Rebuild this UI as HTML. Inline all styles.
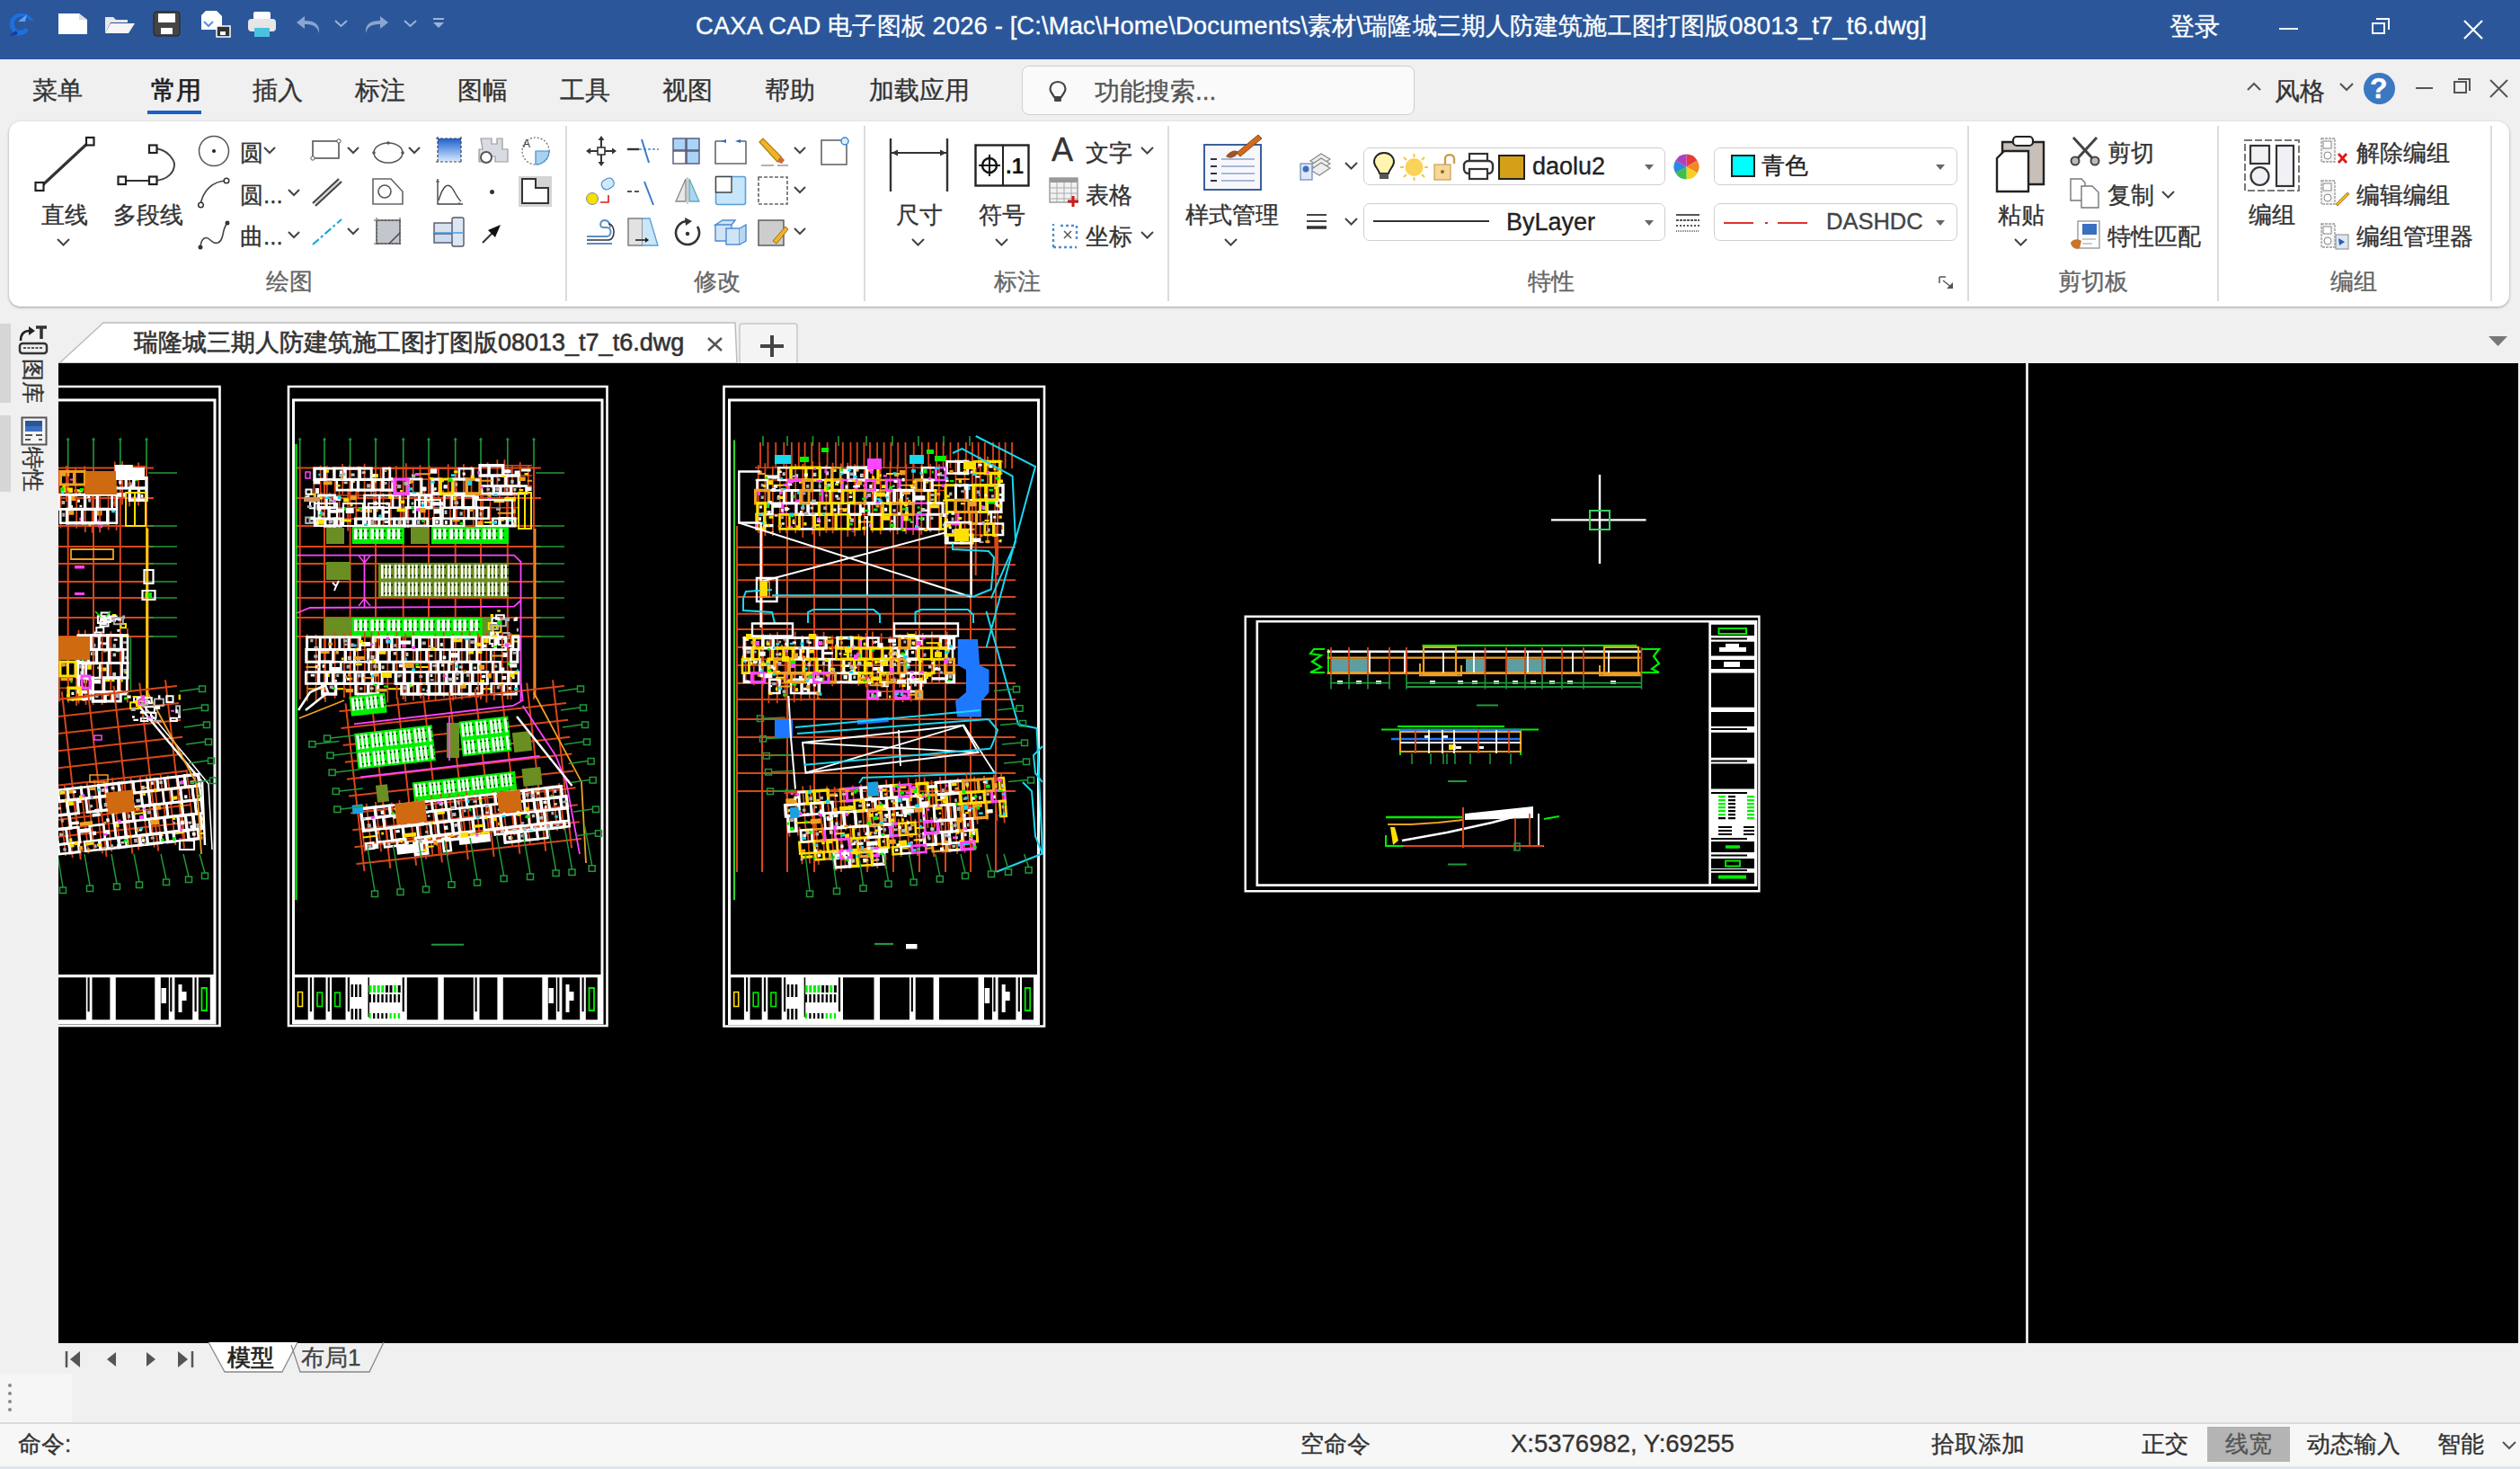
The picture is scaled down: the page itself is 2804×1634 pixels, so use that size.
<!DOCTYPE html>
<html><head><meta charset="utf-8"><style>
html,body{margin:0;padding:0;width:2804px;height:1634px;overflow:hidden;background:#f0f0f0;font-family:"Liberation Sans",sans-serif;}
.a{position:absolute;}
.t{position:absolute;white-space:nowrap;line-height:1;-webkit-text-stroke-width:0.35px;}
svg{position:absolute;overflow:visible;}
#title{position:absolute;left:0;top:0;width:2804px;height:66px;background:#2b579a;}
#menu{position:absolute;left:0;top:66px;width:2804px;height:70px;background:#f0f0f0;}
#ribbon{position:absolute;left:10px;top:135px;width:2782px;height:206px;background:#fff;border-radius:13px;box-shadow:0 1px 3px rgba(0,0,0,.35);}
.mt{font-size:28px;color:#333;}
.rt{font-size:26px;color:#333;}
.gl{font-size:26px;color:#666;}
.sep{position:absolute;width:2px;background:#dcdcdc;top:140px;height:195px;}

</style></head><body>
<div id="title"></div>
<div class="t" style="left:774px;top:15px;font-size:27.4px;letter-spacing:0.125px;color:#fff">CAXA CAD 电子图板 2026 - [C:\Mac\Home\Documents\素材\瑞隆城三期人防建筑施工图打图版08013_t7_t6.dwg]</div>
<div class="t" style="left:2414px;top:16px;font-size:28px;color:#fff">登录</div>
<div class="a" style="left:2536px;top:31px;width:21px;height:2px;background:#fff"></div>
<div class="a" style="left:2639px;top:25px;width:15px;height:13px;border:2px solid #fff;box-sizing:border-box"></div>
<div class="a" style="left:2644px;top:20px;width:15px;height:13px;border-top:2px solid #fff;border-right:2px solid #fff;box-sizing:border-box"></div>
<svg style="left:2741px;top:22px" width="22" height="22"><path d="M1 1L21 21M21 1L1 21" stroke="#fff" stroke-width="2.2"/></svg>
<!-- quick access -->
<svg style="left:6px;top:10px" width="34" height="34" viewBox="0 0 34 34">
 <path d="M6 22 C2 12 10 3 20 5 C26 6 30 10 31 14 L27 12 C24 8 18 7 13 10 C9 13 9 19 12 22 C15 25 20 24 22 21 L26 24 C22 29 15 31 10 28Z" fill="#1e6fe0"/>
 <path d="M14 14 L24 6 L22 14Z" fill="#5aa0ff"/><path d="M4 30 L12 24 L14 28Z" fill="#0b3f9e"/>
</svg>
<svg style="left:64px;top:14px" width="34" height="25" viewBox="0 0 34 25"><path d="M1 1H24L33 8V24H1Z" fill="#fff"/><path d="M24 1V8H33" fill="#ddd"/></svg>
<svg style="left:116px;top:16px" width="34" height="22" viewBox="0 0 34 22"><path d="M1 3H10L13 6H26V9H7L1 21Z" fill="#e8e8e8"/><path d="M7 10H34L27 21H1Z" fill="#f5f5f5"/></svg>
<svg style="left:170px;top:12px" width="31" height="29" viewBox="0 0 31 29"><rect x="1" y="1" width="29" height="27" rx="3" fill="#444" stroke="#222"/><rect x="6" y="3" width="19" height="10" fill="#fff"/><rect x="9" y="19" width="13" height="7" fill="#fff"/></svg>
<svg style="left:223px;top:11px" width="34" height="31" viewBox="0 0 34 31"><path d="M6 1H18L24 7V22H1V6Z" fill="#fff"/><path d="M4 13l5 5 5-5" stroke="#5a8fd8" stroke-width="2" fill="none"/><rect x="18" y="18" width="15" height="12" fill="#333" stroke="#fff" stroke-width="1.5"/><rect x="22" y="24" width="6" height="4" fill="#fff"/></svg>
<svg style="left:275px;top:12px" width="33" height="30" viewBox="0 0 33 30"><rect x="7" y="1" width="19" height="9" rx="2" fill="#fff"/><rect x="1" y="9" width="31" height="14" rx="4" fill="#e6e6e6"/><rect x="8" y="19" width="17" height="10" fill="#49c3e0"/></svg>
<svg style="left:328px;top:16px" width="32" height="22" viewBox="0 0 32 22"><path d="M11 2L2 9L11 16V11C20 11 25 13 27 21C28 11 22 7 11 7Z" fill="#8aa6d0"/></svg>
<svg style="left:372px;top:22px" width="15" height="9"><path d="M1 1L7.5 7L14 1" stroke="#9db3d6" stroke-width="2" fill="none"/></svg>
<svg style="left:402px;top:16px" width="32" height="22" viewBox="0 0 32 22"><path d="M21 2L30 9L21 16V11C12 11 7 13 5 21C4 11 10 7 21 7Z" fill="#8aa6d0"/></svg>
<svg style="left:449px;top:22px" width="15" height="9"><path d="M1 1L7.5 7L14 1" stroke="#9db3d6" stroke-width="2" fill="none"/></svg>
<svg style="left:481px;top:19px" width="14" height="16" viewBox="0 0 14 16"><path d="M1 2H13" stroke="#9db3d6" stroke-width="2"/><path d="M1 6H13L7 12Z" fill="#9db3d6"/></svg>

<div id="menu"></div>
<div class="t mt" style="left:36px;top:87px">菜单</div>
<div class="t mt" style="left:168px;top:87px;color:#222;-webkit-text-stroke-width:0.8px">常用</div>
<div class="a" style="left:164px;top:123px;width:60px;height:4px;background:#1a5fc8"></div>
<div class="t mt" style="left:281px;top:87px">插入</div>
<div class="t mt" style="left:395px;top:87px">标注</div>
<div class="t mt" style="left:509px;top:87px">图幅</div>
<div class="t mt" style="left:623px;top:87px">工具</div>
<div class="t mt" style="left:737px;top:87px">视图</div>
<div class="t mt" style="left:851px;top:87px">帮助</div>
<div class="t mt" style="left:967px;top:87px">加载应用</div>
<div class="a" style="left:1137px;top:73px;width:437px;height:55px;background:#fafafa;border:1.5px solid #d0d0d0;border-radius:8px;box-sizing:border-box"></div>
<div class="t mt" style="left:1218px;top:88px;color:#555">功能搜索...</div>
<div class="t mt" style="left:2531px;top:88px">风格</div>
<div class="a" style="left:2630px;top:81px;width:35px;height:35px;border-radius:50%;background:#3b78c2"></div>
<div class="t" style="left:2637px;top:82px;font-size:32px;font-weight:bold;color:#fff">?</div>
<div class="a" style="left:2688px;top:97px;width:19px;height:2px;background:#555"></div>
<svg style="left:2770px;top:88px" width="21" height="21"><path d="M1 1L20 20M20 1L1 20" stroke="#555" stroke-width="2"/></svg>
<svg style="left:2500px;top:91px" width="16" height="10"><path d="M1 9L8 2L15 9" stroke="#555" stroke-width="2" fill="none"/></svg>
<svg style="left:2603px;top:92px" width="16" height="10"><path d="M1 1L8 8L15 1" stroke="#555" stroke-width="2.2" fill="none"/></svg>
<div class="a" style="left:2730px;top:90px;width:15px;height:14px;border:2px solid #555;box-sizing:border-box"></div>
<div class="a" style="left:2735px;top:87px;width:14px;height:14px;border-top:2px solid #555;border-right:2px solid #555;box-sizing:border-box"></div>
<svg style="left:1166px;top:89px" width="22" height="25" viewBox="0 0 22 25"><path d="M11 2C6 2 2.5 5.5 2.5 10C2.5 14 6 16 7 19H15C16 16 19.5 14 19.5 10C19.5 5.5 16 2 11 2Z" fill="none" stroke="#444" stroke-width="2.2"/><rect x="7" y="19" width="8" height="5" rx="1.5" fill="#444"/></svg>

<div id="ribbon"></div>
<div class="sep" style="left:629px"></div>
<div class="sep" style="left:961px"></div>
<div class="sep" style="left:1299px"></div>
<div class="sep" style="left:2189px"></div>
<div class="sep" style="left:2467px"></div>
<div class="sep" style="left:2771px"></div>
<div class="t gl" style="left:296px;top:300px">绘图</div>
<div class="t gl" style="left:772px;top:300px">修改</div>
<div class="t gl" style="left:1106px;top:300px">标注</div>
<div class="t gl" style="left:1700px;top:300px">特性</div>
<div class="t gl" style="left:2290px;top:300px">剪切板</div>
<div class="t gl" style="left:2593px;top:300px">编组</div>
<!-- ===== draw group ===== -->
<svg style="left:38px;top:151px" width="68" height="64" viewBox="0 0 68 64">
 <path d="M6 58L62 6" stroke="#333" stroke-width="3.2"/>
 <rect x="1.5" y="52" width="9" height="9" fill="#fff" stroke="#222" stroke-width="2.2"/>
 <rect x="58" y="2" width="8.5" height="8.5" fill="#fff" stroke="#222" stroke-width="2.2"/>
</svg>
<div class="t rt" style="left:46px;top:226px">直线</div>
<svg style="left:63px;top:265px" width="15" height="9"><path d="M1 1L7.5 7.5L14 1" stroke="#444" stroke-width="2" fill="none"/></svg>
<svg style="left:130px;top:160px" width="68" height="47" viewBox="0 0 68 47">
 <path d="M6 41H40" stroke="#333" stroke-width="2.2"/>
 <path d="M40 5 C58 5 64 20 64 23 C64 30 58 41 40 41" stroke="#444" stroke-width="2" fill="none"/>
 <rect x="1.5" y="36.5" width="8.5" height="8.5" fill="#fff" stroke="#222" stroke-width="2.2"/>
 <rect x="36" y="36.5" width="8.5" height="8.5" fill="#fff" stroke="#222" stroke-width="2.2"/>
 <rect x="36" y="1.5" width="8.5" height="8.5" fill="#fff" stroke="#222" stroke-width="2.2"/>
</svg>
<div class="t rt" style="left:126px;top:226px">多段线</div>
<!-- row icons -->
<svg style="left:220px;top:150px" width="36" height="36" viewBox="0 0 36 36"><circle cx="18" cy="18" r="16.5" fill="none" stroke="#555" stroke-width="1.5"/><circle cx="18" cy="18" r="2" fill="#222"/></svg>
<div class="t rt" style="left:267px;top:157px">圆</div>
<svg style="left:293px;top:163px" width="14" height="9"><path d="M1 1L7 7L13 1" stroke="#444" stroke-width="2" fill="none"/></svg>
<svg style="left:220px;top:196px" width="36" height="36" viewBox="0 0 36 36"><path d="M3 33 C5 16 17 5 33 5" stroke="#444" stroke-width="1.6" fill="none"/><circle cx="3.5" cy="32" r="2.8" fill="#fff" stroke="#333" stroke-width="1.5"/><circle cx="32" cy="5" r="2.8" fill="#fff" stroke="#333" stroke-width="1.5"/></svg>
<div class="t rt" style="left:267px;top:204px">圆...</div>
<svg style="left:320px;top:210px" width="14" height="9"><path d="M1 1L7 7L13 1" stroke="#444" stroke-width="2" fill="none"/></svg>
<svg style="left:220px;top:243px" width="36" height="36" viewBox="0 0 36 36"><path d="M3 32 C4 20 10 20 14 24 C20 30 26 28 28 18 C29 12 30 8 33 5" stroke="#444" stroke-width="1.6" fill="none"/><circle cx="3" cy="32" r="2.5" fill="#333"/><circle cx="33" cy="5" r="2.5" fill="#333"/></svg>
<div class="t rt" style="left:267px;top:250px">曲...</div>
<svg style="left:320px;top:257px" width="14" height="9"><path d="M1 1L7 7L13 1" stroke="#444" stroke-width="2" fill="none"/></svg>
<svg style="left:345px;top:154px" width="36" height="26" viewBox="0 0 36 26"><rect x="3" y="3" width="29" height="19" fill="none" stroke="#555" stroke-width="1.6"/><circle cx="32" cy="3" r="2.2" fill="#fff" stroke="#555"/><circle cx="3" cy="22" r="2.2" fill="#fff" stroke="#555"/></svg>
<svg style="left:386px;top:163px" width="14" height="9"><path d="M1 1L7 7L13 1" stroke="#444" stroke-width="2" fill="none"/></svg>
<svg style="left:346px;top:196px" width="36" height="34" viewBox="0 0 36 34"><path d="M2 30L31 3M5 33L34 6" stroke="#444" stroke-width="2.2"/><path d="M3.5 31.5L32.5 4.5" stroke="#ccc" stroke-width="1.3"/></svg>
<svg style="left:346px;top:242px" width="36" height="32" viewBox="0 0 36 32"><path d="M2 30L34 2" stroke="#1da5e0" stroke-width="2.2" stroke-dasharray="9 3 3 3"/></svg>
<svg style="left:386px;top:253px" width="14" height="9"><path d="M1 1L7 7L13 1" stroke="#444" stroke-width="2" fill="none"/></svg>
<svg style="left:413px;top:155px" width="38" height="30" viewBox="0 0 38 30"><ellipse cx="19" cy="15" rx="16" ry="11" fill="none" stroke="#555" stroke-width="1.5"/><circle cx="19" cy="4" r="1.8" fill="#555"/><circle cx="3" cy="15" r="1.8" fill="#555"/><circle cx="35" cy="15" r="1.8" fill="#555"/></svg>
<svg style="left:454px;top:163px" width="14" height="9"><path d="M1 1L7 7L13 1" stroke="#444" stroke-width="2" fill="none"/></svg>
<svg style="left:413px;top:197px" width="38" height="32" viewBox="0 0 38 32"><path d="M2 2H22L35 16V30H2Z" fill="none" stroke="#666" stroke-width="1.6"/><circle cx="15" cy="16" r="7" fill="none" stroke="#555" stroke-width="1.6"/></svg>
<svg style="left:415px;top:241px" width="34" height="34" viewBox="0 0 34 34"><rect x="4" y="4" width="26" height="26" fill="#c3c6cc" stroke="#555" stroke-width="1.4"/><path d="M1 4H33M1 30H33M4 1V33M30 1V33" stroke="#555" stroke-width="1" stroke-dasharray="2 2"/><path d="M18 30L30 18" stroke="#444" stroke-width="1.5"/></svg>
<svg style="left:484px;top:151px" width="32" height="32" viewBox="0 0 32 32"><defs><linearGradient id="g1" x1="0" y1="0" x2="0" y2="1"><stop offset="0" stop-color="#1e5fd0"/><stop offset="1" stop-color="#d8ecff"/></linearGradient></defs><rect x="3" y="3" width="26" height="26" fill="url(#g1)"/><path d="M1 3H31M1 29H31M3 1V31M29 1V31" stroke="#444" stroke-width="1.2" stroke-dasharray="3 2"/></svg>
<svg style="left:484px;top:198px" width="32" height="31" viewBox="0 0 32 31"><path d="M3 1V29H31" stroke="#444" stroke-width="1.4" fill="none"/><path d="M4 25C9 8 14 6 18 10C22 14 24 22 29 26" stroke="#444" stroke-width="1.4" fill="none"/><path d="M1 4H5M27 29V27" stroke="#444"/></svg>
<svg style="left:481px;top:240px" width="37" height="36" viewBox="0 0 37 36"><rect x="2" y="8" width="22" height="12" fill="#d9e2ef" stroke="#556" stroke-width="1.4"/><rect x="2" y="20" width="22" height="10" fill="#c9dcf2" stroke="#556" stroke-width="1.4"/><rect x="22" y="2" width="13" height="32" rx="2" fill="#dde6f3" stroke="#556" stroke-width="1.4"/><path d="M2 19H35" stroke="#4a9be0" stroke-width="1.6"/></svg>
<svg style="left:529px;top:150px" width="38" height="35" viewBox="0 0 38 35"><path d="M6 4H18V10H24V4H30V16H36V30H22V24H16V30H4V16H8Z" fill="#d8dbe3" stroke="#999" stroke-width="1.2"/><circle cx="12" cy="25" r="6" fill="#fff" stroke="#555" stroke-width="2"/></svg>
<div class="a" style="left:545px;top:211px;width:5px;height:5px;background:#333;border-radius:50%"></div>
<svg style="left:535px;top:248px" width="24" height="24" viewBox="0 0 24 24"><path d="M2 22L17 7" stroke="#333" stroke-width="2"/><path d="M22 2L8 8L16 16Z" fill="#111"/></svg>
<svg style="left:579px;top:151px" width="36" height="34" viewBox="0 0 36 34"><circle cx="17" cy="17" r="15" fill="none" stroke="#666" stroke-width="1.2" stroke-dasharray="2 2"/><path d="M17 17H32A15 15 0 0 1 17 32Z" fill="#a7d3f0" stroke="#4a8ac8" stroke-width="1.2"/><text x="3" y="13" font-size="12" font-family="Liberation Sans" fill="#333">A</text></svg>
<svg style="left:576px;top:195px" width="39" height="36" viewBox="0 0 39 36"><rect x="1" y="1" width="37" height="34" fill="#d4d4d4"/><path d="M5 4H20V14H34V31H5Z" fill="#fff" stroke="#333" stroke-width="2"/></svg>
<!-- ===== modify group ===== -->
<svg style="left:652px;top:151px" width="34" height="34" viewBox="0 0 34 34"><path d="M17 2V32M2 17H32" stroke="#333" stroke-width="2"/><rect x="13" y="13" width="8" height="8" fill="#fff" stroke="#333" stroke-width="1.6"/><path d="M17 0L13.5 5H20.5ZM17 34L13.5 29H20.5ZM0 17L5 13.5V20.5ZM34 17L29 13.5V20.5Z" fill="#333"/></svg>
<svg style="left:697px;top:153px" width="38" height="30" viewBox="0 0 38 30"><path d="M1 13H14" stroke="#333" stroke-width="2.4"/><path d="M14 13H36" stroke="#4a90d0" stroke-width="1.6" stroke-dasharray="3 2"/><path d="M17 2L25 28" stroke="#3a7ac8" stroke-width="2"/></svg>
<svg style="left:747px;top:152px" width="34" height="32" viewBox="0 0 34 32"><rect x="2" y="2" width="14" height="13" fill="#a9d4f5" stroke="#557" stroke-width="1.4"/><rect x="17" y="2" width="14" height="13" fill="#a9d4f5" stroke="#557" stroke-width="1.4"/><rect x="2" y="16" width="14" height="14" fill="#fff" stroke="#557" stroke-width="1.4"/><rect x="17" y="16" width="14" height="14" fill="#a9d4f5" stroke="#557" stroke-width="1.4"/></svg>
<svg style="left:794px;top:152px" width="38" height="32" viewBox="0 0 38 32"><path d="M2 5V30H36V5" fill="none" stroke="#666" stroke-width="1.6"/><path d="M2 5H10M28 5H36" stroke="#666" stroke-width="1.6"/><path d="M8 5L14 3V7ZM24 5L30 3V7Z" fill="#2a6ac0"/></svg>
<svg style="left:843px;top:152px" width="36" height="34" viewBox="0 0 36 34"><path d="M2 6L6 2L26 22L22 28Z" fill="#f0b429" stroke="#b07d10" stroke-width="1.2"/><path d="M22 28L26 22L30 26L27 30Z" fill="#c86b3c"/><path d="M4 32H18M22 32H34" stroke="#666" stroke-width="1.2"/></svg>
<svg style="left:883px;top:163px" width="14" height="9"><path d="M1 1L7 7L13 1" stroke="#444" stroke-width="2" fill="none"/></svg>
<svg style="left:912px;top:152px" width="34" height="32" viewBox="0 0 34 32"><rect x="2" y="4" width="28" height="27" fill="none" stroke="#666" stroke-width="1.6"/><circle cx="28" cy="5" r="4" fill="#d8efff" stroke="#3a8ad0" stroke-width="1.5"/></svg>
<svg style="left:651px;top:197px" width="36" height="34" viewBox="0 0 36 34"><circle cx="8" cy="24" r="6.5" fill="#f5e000" stroke="#888" stroke-width="1"/><rect x="18" y="2" width="14" height="11" rx="5" transform="rotate(-30 25 7)" fill="#cfe9fb" stroke="#4a90d0" stroke-width="1.2"/><path d="M17 28H26V20" stroke="#d02020" stroke-width="1.6" fill="none"/></svg>
<svg style="left:697px;top:200px" width="38" height="30" viewBox="0 0 38 30"><path d="M1 13H16" stroke="#555" stroke-width="2" stroke-dasharray="5 3"/><path d="M20 2L30 28" stroke="#3a7ac8" stroke-width="2"/></svg>
<svg style="left:748px;top:197px" width="34" height="30" viewBox="0 0 34 30"><path d="M15 2L4 27H15Z" fill="#e8e8e8" stroke="#888" stroke-width="1.3"/><path d="M19 2L30 27H19Z" fill="#a9d4f5" stroke="#6aa" stroke-width="1.3"/><path d="M17 0V30" stroke="#999" stroke-width="1"/></svg>
<svg style="left:795px;top:195px" width="36" height="34" viewBox="0 0 36 34"><rect x="1.5" y="1.5" width="33" height="31" rx="2" fill="#c5e6fb" stroke="#5aa0d8" stroke-width="1.6"/><path d="M1.5 1.5H19V19H1.5Z" fill="#fff" stroke="#444" stroke-width="1.4"/></svg>
<svg style="left:842px;top:195px" width="36" height="34" viewBox="0 0 36 34"><rect x="2" y="2" width="32" height="30" fill="none" stroke="#666" stroke-width="1.6" stroke-dasharray="4 2"/></svg>
<svg style="left:883px;top:207px" width="14" height="9"><path d="M1 1L7 7L13 1" stroke="#444" stroke-width="2" fill="none"/></svg>
<svg style="left:651px;top:241px" width="36" height="32" viewBox="0 0 36 32"><path d="M2 22H24C30 22 30 12 24 12H20C16 12 16 4 22 4C27 4 28 10 28 12" stroke="#5a8fc8" stroke-width="2" fill="none"/><path d="M2 26H26C34 26 34 8 26 8" stroke="#333" stroke-width="1.5" fill="none"/><path d="M2 30H30" stroke="#5a8fc8" stroke-width="2"/></svg>
<svg style="left:697px;top:241px" width="38" height="34" viewBox="0 0 38 34"><rect x="2" y="2" width="16" height="30" fill="#e2e2e2" stroke="#777" stroke-width="1.4"/><path d="M18 2H26L35 32H18" fill="#cbe6f8" stroke="#5aa0d8" stroke-width="1.4"/><path d="M10 26H24" stroke="#222" stroke-width="1.6"/><path d="M25 26L21 23V29Z" fill="#222"/></svg>
<svg style="left:748px;top:242px" width="34" height="32" viewBox="0 0 34 32"><path d="M28 10A13 13 0 1 1 18 4" stroke="#333" stroke-width="2.6" fill="none"/><path d="M14 0L22 4L15 9Z" fill="#333"/><circle cx="17" cy="18" r="2.2" fill="#333"/></svg>
<svg style="left:794px;top:242px" width="38" height="32" viewBox="0 0 38 32"><path d="M2 8L10 3H24L20 8ZM2 8H20V26H2Z" fill="#cfe4f7" stroke="#4a8ad0" stroke-width="1.4"/><rect x="14" y="12" width="15" height="18" fill="#cfe4f7" stroke="#4a8ad0" stroke-width="1.4"/><path d="M29 12L36 8V26L29 30" fill="#b8d8f2" stroke="#4a8ad0" stroke-width="1.4"/></svg>
<svg style="left:842px;top:242px" width="36" height="34" viewBox="0 0 36 34"><rect x="2" y="3" width="28" height="28" fill="#cdcdcd" stroke="#555" stroke-width="1.4"/><path d="M18 26L32 10L35 13L22 29Z" fill="#f0b429" stroke="#a06a10" stroke-width="1"/></svg>
<svg style="left:883px;top:253px" width="14" height="9"><path d="M1 1L7 7L13 1" stroke="#444" stroke-width="2" fill="none"/></svg>
<!-- ===== annotation group ===== -->
<svg style="left:988px;top:153px" width="70" height="61" viewBox="0 0 70 61"><path d="M3 1V60M66 1V60" stroke="#333" stroke-width="2.4"/><path d="M4 17H65" stroke="#333" stroke-width="1.8"/><path d="M4 17L11 13.5V20.5ZM65 17L58 13.5V20.5Z" fill="#333"/></svg>
<div class="t rt" style="left:997px;top:226px">尺寸</div>
<svg style="left:1014px;top:265px" width="15" height="9"><path d="M1 1L7.5 7.5L14 1" stroke="#444" stroke-width="2" fill="none"/></svg>
<svg style="left:1084px;top:160px" width="62" height="48" viewBox="0 0 62 48"><rect x="1.5" y="1.5" width="59" height="45" fill="#fff" stroke="#222" stroke-width="2.4"/><path d="M32 1.5V46.5" stroke="#222" stroke-width="2"/><circle cx="17" cy="24" r="8" fill="none" stroke="#111" stroke-width="2.4"/><path d="M5 24H29M17 12V36" stroke="#111" stroke-width="2"/><text x="35" y="33" font-size="24" font-weight="bold" font-family="Liberation Sans" fill="#111">.1</text></svg>
<div class="t rt" style="left:1089px;top:226px">符号</div>
<svg style="left:1107px;top:265px" width="15" height="9"><path d="M1 1L7.5 7.5L14 1" stroke="#444" stroke-width="2" fill="none"/></svg>
<div class="t" style="left:1170px;top:149px;font-size:36px;color:#333">A</div>
<div class="t rt" style="left:1208px;top:157px">文字</div>
<svg style="left:1269px;top:163px" width="15" height="9"><path d="M1 1L7.5 7.5L14 1" stroke="#444" stroke-width="2" fill="none"/></svg>
<svg style="left:1167px;top:197px" width="36" height="34" viewBox="0 0 36 34"><rect x="1" y="1" width="31" height="27" fill="#f2f2f2" stroke="#888" stroke-width="1.2"/><rect x="1" y="1" width="31" height="5" fill="#999"/><path d="M1 12H32M1 18H32M1 24H32M9 6V28M17 6V28M25 6V28" stroke="#aaa" stroke-width="1"/><path d="M27 21V33M21 27H33" stroke="#d01818" stroke-width="3"/></svg>
<div class="t rt" style="left:1208px;top:204px">表格</div>
<svg style="left:1170px;top:247px" width="30" height="30" viewBox="0 0 30 30"><path d="M2 28V2M2 28H28" stroke="#4a90d0" stroke-width="2.4" stroke-dasharray="3 3"/><path d="M10 4H28V20" stroke="#4a90d0" stroke-width="2.4" stroke-dasharray="3 3" fill="none"/><path d="M14 10L22 18M22 10L14 18" stroke="#555" stroke-width="1.5"/></svg>
<div class="t rt" style="left:1208px;top:250px">坐标</div>
<svg style="left:1269px;top:257px" width="15" height="9"><path d="M1 1L7.5 7.5L14 1" stroke="#444" stroke-width="2" fill="none"/></svg>
<!-- ===== properties group ===== -->
<svg style="left:1338px;top:148px" width="70" height="65" viewBox="0 0 70 65">
 <rect x="2" y="13" width="63" height="50" fill="#f8f8fc" stroke="#3a6098" stroke-width="2"/>
 <path d="M9 29H16M9 37H16M9 45H16M9 53H16" stroke="#334" stroke-width="2"/>
 <path d="M21 29H58M21 37H58M21 45H58M21 53H58" stroke="#8aa4cc" stroke-width="1.6"/>
 <path d="M26 26C30 20 36 18 40 21C38 26 32 30 26 26Z" fill="#a0522d"/>
 <path d="M38 22L62 2L66 6L42 26Z" fill="#d2691e" stroke="#8b4513" stroke-width="1"/>
</svg>
<div class="t rt" style="left:1319px;top:226px">样式管理</div>
<svg style="left:1362px;top:265px" width="15" height="9"><path d="M1 1L7.5 7.5L14 1" stroke="#444" stroke-width="2" fill="none"/></svg>
<svg style="left:1446px;top:167px" width="36" height="34" viewBox="0 0 36 34"><path d="M12 12L24 4L34 10L22 18Z" fill="#eee" stroke="#888" stroke-width="1.2"/><path d="M12 17L24 9L34 15L22 23Z" fill="#eee" stroke="#888" stroke-width="1.2"/><path d="M12 22L24 14L34 20L22 28Z" fill="#eee" stroke="#888" stroke-width="1.2"/><rect x="1" y="15" width="13" height="18" fill="#dfe8f5" stroke="#6a88b8" stroke-width="1.2"/><circle cx="7" cy="21" r="3.5" fill="#3a70c0"/></svg>
<svg style="left:1496px;top:180px" width="15" height="9"><path d="M1 1L7.5 7.5L14 1" stroke="#444" stroke-width="2" fill="none"/></svg>
<div class="a" style="left:1517px;top:164px;width:336px;height:42px;background:#fff;border:1.5px solid #cfcfcf;border-radius:7px;box-sizing:border-box"></div>
<svg style="left:1527px;top:168px" width="26" height="34" viewBox="0 0 26 34"><path d="M13 2C6 2 2 7 2 12C2 17 7 20 8 25H18C19 20 24 17 24 12C24 7 20 2 13 2Z" fill="#fff5b0" stroke="#222" stroke-width="2"/><rect x="8" y="25" width="10" height="6" fill="#555"/></svg>
<svg style="left:1557px;top:170px" width="33" height="32" viewBox="0 0 33 32"><circle cx="16.5" cy="16" r="10" fill="#f9d35a"/><path d="M16.5 1V5M16.5 27V31M1 16H5M28 16H32M5 5L8 8M25 24L28 27M5 27L8 24M25 8L28 5" stroke="#f5c842" stroke-width="2"/></svg>
<svg style="left:1594px;top:168px" width="32" height="34" viewBox="0 0 32 34"><rect x="2" y="15" width="18" height="17" fill="#f5d79a" stroke="#c8a050" stroke-width="1.2"/><path d="M14 15V8C14 3 24 3 24 8V14" stroke="#c8a050" stroke-width="2.4" fill="none"/><circle cx="11" cy="23" r="2" fill="#8a6a20"/></svg>
<svg style="left:1627px;top:169px" width="36" height="32" viewBox="0 0 36 32"><rect x="8" y="2" width="20" height="9" fill="#fff" stroke="#333" stroke-width="2.2"/><rect x="2" y="10" width="32" height="14" rx="5" fill="#fff" stroke="#333" stroke-width="2.4"/><rect x="8" y="19" width="20" height="11" fill="#fff" stroke="#333" stroke-width="2.2"/></svg>
<div class="a" style="left:1667px;top:172px;width:30px;height:28px;background:#d4a017;border:2px solid #222;box-sizing:border-box"></div>
<div class="t" style="left:1705px;top:172px;font-size:27px;color:#222">daolu2</div>
<svg style="left:1830px;top:183px" width="10" height="6"><path d="M0 0H10L5 6Z" fill="#666"/></svg>
<svg style="left:1861px;top:170px" width="31" height="31" viewBox="0 0 31 31"><g transform="translate(15.5 15.5)"><path d="M0 0L0 -14A14 14 0 0 1 12.1 -7Z" fill="#e83a3a"/><path d="M0 0L12.1 -7A14 14 0 0 1 12.1 7Z" fill="#f08a24"/><path d="M0 0L12.1 7A14 14 0 0 1 0 14Z" fill="#f5d020"/><path d="M0 0L0 14A14 14 0 0 1 -12.1 7Z" fill="#3cc04a"/><path d="M0 0L-12.1 7A14 14 0 0 1 -12.1 -7Z" fill="#2a8ae0"/><path d="M0 0L-12.1 -7A14 14 0 0 1 0 -14Z" fill="#b040c0"/></g></svg>
<div class="a" style="left:1907px;top:164px;width:271px;height:42px;background:#fff;border:1.5px solid #cfcfcf;border-radius:7px;box-sizing:border-box"></div>
<div class="a" style="left:1926px;top:172px;width:27px;height:25px;background:#00ffff;border:2px solid #222;box-sizing:border-box"></div>
<div class="t rt" style="left:1960px;top:171px;color:#222">青色</div>
<svg style="left:2154px;top:183px" width="10" height="6"><path d="M0 0H10L5 6Z" fill="#666"/></svg>
<svg style="left:1453px;top:237px" width="24" height="19" viewBox="0 0 24 19"><path d="M1 2H23M1 9H23" stroke="#444" stroke-width="2"/><path d="M1 16H23" stroke="#333" stroke-width="3.5"/></svg>
<svg style="left:1496px;top:242px" width="15" height="9"><path d="M1 1L7.5 7.5L14 1" stroke="#444" stroke-width="2" fill="none"/></svg>
<div class="a" style="left:1517px;top:226px;width:336px;height:42px;background:#fff;border:1.5px solid #cfcfcf;border-radius:7px;box-sizing:border-box"></div>
<div class="a" style="left:1528px;top:245px;width:129px;height:2px;background:#333"></div>
<div class="t" style="left:1676px;top:234px;font-size:27px;color:#222">ByLayer</div>
<svg style="left:1830px;top:245px" width="10" height="6"><path d="M0 0H10L5 6Z" fill="#666"/></svg>
<svg style="left:1864px;top:237px" width="28" height="22" viewBox="0 0 28 22"><path d="M1 2H27" stroke="#555" stroke-width="2"/><path d="M1 8H27" stroke="#555" stroke-width="2" stroke-dasharray="3 1"/><path d="M1 14H27" stroke="#555" stroke-width="2" stroke-dasharray="2 2"/><path d="M1 20H27" stroke="#555" stroke-width="1.5" stroke-dasharray="1 1"/></svg>
<div class="a" style="left:1907px;top:226px;width:271px;height:42px;background:#fff;border:1.5px solid #cfcfcf;border-radius:7px;box-sizing:border-box"></div>
<div class="a" style="left:1918px;top:247px;width:33px;height:2px;background:#e03030"></div>
<div class="a" style="left:1964px;top:247px;width:3px;height:2px;background:#e03030"></div>
<div class="a" style="left:1978px;top:247px;width:33px;height:2px;background:#e03030"></div>
<div class="t" style="left:2032px;top:234px;font-size:25.5px;color:#444">DASHDC</div>
<svg style="left:2154px;top:245px" width="10" height="6"><path d="M0 0H10L5 6Z" fill="#666"/></svg>
<svg style="left:2157px;top:307px" width="17" height="15" viewBox="0 0 17 15"><path d="M1 1H8M1 1V8" stroke="#555" stroke-width="1.5" fill="none"/><path d="M5 5L15 13" stroke="#555" stroke-width="1.5"/><path d="M16 14H9L16 7Z" fill="#555"/></svg>
<!-- ===== clipboard group ===== -->
<svg style="left:2220px;top:150px" width="60" height="66" viewBox="0 0 60 66">
 <path d="M8 8H54V55H8Z" fill="#c8c0b8" stroke="#222" stroke-width="2.4"/>
 <rect x="20" y="2" width="22" height="10" rx="4" fill="#fff" stroke="#222" stroke-width="2.2"/>
 <path d="M2 26L10 18H37V63H2Z" fill="#fff" stroke="#222" stroke-width="2.4"/>
</svg>
<div class="t rt" style="left:2223px;top:226px">粘贴</div>
<svg style="left:2241px;top:265px" width="15" height="9"><path d="M1 1L7.5 7.5L14 1" stroke="#444" stroke-width="2" fill="none"/></svg>
<svg style="left:2303px;top:151px" width="34" height="34" viewBox="0 0 34 34"><path d="M4 2L26 26M30 2L8 26" stroke="#444" stroke-width="3"/><circle cx="6" cy="28" r="4.5" fill="#bbb" stroke="#444" stroke-width="2"/><circle cx="28" cy="28" r="4.5" fill="#bbb" stroke="#444" stroke-width="2"/></svg>
<div class="t rt" style="left:2345px;top:157px">剪切</div>
<svg style="left:2302px;top:197px" width="36" height="35" viewBox="0 0 36 35"><path d="M2 2H14L18 6V26H2Z" fill="#fff" stroke="#777" stroke-width="1.4"/><path d="M14 10H26L33 17V34H14Z" fill="#fff" stroke="#777" stroke-width="1.4"/></svg>
<div class="t rt" style="left:2345px;top:204px">复制</div>
<svg style="left:2405px;top:212px" width="15" height="9"><path d="M1 1L7.5 7.5L14 1" stroke="#444" stroke-width="2" fill="none"/></svg>
<svg style="left:2302px;top:244px" width="36" height="35" viewBox="0 0 36 35"><rect x="10" y="2" width="24" height="30" fill="#fff" stroke="#999" stroke-width="1.4"/><rect x="15" y="5" width="16" height="12" fill="#3a70c0"/><path d="M15 22H30M15 27H26" stroke="#999" stroke-width="1.2"/><path d="M2 26C4 22 10 21 14 24L12 32C8 34 3 32 2 26Z" fill="#c8742a"/></svg>
<div class="t rt" style="left:2345px;top:250px">特性匹配</div>
<!-- ===== group group ===== -->
<svg style="left:2496px;top:154px" width="64" height="60" viewBox="0 0 64 60"><rect x="2" y="2" width="60" height="56" fill="none" stroke="#777" stroke-width="2" stroke-dasharray="8 3"/><rect x="8" y="8" width="21" height="20" fill="#f0f0f5" stroke="#333" stroke-width="2.2"/><rect x="37" y="8" width="19" height="45" fill="#f0f0f5" stroke="#333" stroke-width="2.2"/><circle cx="18.5" cy="42" r="10" fill="#f0f0f5" stroke="#333" stroke-width="2.2"/></svg>
<div class="t rt" style="left:2502px;top:226px">编组</div>
<svg style="left:2581px;top:152px" width="34" height="31" viewBox="0 0 34 31"><rect x="2" y="2" width="15" height="26" fill="#f5f5f5" stroke="#999" stroke-width="1.3" stroke-dasharray="3 1"/><rect x="4" y="5" width="9" height="8" fill="#fff" stroke="#888"/><circle cx="9" cy="21" r="4" fill="#fff" stroke="#888"/><path d="M21 19L30 29M30 19L21 29" stroke="#e01818" stroke-width="2.8"/></svg>
<div class="t rt" style="left:2622px;top:157px">解除编组</div>
<svg style="left:2581px;top:199px" width="34" height="31" viewBox="0 0 34 31"><rect x="2" y="2" width="15" height="26" fill="#f5f5f5" stroke="#999" stroke-width="1.3" stroke-dasharray="3 1"/><rect x="4" y="5" width="9" height="8" fill="#fff" stroke="#888"/><circle cx="9" cy="21" r="4" fill="#fff" stroke="#888"/><path d="M18 28L31 15L33 17L20 30Z" fill="#f0b429" stroke="#a06a10" stroke-width=".8"/></svg>
<div class="t rt" style="left:2622px;top:204px">编辑编组</div>
<svg style="left:2581px;top:247px" width="34" height="31" viewBox="0 0 34 31"><rect x="2" y="2" width="15" height="26" fill="#f5f5f5" stroke="#999" stroke-width="1.3" stroke-dasharray="3 1"/><rect x="4" y="5" width="9" height="8" fill="#fff" stroke="#888"/><circle cx="9" cy="21" r="4" fill="#fff" stroke="#888"/><rect x="18" y="14" width="14" height="16" fill="#dde6f3" stroke="#888"/><path d="M21 18L28 22L22 26Z" fill="#2a60b0"/></svg>
<div class="t rt" style="left:2622px;top:250px">编组管理器</div>

<!-- left sidebar -->
<div class="a" style="left:0;top:360px;width:12px;height:88px;background:#d6d6d6"></div>
<div class="a" style="left:0;top:462px;width:12px;height:85px;background:#d6d6d6"></div>
<svg style="left:20px;top:362px" width="36" height="34" viewBox="0 0 36 34">
 <rect x="2" y="20" width="30" height="11" rx="3" fill="#eee" stroke="#333" stroke-width="2.5"/>
 <path d="M6 25h22" stroke="#555" stroke-width="2" stroke-dasharray="3 1.5"/>
 <path d="M3 17 C3 9 7 6 13 6" stroke="#222" stroke-width="2.5" fill="none"/><path d="M12 1l7 5-7 5z" fill="#222"/>
 <path d="M20 2h12M26 2v13" stroke="#333" stroke-width="3.5"/>
</svg>
<div class="t" style="left:24px;top:399px;font-size:25px;color:#333;writing-mode:vertical-rl;text-orientation:sideways;">图库</div>
<svg style="left:23px;top:463px" width="30" height="33" viewBox="0 0 30 33">
 <rect x="1.5" y="1.5" width="27" height="30" fill="#f4f4f4" stroke="#555" stroke-width="2"/>
 <rect x="5" y="5" width="19" height="12" fill="#3d6fbf"/><rect x="5" y="5" width="19" height="6" fill="#2a5598"/>
 <path d="M5 21h8M5 26h6M17 21h7M20 26h4" stroke="#555" stroke-width="2"/>
</svg>
<div class="t" style="left:24px;top:497px;font-size:25px;color:#333;writing-mode:vertical-rl;text-orientation:sideways;">特性</div>
<!-- document tab -->
<svg style="left:66px;top:357px" width="830" height="48" viewBox="0 0 830 48">
 <path d="M0 47 L49 2 L752 2 L754 47 Z" fill="#fff" stroke="#bdbdbd" stroke-width="1.5"/>
 <path d="M757 47 L757 6 Q757 3 760 3 L818 3 Q821 3 821 6 L821 47" fill="#f4f4f4" stroke="#c8c8c8" stroke-width="1.5"/>
</svg>
<div class="t" style="left:149px;top:368px;font-size:27px;color:#333;-webkit-text-stroke-width:0.6px">瑞隆城三期人防建筑施工图打图版08013_t7_t6.dwg</div>
<svg style="left:786px;top:374px" width="19" height="18"><path d="M2 2L17 16M17 2L2 16" stroke="#555" stroke-width="2.4"/></svg>
<svg style="left:845px;top:372px" width="28" height="26"><path d="M14 1V25M1 13H27" stroke="#444" stroke-width="4"/></svg>
<svg style="left:2769px;top:374px" width="21" height="12"><path d="M0 0H21L10.5 11Z" fill="#777"/></svg>

<div class="a" style="left:65px;top:404px;width:2737px;height:1090px;background:#000"></div>
<svg style="left:0;top:0" width="2804" height="1634" viewBox="0 0 2804 1634">
<defs><clipPath id="cv"><rect x="65" y="404" width="2737" height="1090"/></clipPath></defs>
<g clip-path="url(#cv)">
<path  d="M-110 430L244.5 430L244.5 1141L-110 1141ZM321 430L675.5 430L675.5 1141L321 1141ZM805.5 430L1162 430L1162 1141.5L805.5 1141.5Z" stroke="#ffffff" stroke-width="2.6" fill="none"/>
<path  d="M-104.5 445L239 445L239 1138L-104.5 1138ZM326.5 445L670 445L670 1138L326.5 1138ZM811.5 445L1155.5 445L1155.5 1138.5L811.5 1138.5Z" stroke="#ffffff" stroke-width="3" fill="none"/>
<path d="M-104.5 1084h343.5v53h-343.5Z" fill="#ffffff"/>
<path d="M-103 1087.3h14.7v47h-14.7ZM-81.7 1087.3h13.2v47h-13.2ZM-61.9 1087.3h15.4v47h-15.4ZM21.8 1087.3h34.5v47h-34.5ZM62.8 1087.3h33v47h-33ZM102.5 1087.3h19.9v47h-19.9ZM128.8 1087.3h43.5v47h-43.5ZM178.8 1087.3h9v47h-9ZM194.4 1087.3h19.8v47h-19.8ZM220.8 1087.3h13v47h-13ZM-86.2 1087.3h2.2v38h-2.2ZM-66.3 1087.3h2.2v38h-2.2ZM-44.2 1087.3h2.2v38h-2.2ZM16.7 1087.3h2.2v38h-2.2ZM97.5 1087.3h2.2v38h-2.2ZM189.2 1087.3h2.2v38h-2.2ZM216.5 1087.3h2.2v38h-2.2Z" fill="#000"/>
<path d="M-40.5 1095h2.6v14h-2.6ZM-40.5 1122h2.6v12h-2.6ZM-36 1095h2.6v14h-2.6ZM-36 1122h2.6v12h-2.6ZM-31.5 1095h2.6v14h-2.6ZM-31.5 1122h2.6v12h-2.6ZM-21.5 1087.3h1.5v44h-1.5ZM-20.5 1106h2.4v9h-2.4ZM-15.9 1106h2.4v9h-2.4ZM-15.9 1127h2.2v6h-2.2ZM-11.3 1106h2.4v9h-2.4ZM-11.3 1127h2.2v6h-2.2ZM-6.7 1106h2.4v9h-2.4ZM-6.7 1127h2.2v6h-2.2ZM-2.1 1106h2.4v9h-2.4ZM-2.1 1096h3v8h-3ZM-2.1 1127h2.2v6h-2.2ZM2.5 1106h2.4v9h-2.4ZM2.5 1096h3v8h-3ZM7.1 1106h2.4v9h-2.4ZM11.7 1106h2.4v9h-2.4ZM11.7 1096h3v8h-3Z" fill="#000"/>
<path d="M-20.5 1096h3v8h-3ZM-20.5 1127h2.2v6h-2.2ZM-15.9 1096h3v8h-3ZM-11.3 1096h3v8h-3ZM-6.7 1096h3v8h-3ZM2.5 1127h2.2v6h-2.2ZM7.1 1096h3v8h-3ZM7.1 1127h2.2v6h-2.2ZM11.7 1127h2.2v6h-2.2Z" fill="#00f000"/>
<path d="M179.5 1099h5.5v17h-5.5ZM198.5 1095L202.5 1095L202.5 1103L207.5 1103L207.5 1113L202.5 1113L202.5 1126L198.5 1126ZM326.5 1084h343.5v53h-343.5Z" fill="#ffffff"/>
<path d="M328 1087.3h14.7v47h-14.7ZM349.3 1087.3h13.2v47h-13.2ZM369.1 1087.3h15.4v47h-15.4ZM452.8 1087.3h34.5v47h-34.5ZM493.8 1087.3h33v47h-33ZM533.5 1087.3h19.9v47h-19.9ZM559.8 1087.3h43.5v47h-43.5ZM609.8 1087.3h9v47h-9ZM625.4 1087.3h19.8v47h-19.8ZM651.8 1087.3h13v47h-13ZM344.8 1087.3h2.2v38h-2.2ZM364.7 1087.3h2.2v38h-2.2ZM386.8 1087.3h2.2v38h-2.2ZM447.7 1087.3h2.2v38h-2.2ZM528.5 1087.3h2.2v38h-2.2ZM620.2 1087.3h2.2v38h-2.2ZM647.5 1087.3h2.2v38h-2.2Z" fill="#000"/>
<path d="M390.5 1095h2.6v14h-2.6ZM390.5 1122h2.6v12h-2.6ZM395 1095h2.6v14h-2.6ZM395 1122h2.6v12h-2.6ZM399.5 1095h2.6v14h-2.6ZM399.5 1122h2.6v12h-2.6ZM409.5 1087.3h1.5v44h-1.5ZM410.5 1106h2.4v9h-2.4ZM415.1 1106h2.4v9h-2.4ZM415.1 1127h2.2v6h-2.2ZM419.7 1106h2.4v9h-2.4ZM419.7 1127h2.2v6h-2.2ZM424.3 1106h2.4v9h-2.4ZM424.3 1127h2.2v6h-2.2ZM428.9 1106h2.4v9h-2.4ZM428.9 1096h3v8h-3ZM428.9 1127h2.2v6h-2.2ZM433.5 1106h2.4v9h-2.4ZM433.5 1096h3v8h-3ZM438.1 1106h2.4v9h-2.4ZM442.7 1106h2.4v9h-2.4ZM442.7 1096h3v8h-3Z" fill="#000"/>
<path d="M410.5 1096h3v8h-3ZM410.5 1127h2.2v6h-2.2ZM415.1 1096h3v8h-3ZM419.7 1096h3v8h-3ZM424.3 1096h3v8h-3ZM433.5 1127h2.2v6h-2.2ZM438.1 1096h3v8h-3ZM438.1 1127h2.2v6h-2.2ZM442.7 1127h2.2v6h-2.2Z" fill="#00f000"/>
<path d="M610.5 1099h5.5v17h-5.5ZM629.5 1095L633.5 1095L633.5 1103L638.5 1103L638.5 1113L633.5 1113L633.5 1126L629.5 1126ZM811.7 1084h343.7v53h-343.7Z" fill="#ffffff"/>
<path d="M813.2 1087.3h14.7v47h-14.7ZM834.5 1087.3h13.2v47h-13.2ZM854.3 1087.3h15.4v47h-15.4ZM938 1087.3h34.5v47h-34.5ZM979 1087.3h33v47h-33ZM1018.7 1087.3h19.9v47h-19.9ZM1045 1087.3h43.5v47h-43.5ZM1095 1087.3h9v47h-9ZM1110.6 1087.3h19.8v47h-19.8ZM1137 1087.3h13v47h-13ZM830 1087.3h2.2v38h-2.2ZM849.9 1087.3h2.2v38h-2.2ZM872 1087.3h2.2v38h-2.2ZM932.9 1087.3h2.2v38h-2.2ZM1013.7 1087.3h2.2v38h-2.2ZM1105.4 1087.3h2.2v38h-2.2ZM1132.7 1087.3h2.2v38h-2.2Z" fill="#000"/>
<path d="M875.7 1095h2.6v14h-2.6ZM875.7 1122h2.6v12h-2.6ZM880.2 1095h2.6v14h-2.6ZM880.2 1122h2.6v12h-2.6ZM884.7 1095h2.6v14h-2.6ZM884.7 1122h2.6v12h-2.6ZM894.7 1087.3h1.5v44h-1.5ZM895.7 1106h2.4v9h-2.4ZM900.3 1106h2.4v9h-2.4ZM900.3 1127h2.2v6h-2.2ZM904.9 1106h2.4v9h-2.4ZM904.9 1127h2.2v6h-2.2ZM909.5 1106h2.4v9h-2.4ZM909.5 1127h2.2v6h-2.2ZM914.1 1106h2.4v9h-2.4ZM914.1 1096h3v8h-3ZM914.1 1127h2.2v6h-2.2ZM918.7 1106h2.4v9h-2.4ZM918.7 1096h3v8h-3ZM923.3 1106h2.4v9h-2.4ZM927.9 1106h2.4v9h-2.4ZM927.9 1096h3v8h-3Z" fill="#000"/>
<path d="M895.7 1096h3v8h-3ZM895.7 1127h2.2v6h-2.2ZM900.3 1096h3v8h-3ZM904.9 1096h3v8h-3ZM909.5 1096h3v8h-3ZM918.7 1127h2.2v6h-2.2ZM923.3 1096h3v8h-3ZM923.3 1127h2.2v6h-2.2ZM927.9 1127h2.2v6h-2.2Z" fill="#00f000"/>
<path d="M1095.7 1099h5.5v17h-5.5ZM1114.7 1095L1118.7 1095L1118.7 1103L1123.7 1103L1123.7 1113L1118.7 1113L1118.7 1126L1114.7 1126Z" fill="#ffffff"/>
<path  d="M-99.5 1103.5L-94.5 1103.5L-94.5 1119.5L-99.5 1119.5ZM331.5 1103.5L336.5 1103.5L336.5 1119.5L331.5 1119.5ZM816.7 1103.5L821.7 1103.5L821.7 1119.5L816.7 1119.5Z" stroke="#ffe000" stroke-width="1.6" fill="none"/>
<path  d="M-78 1104L-72.5 1104L-72.5 1119.5L-78 1119.5ZM-58.3 1104L-52.8 1104L-52.8 1119.5L-58.3 1119.5ZM353 1104L358.5 1104L358.5 1119.5L353 1119.5ZM372.7 1104L378.2 1104L378.2 1119.5L372.7 1119.5ZM838.2 1104L843.7 1104L843.7 1119.5L838.2 1119.5ZM857.9 1104L863.4 1104L863.4 1119.5L857.9 1119.5Z" stroke="#00f000" stroke-width="1.6" fill="none"/>
<path  d="M224.5 1099L230 1099L230 1124L224.5 1124ZM655.5 1099L661 1099L661 1124L655.5 1124ZM1140.7 1099L1146.2 1099L1146.2 1124L1140.7 1124Z" stroke="#00f000" stroke-width="1.8" fill="none"/>
<path  d="M333.7 487L333.7 521M361 487L361 521M389.6 487L389.6 521M418 487L418 521M448.7 487L448.7 521M477 487L477 521M506.7 487L506.7 521M535 487L535 521M564.8 487L564.8 521M594 487L594 521" stroke="#1f9a3a" stroke-width="1.6" fill="none"/>
<path  d="M331.7 489L335.7 489M359 489L363 489M387.6 489L391.6 489M416 489L420 489M446.7 489L450.7 489M475 489L479 489M504.7 489L508.7 489M533 489L537 489M562.8 489L566.8 489M592 489L596 489" stroke="#1f9a3a" stroke-width="1.2" fill="none"/>
<path  d="M333.7 520L333.7 778M361 520L361 778M389.6 520L389.6 778M418 520L418 778M448.7 520L448.7 778M477 520L477 778M506.7 520L506.7 778M535 520L535 778M564.8 520L564.8 778M594 520L594 778M329.7 520.6L602 520.6M329.7 554L602 554M329.7 585L602 585M329.7 608L602 608M329.7 627L602 627M329.7 647L602 647M329.7 665L602 665M329.7 687L602 687M329.7 708L602 708" stroke="#d9461a" stroke-width="2" fill="none"/>
<path  d="M596 526L628 526M596 585L628 585M596 608L628 608M596 627L628 627M596 647L628 647M596 665L628 665M596 687L628 687M596 708L628 708" stroke="#1f9a3a" stroke-width="1.5" fill="none"/>
<path  d="M595.5 588L595.5 776" stroke="#f0a020" stroke-width="1.8" fill="none"/>
<path  d="M349.3 520.1L349.3 552.9M356.6 517.8L356.6 551.2M363.8 518L363.8 549.2M372.6 520.6L372.6 549.5M381.2 516L381.2 549.7M389.1 517.2L389.1 554.7M398.5 518.6L398.5 554.9M405.6 515.8L405.6 550.7M413.2 520.3L413.2 550.9M423.5 519.9L423.5 552.5M433 518.8L433 552.3M440.8 518.3L440.8 554.6M451.8 515.3L451.8 551.2M459.7 519.6L459.7 550.2M467.5 517.3L467.5 554.4M477.8 518.1L477.8 552.9M488 520.5L488 553M498.7 516.3L498.7 553.5M507.6 519.9L507.6 553.7M515.9 516.2L515.9 554.8M524.5 518.6L524.5 554.7M535 515.2L535 551.8M542.6 514.3L542.6 550.6M553.4 511.2L553.4 552.3M561.4 511.2L561.4 550.9M569.9 517L569.9 551.3M578.7 514L578.7 550.2M587.8 517L587.8 550.6M357.7 547.5L357.7 586.6M366.8 547.9L366.8 587.2M377.6 543.7L377.6 589.9M387.1 543.5L387.1 590.6M396.3 544.7L396.3 585.3M406.3 546.3L406.3 589.5M415.8 547.3L415.8 585.3M426.5 548.2L426.5 587.8M434.9 547.2L434.9 589.4M445.8 547.4L445.8 588.9M454 545.7L454 587.4M461.7 548L461.7 586.2M472.3 546L472.3 586.3M482.8 543.7L482.8 588.8M493.2 545.3L493.2 588.7M501 546.2L501 588.4M508.1 543.4L508.1 585.9M516.6 548.1L516.6 590.8M526.8 547.8L526.8 590.3M537.2 545L537.2 589M545.5 546.7L545.5 587.7M555.9 544.3L555.9 588.9M564.1 547.5L564.1 587.3M572.6 546L572.6 586.1" stroke="#d9461a" stroke-width="1.8" fill="none"/>
<path  d="M348 521.1L437 521.1M348 533.4L437 533.4M437 521.3L534 521.3M437 533.1L534 533.1M534 517.8L592 517.8M534 529L592 529M534 540.6L592 540.6M354 551L480 551M354 564.7L480 564.7M354 577.1L480 577.1M480 551L577 551M480 564.8L577 564.8M480 576.7L577 576.7" stroke="#d9461a" stroke-width="1.6" fill="none"/>
<path  d="M350 521.1L361.3 521.1L361.3 533.4L350 533.4ZM383.9 521.1L400.2 521.1L400.2 533.4L383.9 533.4ZM398.5 533.4L415 533.4L415 545.1L398.5 545.1ZM425.9 533.4L437 533.4L437 545.1L425.9 545.1ZM481.1 533.1L490 533.1L490 549L481.1 549ZM534.1 517.8L544.1 517.8L544.1 529L534.1 529ZM544.1 517.8L559.6 517.8L559.6 529L544.1 529ZM547.5 529L562.9 529L562.9 540.6L547.5 540.6ZM562.9 529L577.3 529L577.3 540.6L562.9 540.6ZM549.3 540.6L556.9 540.6L556.9 549L549.3 549ZM556.9 540.6L568.5 540.6L568.5 549L556.9 549ZM473.6 551L480 551L480 564.7L473.6 564.7ZM355.3 564.7L366 564.7L366 577.1L355.3 577.1ZM417.2 564.7L426.1 564.7L426.1 577.1L417.2 577.1ZM361.7 577.1L372.4 577.1L372.4 585L361.7 585ZM395.7 577.1L411 577.1L411 585L395.7 585ZM438.8 577.1L449.9 577.1L449.9 585L438.8 585ZM514.9 551L527 551L527 564.8L514.9 564.8ZM482.7 576.7L491 576.7L491 585L482.7 585ZM556 576.7L564.4 576.7L564.4 585L556 585Z" stroke="#ffffff" stroke-width="3.4" fill="none"/>
<path  d="M361.3 521.1L371.9 521.1L371.9 533.4L361.3 533.4ZM426.6 521.1L433.9 521.1L433.9 533.4L426.6 533.4ZM374.8 533.4L391.4 533.4L391.4 545.1L374.8 545.1ZM510.9 521.3L526.2 521.3L526.2 533.1L510.9 533.1ZM535.9 540.6L549.3 540.6L549.3 549L535.9 549ZM568.5 540.6L585.5 540.6L585.5 549L568.5 549ZM405.6 551L422.2 551L422.2 564.7L405.6 564.7ZM422.2 551L437.1 551L437.1 564.7L422.2 564.7ZM437.1 551L444.9 551L444.9 564.7L437.1 564.7ZM454.2 551L466.5 551L466.5 564.7L454.2 564.7ZM421.9 577.1L438.8 577.1L438.8 585L421.9 585ZM494.5 551L502.8 551L502.8 564.8L494.5 564.8ZM502.8 551L514.9 551L514.9 564.8L502.8 564.8ZM492.4 564.8L505.4 564.8L505.4 576.7L492.4 576.7ZM530.8 564.8L543.6 564.8L543.6 576.7L530.8 576.7ZM491 576.7L502.1 576.7L502.1 585L491 585ZM502.1 576.7L516.2 576.7L516.2 585L502.1 585ZM548.4 576.7L556 576.7L556 585L548.4 585Z" stroke="#ffffff" stroke-width="2.6" fill="none"/>
<path  d="M371.9 521.1L383.9 521.1L383.9 533.4L371.9 533.4ZM400.2 521.1L413.2 521.1L413.2 533.4L400.2 533.4ZM391.4 533.4L398.5 533.4L398.5 545.1L391.4 545.1ZM415 533.4L425.9 533.4L425.9 545.1L415 545.1ZM454.1 533.1L468.9 533.1L468.9 549L454.1 549ZM503.9 533.1L519.3 533.1L519.3 549L503.9 549ZM354.4 551L363.3 551L363.3 564.7L354.4 564.7ZM363.3 551L372.4 551L372.4 564.7L363.3 564.7ZM466.5 551L473.6 551L473.6 564.7L466.5 564.7ZM405.7 564.7L417.2 564.7L417.2 577.1L405.7 577.1ZM452 564.7L466.7 564.7L466.7 577.1L452 577.1ZM372.4 577.1L379.6 577.1L379.6 585L372.4 585ZM411 577.1L421.9 577.1L421.9 585L411 585ZM449.9 577.1L459.9 577.1L459.9 585L449.9 585ZM459.9 577.1L475.7 577.1L475.7 585L459.9 585ZM505.4 564.8L521.3 564.8L521.3 576.7L505.4 576.7ZM521.3 564.8L530.8 564.8L530.8 576.7L521.3 576.7ZM564.4 576.7L573.2 576.7L573.2 585L564.4 585Z" stroke="#ffffff" stroke-width="3" fill="none"/>
<path  d="M462 527.2L478.8 527.2M534.1 534.8L547.5 534.8M586.7 534.8L592 534.8M553.7 570.7L569.4 570.7" stroke="#f0a020" stroke-width="2" fill="none"/>
<path  d="M439 533.1L454.1 533.1L454.1 549L439 549Z" stroke="#ff44ff" stroke-width="3.4" fill="none"/>
<path  d="M490 533.1L503.9 533.1L503.9 549L490 549Z" stroke="#ffe000" stroke-width="3" fill="none"/>
<path  d="M519.3 533.1L534 533.1L534 549L519.3 549Z" stroke="#f0a020" stroke-width="3.4" fill="none"/>
<path  d="M549.4 557.9L561.4 557.9M538.9 580.9L548.4 580.9M343.3 549.7L350.7 549.7L350.7 554.1L343.3 554.1Z" stroke="#ffe000" stroke-width="2" fill="none"/>
<path  d="M344.5 576.8L353.9 576.8L353.9 581.1L344.5 581.1ZM340.2 575.5L349.1 575.5L349.1 582L340.2 582Z" stroke="#b0b0b0" stroke-width="2" fill="none"/>
<path  d="M351.7 576.5L354 576.5L354 583.1L351.7 583.1ZM340.5 544.4L346.5 544.4L346.5 549.7L340.5 549.7ZM353.5 562.7L354 562.7L354 566.8L353.5 566.8ZM351.9 544.1L354 544.1L354 548.1L351.9 548.1ZM345 557.8L350.4 557.8L350.4 565.3L345 565.3Z" stroke="#ffffff" stroke-width="2" fill="none"/>
<path d="M362.8 522.6h3.2v3.2h-3.2ZM413.2 527.1h7.7v4.2h-7.7ZM392.9 534.9h1.9v2h-1.9ZM416.5 534.9h2.6v1.9h-2.6ZM378.9 531.2h2.3v3h-2.3ZM374.5 539h4.1v2.5h-4.1ZM477.9 531h4.2v2h-4.2ZM490.7 533.3h3.2v3h-3.2ZM465.7 547.9h5v1.1h-5ZM504.9 523.5h4.4v2.4h-4.4ZM523.8 528.5h3.9v3.6h-3.9ZM445.1 545h2.8v2.2h-2.8ZM533.5 522h0.5v3.1h-0.5ZM558.1 529h4.5v2h-4.5ZM577.5 543.9h4.8v2.4h-4.8ZM583.5 526h4.5v2.6h-4.5ZM355.9 552.5h2.7v3.1h-2.7ZM382.1 554.3h6.2v4.3h-6.2ZM444.9 556.6h5.4v3.4h-5.4ZM441.5 565.6h10.3v3.6h-10.3ZM354.1 577.8h6.5v5.7h-6.5ZM379.6 577.4h11.3v3h-11.3ZM436.3 584.7h2v0.3h-2ZM432.2 551.8h4.4v3.1h-4.4ZM389.7 560.1h2.9v3.1h-2.9ZM504.3 552.5h3.1v4.1h-3.1ZM561.4 552.9h12.5v4.8h-12.5ZM557.5 578.2h3.4v1.6h-3.4ZM570.1 581.2h4.6v2h-4.6ZM568.3 554.2h2.3v3.2h-2.3ZM495.7 584.2h2.1v0.8h-2.1ZM542.4 550.5h4.2v2.1h-4.2ZM352.7 582.5h1.3v2.3h-1.3Z" fill="#ffe000"/>
<path d="M377.8 523.6h3.3v4h-3.3ZM348.7 533.9h7.3v4.6h-7.3ZM432.7 531.1h4.3v3.5h-4.3ZM413.8 527.3h3.5v3.5h-3.5ZM436.1 543.1h0.9v3.4h-0.9ZM478.8 521.5h7.5v5.2h-7.5ZM514.7 525.5h3v3.3h-3ZM468.9 541.6h5.6v4.7h-5.6ZM483.1 542.2h2.6v3.2h-2.6ZM493.5 539.2h4.3v4.4h-4.3ZM528.8 532.4h4.8v3.1h-4.8ZM455.4 534.3h2.3v3.6h-2.3ZM501.5 531.7h4v2.6h-4ZM559.6 522.3h9v3.9h-9ZM572.6 523.4h5.8v5.2h-5.8ZM580 521.4h10.6v3h-10.6ZM585.5 541.4h6.1v4.5h-6.1ZM543.2 547.4h3.2v1.6h-3.2ZM372.4 552.1h6.9v4.9h-6.9ZM415.6 557.7h4.2v4.4h-4.2ZM468.6 557.8h3v3.6h-3ZM366 567h8.1v3.7h-8.1ZM375 565.5h7.5v4.8h-7.5ZM384.7 565.1h9v5.8h-9ZM426.1 568h7.2v3.2h-7.2ZM404 579.1h4.1v3.7h-4.1ZM427.6 579.2h4.4v2.8h-4.4ZM481.3 558.3h11.7v4.2h-11.7ZM527 551.2h5.9v4.8h-5.9ZM482.7 565.8h6.8v5.8h-6.8ZM484.7 578.9h3.1v3.5h-3.1ZM495 578.9h2.8v4.4h-2.8ZM550.4 578.9h2.5v3.6h-2.5ZM533.7 564.7h4.9v2.6h-4.9ZM562.6 582.2h3.4v2.8h-3.4ZM339.3 551.6h4.9v3.1h-4.9ZM345.5 574.8h4.8v3.6h-4.8ZM350.4 584h3.6v1h-3.6Z" fill="#ffffff"/>
<path d="M390.5 526.5h4.1v3.2h-4.1ZM402.7 524.3h3.9v2.6h-3.9ZM382.5 535.4h4.2v2.9h-4.2ZM568.3 533.7h3.4v4.1h-3.4ZM571.4 542.9h3v3.2h-3ZM475.6 555.8h3.8v3.3h-3.8ZM458.7 567.5h3.6v3.4h-3.6ZM442.5 579.1h4v4.1h-4ZM452.4 579.1h2.9v3h-2.9ZM494.6 567.5h2.8v4.4h-2.8ZM533.7 569.7h2.6v4.1h-2.6Z" fill="#c8c8c8"/>
<path d="M428.1 522.6h2.3v2.4h-2.3ZM359.7 535.2h9.9v4.1h-9.9ZM378.5 528.4h3.5v2.4h-3.5ZM455.6 534.6h4.2v2.8h-4.2ZM457 533.5h2.8v3.6h-2.8ZM577.3 530.6h7.4v4.4h-7.4ZM390.1 551.2h6.5v5.1h-6.5ZM396.5 565.7h3.9v3.2h-3.9ZM407.2 566.2h6.8v4.1h-6.8ZM418.7 566.2h1.9v3.4h-1.9ZM466.7 564.9h6.9v5.4h-6.9ZM373.9 578.6h2.3v1.9h-2.3ZM400.7 567.2h3v2.3h-3ZM475.8 556.1h4.2v2.1h-4.2ZM522.8 566.3h3.2v2.6h-3.2ZM569.4 566.3h4.4v4.9h-4.4ZM503.6 578.2h8.1v2.1h-8.1ZM531.3 579.6h5.7v4.7h-5.7ZM565.9 578.2h4.6v2h-4.6Z" fill="#f0a020"/>
<path d="M408.1 538.3h4.2v4.1h-4.2ZM427.9 535.9h2.7v3.2h-2.7ZM380.6 525.7h3.6v3.6h-3.6ZM377.3 527.2h4.4v3.6h-4.4ZM442.1 539.1h4.2v4.1h-4.2ZM506.5 537h2.6v3.8h-2.6ZM449.5 535.8h4.8v3.9h-4.8ZM457.9 527.4h4.5v3.4h-4.5ZM553.4 531.9h3v3.4h-3ZM541.4 542.9h3.7v2.8h-3.7ZM551.3 542.8h3.9v3.1h-3.9ZM562.5 543h2.5v3.4h-2.5ZM366.1 554.2h3v4h-3ZM428.9 558.4h3.9v3.8h-3.9ZM457.5 558.4h2.9v3h-2.9ZM358.4 569.7h2.9v4.1h-2.9ZM365.7 579.1h4.3v3.1h-4.3ZM413.1 579.1h3.2v4.5h-3.2ZM463.8 579.1h3.6v3.8h-3.6ZM369 555.8h4.8v2.7h-4.8ZM511.6 569.3h3.2v4.2h-3.2ZM552 565.3h5v2.5h-5ZM505.3 557.5h4.8v3.5h-4.8ZM341.8 562.3h5.3v2.8h-5.3Z" fill="#b0b0b0"/>
<path d="M354.3 526.8h2.4v2.5h-2.4ZM520.8 534.6h4.3v5.4h-4.3ZM458.3 547.7h4.7v1.3h-4.7ZM501.8 527.3h5v2.8h-5ZM454.6 542.2h4.5v3.4h-4.5ZM438.1 548.8h4.8v0.2h-4.8ZM478.9 534.9h4.9v2.6h-4.9ZM362 552.6h4v2.3h-4ZM421.3 572.5h4.1v2.8h-4.1ZM405 582.9h4.7v2.1h-4.7ZM355.9 568.9h2.3v3.2h-2.3ZM375.6 551.4h3.5v3.6h-3.5ZM469 560.3h2.3v3.4h-2.3ZM549.4 549.2h4.2v2.9h-4.2ZM547.7 579.9h4.9v2.5h-4.9ZM565.8 577.4h3.9v2.2h-3.9Z" fill="#18d8f0"/>
<path d="M435 534.5h2v2.2h-2ZM531.3 523.9h2.7v3.8h-2.7ZM462.4 526.1h3.9v3.1h-3.9ZM438.4 538.5h3.3v2.1h-3.3ZM534.7 540.7h3.1v2.8h-3.1ZM463.1 565.2h4.3v3.3h-4.3ZM371.8 556.3h2.1v3.5h-2.1ZM542.5 553.4h4.1v2.5h-4.1Z" fill="#ff44ff"/>
<path d="M498.7 532.3h4.9v3.7h-4.9ZM591.9 535.9h0.1v3.5h-0.1ZM383.1 565.1h2.1v2.6h-2.1ZM354.8 571.9h2.7v2.7h-2.7ZM469.2 578.3h3.2v2.7h-3.2ZM399 564h3.9v2.8h-3.9ZM457.4 563.6h3.4v2.3h-3.4ZM511.7 580.7h3.8v2.8h-3.8Z" fill="#00f000"/>
<path d="M338 553h18v5h-18Z" fill="#d09060"/>
<path d="M363 587h20v18h-20ZM457 587h20v18h-20Z" fill="#6b8e23"/>
<path d="M391.7 586h58v19h-58ZM480 586h86v19h-86Z" fill="#00f000"/>
<path d="M394 588h3.6v12h-3.6ZM399.4 588h3.6v12h-3.6ZM404.8 588h3.6v12h-3.6ZM412.4 588h3.6v12h-3.6ZM417.8 588h3.6v12h-3.6ZM423.2 588h3.6v12h-3.6ZM430.8 588h3.6v12h-3.6ZM436.2 588h3.6v12h-3.6ZM441.6 588h3.6v12h-3.6ZM482 588h3.6v12h-3.6ZM487.4 588h3.6v12h-3.6ZM492.8 588h3.6v12h-3.6ZM500.4 588h3.6v12h-3.6ZM505.8 588h3.6v12h-3.6ZM511.2 588h3.6v12h-3.6ZM518.8 588h3.6v12h-3.6ZM524.2 588h3.6v12h-3.6ZM529.6 588h3.6v12h-3.6ZM537.2 588h3.6v12h-3.6ZM542.6 588h3.6v12h-3.6ZM548 588h3.6v12h-3.6ZM555.6 588h3.6v12h-3.6Z" fill="#ffffff"/>
<path d="M398 589.8h1.4v1.6h-1.4ZM398 597h1.4v1.6h-1.4ZM403.4 589.8h1.4v1.6h-1.4ZM403.4 597h1.4v1.6h-1.4ZM408.8 589.8h1.4v1.6h-1.4ZM408.8 597h1.4v1.6h-1.4ZM416.4 589.8h1.4v1.6h-1.4ZM416.4 597h1.4v1.6h-1.4ZM421.8 589.8h1.4v1.6h-1.4ZM421.8 597h1.4v1.6h-1.4ZM427.2 589.8h1.4v1.6h-1.4ZM427.2 597h1.4v1.6h-1.4ZM434.8 589.8h1.4v1.6h-1.4ZM434.8 597h1.4v1.6h-1.4ZM440.2 589.8h1.4v1.6h-1.4ZM440.2 597h1.4v1.6h-1.4ZM445.6 589.8h1.4v1.6h-1.4ZM445.6 597h1.4v1.6h-1.4ZM486 589.8h1.4v1.6h-1.4ZM486 597h1.4v1.6h-1.4ZM491.4 589.8h1.4v1.6h-1.4ZM491.4 597h1.4v1.6h-1.4ZM496.8 589.8h1.4v1.6h-1.4ZM496.8 597h1.4v1.6h-1.4ZM504.4 589.8h1.4v1.6h-1.4ZM504.4 597h1.4v1.6h-1.4ZM509.8 589.8h1.4v1.6h-1.4ZM509.8 597h1.4v1.6h-1.4ZM515.2 589.8h1.4v1.6h-1.4ZM515.2 597h1.4v1.6h-1.4ZM522.8 589.8h1.4v1.6h-1.4ZM522.8 597h1.4v1.6h-1.4ZM528.2 589.8h1.4v1.6h-1.4ZM528.2 597h1.4v1.6h-1.4ZM533.6 589.8h1.4v1.6h-1.4ZM533.6 597h1.4v1.6h-1.4ZM541.2 589.8h1.4v1.6h-1.4ZM541.2 597h1.4v1.6h-1.4ZM546.6 589.8h1.4v1.6h-1.4ZM546.6 597h1.4v1.6h-1.4ZM552 589.8h1.4v1.6h-1.4ZM552 597h1.4v1.6h-1.4ZM559.6 589.8h1.4v1.6h-1.4ZM559.6 597h1.4v1.6h-1.4Z" fill="#000"/>
<path d="M363 625h27v20h-27ZM421 626h145v39h-145Z" fill="#6b8e23"/>
<path d="M424 628h2.6v15.5h-2.6ZM428.2 628h2.6v15.5h-2.6ZM432.4 628h2.6v15.5h-2.6ZM438.8 628h2.6v15.5h-2.6ZM443 628h2.6v15.5h-2.6ZM447.2 628h2.6v15.5h-2.6ZM453.6 628h2.6v15.5h-2.6ZM457.8 628h2.6v15.5h-2.6ZM462 628h2.6v15.5h-2.6ZM468.4 628h2.6v15.5h-2.6ZM472.6 628h2.6v15.5h-2.6ZM476.8 628h2.6v15.5h-2.6ZM483.2 628h2.6v15.5h-2.6ZM487.4 628h2.6v15.5h-2.6ZM491.6 628h2.6v15.5h-2.6ZM498 628h2.6v15.5h-2.6ZM502.2 628h2.6v15.5h-2.6ZM506.4 628h2.6v15.5h-2.6ZM512.8 628h2.6v15.5h-2.6ZM517 628h2.6v15.5h-2.6ZM521.2 628h2.6v15.5h-2.6ZM527.6 628h2.6v15.5h-2.6ZM531.8 628h2.6v15.5h-2.6ZM536 628h2.6v15.5h-2.6ZM542.4 628h2.6v15.5h-2.6ZM546.6 628h2.6v15.5h-2.6ZM550.8 628h2.6v15.5h-2.6ZM557.2 628h2.6v15.5h-2.6ZM561.4 628h2.6v15.5h-2.6ZM424 647.5h2.6v15.5h-2.6ZM428.2 647.5h2.6v15.5h-2.6ZM432.4 647.5h2.6v15.5h-2.6ZM438.8 647.5h2.6v15.5h-2.6ZM443 647.5h2.6v15.5h-2.6ZM447.2 647.5h2.6v15.5h-2.6ZM453.6 647.5h2.6v15.5h-2.6ZM457.8 647.5h2.6v15.5h-2.6ZM462 647.5h2.6v15.5h-2.6ZM468.4 647.5h2.6v15.5h-2.6ZM472.6 647.5h2.6v15.5h-2.6ZM476.8 647.5h2.6v15.5h-2.6ZM483.2 647.5h2.6v15.5h-2.6ZM487.4 647.5h2.6v15.5h-2.6ZM491.6 647.5h2.6v15.5h-2.6ZM498 647.5h2.6v15.5h-2.6ZM502.2 647.5h2.6v15.5h-2.6ZM506.4 647.5h2.6v15.5h-2.6ZM512.8 647.5h2.6v15.5h-2.6ZM517 647.5h2.6v15.5h-2.6ZM521.2 647.5h2.6v15.5h-2.6ZM527.6 647.5h2.6v15.5h-2.6ZM531.8 647.5h2.6v15.5h-2.6ZM536 647.5h2.6v15.5h-2.6ZM542.4 647.5h2.6v15.5h-2.6ZM546.6 647.5h2.6v15.5h-2.6ZM550.8 647.5h2.6v15.5h-2.6ZM557.2 647.5h2.6v15.5h-2.6ZM561.4 647.5h2.6v15.5h-2.6Z" fill="#ffffff"/>
<path d="M427 630.3h1.4v1.6h-1.4ZM427 639.6h1.4v1.6h-1.4ZM431.2 630.3h1.4v1.6h-1.4ZM431.2 639.6h1.4v1.6h-1.4ZM435.4 630.3h1.4v1.6h-1.4ZM435.4 639.6h1.4v1.6h-1.4ZM441.8 630.3h1.4v1.6h-1.4ZM441.8 639.6h1.4v1.6h-1.4ZM446 630.3h1.4v1.6h-1.4ZM446 639.6h1.4v1.6h-1.4ZM450.2 630.3h1.4v1.6h-1.4ZM450.2 639.6h1.4v1.6h-1.4ZM456.6 630.3h1.4v1.6h-1.4ZM456.6 639.6h1.4v1.6h-1.4ZM460.8 630.3h1.4v1.6h-1.4ZM460.8 639.6h1.4v1.6h-1.4ZM465 630.3h1.4v1.6h-1.4ZM465 639.6h1.4v1.6h-1.4ZM471.4 630.3h1.4v1.6h-1.4ZM471.4 639.6h1.4v1.6h-1.4ZM475.6 630.3h1.4v1.6h-1.4ZM475.6 639.6h1.4v1.6h-1.4ZM479.8 630.3h1.4v1.6h-1.4ZM479.8 639.6h1.4v1.6h-1.4ZM486.2 630.3h1.4v1.6h-1.4ZM486.2 639.6h1.4v1.6h-1.4ZM490.4 630.3h1.4v1.6h-1.4ZM490.4 639.6h1.4v1.6h-1.4ZM494.6 630.3h1.4v1.6h-1.4ZM494.6 639.6h1.4v1.6h-1.4ZM501 630.3h1.4v1.6h-1.4ZM501 639.6h1.4v1.6h-1.4ZM505.2 630.3h1.4v1.6h-1.4ZM505.2 639.6h1.4v1.6h-1.4ZM509.4 630.3h1.4v1.6h-1.4ZM509.4 639.6h1.4v1.6h-1.4ZM515.8 630.3h1.4v1.6h-1.4ZM515.8 639.6h1.4v1.6h-1.4ZM520 630.3h1.4v1.6h-1.4ZM520 639.6h1.4v1.6h-1.4ZM524.2 630.3h1.4v1.6h-1.4ZM524.2 639.6h1.4v1.6h-1.4ZM530.6 630.3h1.4v1.6h-1.4ZM530.6 639.6h1.4v1.6h-1.4ZM534.8 630.3h1.4v1.6h-1.4ZM534.8 639.6h1.4v1.6h-1.4ZM539 630.3h1.4v1.6h-1.4ZM539 639.6h1.4v1.6h-1.4ZM545.4 630.3h1.4v1.6h-1.4ZM545.4 639.6h1.4v1.6h-1.4ZM549.6 630.3h1.4v1.6h-1.4ZM549.6 639.6h1.4v1.6h-1.4ZM553.8 630.3h1.4v1.6h-1.4ZM553.8 639.6h1.4v1.6h-1.4ZM560.2 630.3h1.4v1.6h-1.4ZM560.2 639.6h1.4v1.6h-1.4ZM564.4 630.3h1.4v1.6h-1.4ZM564.4 639.6h1.4v1.6h-1.4ZM427 649.8h1.4v1.6h-1.4ZM427 659.1h1.4v1.6h-1.4ZM431.2 649.8h1.4v1.6h-1.4ZM431.2 659.1h1.4v1.6h-1.4ZM435.4 649.8h1.4v1.6h-1.4ZM435.4 659.1h1.4v1.6h-1.4ZM441.8 649.8h1.4v1.6h-1.4ZM441.8 659.1h1.4v1.6h-1.4ZM446 649.8h1.4v1.6h-1.4ZM446 659.1h1.4v1.6h-1.4ZM450.2 649.8h1.4v1.6h-1.4ZM450.2 659.1h1.4v1.6h-1.4ZM456.6 649.8h1.4v1.6h-1.4ZM456.6 659.1h1.4v1.6h-1.4ZM460.8 649.8h1.4v1.6h-1.4ZM460.8 659.1h1.4v1.6h-1.4ZM465 649.8h1.4v1.6h-1.4ZM465 659.1h1.4v1.6h-1.4ZM471.4 649.8h1.4v1.6h-1.4ZM471.4 659.1h1.4v1.6h-1.4ZM475.6 649.8h1.4v1.6h-1.4ZM475.6 659.1h1.4v1.6h-1.4ZM479.8 649.8h1.4v1.6h-1.4ZM479.8 659.1h1.4v1.6h-1.4ZM486.2 649.8h1.4v1.6h-1.4ZM486.2 659.1h1.4v1.6h-1.4ZM490.4 649.8h1.4v1.6h-1.4ZM490.4 659.1h1.4v1.6h-1.4ZM494.6 649.8h1.4v1.6h-1.4ZM494.6 659.1h1.4v1.6h-1.4ZM501 649.8h1.4v1.6h-1.4ZM501 659.1h1.4v1.6h-1.4ZM505.2 649.8h1.4v1.6h-1.4ZM505.2 659.1h1.4v1.6h-1.4ZM509.4 649.8h1.4v1.6h-1.4ZM509.4 659.1h1.4v1.6h-1.4ZM515.8 649.8h1.4v1.6h-1.4ZM515.8 659.1h1.4v1.6h-1.4ZM520 649.8h1.4v1.6h-1.4ZM520 659.1h1.4v1.6h-1.4ZM524.2 649.8h1.4v1.6h-1.4ZM524.2 659.1h1.4v1.6h-1.4ZM530.6 649.8h1.4v1.6h-1.4ZM530.6 659.1h1.4v1.6h-1.4ZM534.8 649.8h1.4v1.6h-1.4ZM534.8 659.1h1.4v1.6h-1.4ZM539 649.8h1.4v1.6h-1.4ZM539 659.1h1.4v1.6h-1.4ZM545.4 649.8h1.4v1.6h-1.4ZM545.4 659.1h1.4v1.6h-1.4ZM549.6 649.8h1.4v1.6h-1.4ZM549.6 659.1h1.4v1.6h-1.4ZM553.8 649.8h1.4v1.6h-1.4ZM553.8 659.1h1.4v1.6h-1.4ZM560.2 649.8h1.4v1.6h-1.4ZM560.2 659.1h1.4v1.6h-1.4ZM564.4 649.8h1.4v1.6h-1.4ZM564.4 659.1h1.4v1.6h-1.4Z" fill="#000"/>
<path d="M361 687h187v21h-187Z" fill="#6b8e23"/>
<path d="M391.7 687h145v21h-145Z" fill="#00f000"/>
<path d="M394 689h3.6v13h-3.6ZM399.4 689h3.6v13h-3.6ZM404.8 689h3.6v13h-3.6ZM412.4 689h3.6v13h-3.6ZM417.8 689h3.6v13h-3.6ZM423.2 689h3.6v13h-3.6ZM430.8 689h3.6v13h-3.6ZM436.2 689h3.6v13h-3.6ZM441.6 689h3.6v13h-3.6ZM449.2 689h3.6v13h-3.6ZM454.6 689h3.6v13h-3.6ZM460 689h3.6v13h-3.6ZM467.6 689h3.6v13h-3.6ZM473 689h3.6v13h-3.6ZM478.4 689h3.6v13h-3.6ZM486 689h3.6v13h-3.6ZM491.4 689h3.6v13h-3.6ZM496.8 689h3.6v13h-3.6ZM504.4 689h3.6v13h-3.6ZM509.8 689h3.6v13h-3.6ZM515.2 689h3.6v13h-3.6ZM522.8 689h3.6v13h-3.6ZM528.2 689h3.6v13h-3.6Z" fill="#ffffff"/>
<path d="M398 691h1.4v1.6h-1.4ZM398 698.8h1.4v1.6h-1.4ZM403.4 691h1.4v1.6h-1.4ZM403.4 698.8h1.4v1.6h-1.4ZM408.8 691h1.4v1.6h-1.4ZM408.8 698.8h1.4v1.6h-1.4ZM416.4 691h1.4v1.6h-1.4ZM416.4 698.8h1.4v1.6h-1.4ZM421.8 691h1.4v1.6h-1.4ZM421.8 698.8h1.4v1.6h-1.4ZM427.2 691h1.4v1.6h-1.4ZM427.2 698.8h1.4v1.6h-1.4ZM434.8 691h1.4v1.6h-1.4ZM434.8 698.8h1.4v1.6h-1.4ZM440.2 691h1.4v1.6h-1.4ZM440.2 698.8h1.4v1.6h-1.4ZM445.6 691h1.4v1.6h-1.4ZM445.6 698.8h1.4v1.6h-1.4ZM453.2 691h1.4v1.6h-1.4ZM453.2 698.8h1.4v1.6h-1.4ZM458.6 691h1.4v1.6h-1.4ZM458.6 698.8h1.4v1.6h-1.4ZM464 691h1.4v1.6h-1.4ZM464 698.8h1.4v1.6h-1.4ZM471.6 691h1.4v1.6h-1.4ZM471.6 698.8h1.4v1.6h-1.4ZM477 691h1.4v1.6h-1.4ZM477 698.8h1.4v1.6h-1.4ZM482.4 691h1.4v1.6h-1.4ZM482.4 698.8h1.4v1.6h-1.4ZM490 691h1.4v1.6h-1.4ZM490 698.8h1.4v1.6h-1.4ZM495.4 691h1.4v1.6h-1.4ZM495.4 698.8h1.4v1.6h-1.4ZM500.8 691h1.4v1.6h-1.4ZM500.8 698.8h1.4v1.6h-1.4ZM508.4 691h1.4v1.6h-1.4ZM508.4 698.8h1.4v1.6h-1.4ZM513.8 691h1.4v1.6h-1.4ZM513.8 698.8h1.4v1.6h-1.4ZM519.2 691h1.4v1.6h-1.4ZM519.2 698.8h1.4v1.6h-1.4ZM526.8 691h1.4v1.6h-1.4ZM526.8 698.8h1.4v1.6h-1.4ZM532.2 691h1.4v1.6h-1.4ZM532.2 698.8h1.4v1.6h-1.4Z" fill="#000"/>
<path  d="M577 548L591 548L591 588L577 588ZM584 548L584 588M548.6 696.3L557.4 696.3L557.4 703.3L548.6 703.3ZM543.8 692.9L552.7 692.9L552.7 699.8L543.8 699.8ZM568.6 706.8L577 706.8L577 713.4L568.6 713.4ZM562.7 715.7L570.8 715.7M462.5 742L479.4 742M373.6 766.2L384.6 766.2M430.8 766.2L446.7 766.2M536.2 766.2L546.7 766.2" stroke="#ffe000" stroke-width="2" fill="none"/>
<path  d="M350 560L375 560L375 585L350 585ZM382 560L404 560L404 585L382 585ZM410 560L433 560L433 585L410 585ZM462 556L490 556L490 585L462 585ZM530 556L570 556L570 585L530 585Z" stroke="#ffffff" stroke-width="2.2" fill="none"/>
<path  d="M340 525L345 525L345 532L340 532ZM399 618L405.5 626L412 618M399 674L405.5 666L412 674" stroke="#ff44ff" stroke-width="1.5" fill="none"/>
<path  d="M330.5 617.7L572 617.7L579.5 625L579.5 780M330 682L345 676L572 674.7L579.5 668M405.5 617.7L405.5 674.7" stroke="#ff44ff" stroke-width="1.8" fill="none"/>
<path  d="M370 648L374 652L377 646M374 652L372 657M547.6 687.6L555.1 687.6L555.1 693.1L547.6 693.1ZM552.1 684.3L560.8 684.3L560.8 688.7L552.1 688.7ZM554.8 710.8L562.3 710.8L562.3 717.3L554.8 717.3ZM544.8 710.2L553 710.2L553 716L544.8 716Z" stroke="#ffffff" stroke-width="2" fill="none"/>
<path  d="M546.3 695.3L554.2 695.3L554.2 699.8L546.3 699.8ZM559 704.1L566.6 704.1L566.6 709.8L559 709.8ZM557.3 689L562.9 689L562.9 696.3L557.3 696.3Z" stroke="#b0b0b0" stroke-width="2" fill="none"/>
<path  d="M341.9 705.4L341.9 779.8M351.6 705.8L351.6 781.6M362 707.7L362 781M372.6 703.3L372.6 776.8M382.9 704.2L382.9 776.1M390 702.3L390 779.9M398 707.4L398 776.9M405.9 703.3L405.9 778.1M413.5 702.6L413.5 780.8M421.2 702.7L421.2 779.7M431.3 704L431.3 781.4M441.5 703L441.5 777.2M451.2 704.8L451.2 780.5M460 702.7L460 779.3M468 706.6L468 776.8M477 707.6L477 778.8M484.6 705.1L484.6 779M493.8 702.8L493.8 776M504.1 705.2L504.1 779.4M513.8 703L513.8 778.2M522.5 702.2L522.5 776.5M532 704.2L532 776.2M541.4 703.9L541.4 781.6M549.8 702.1L549.8 779.1M558.7 702.6L558.7 776.2M568.6 704.2L568.6 778" stroke="#d9461a" stroke-width="1.8" fill="none"/>
<path  d="M340 708.7L577 708.7M340 722.6L577 722.6M340 736.3L577 736.3M340 747.6L577 747.6M340 760.4L577 760.4" stroke="#d9461a" stroke-width="1.6" fill="none"/>
<path  d="M341.6 708.7L356.3 708.7L356.3 722.6L341.6 722.6ZM356.3 708.7L367.3 708.7L367.3 722.6L356.3 722.6ZM367.3 708.7L377.8 708.7L377.8 722.6L367.3 722.6ZM377.8 708.7L388.1 708.7L388.1 722.6L377.8 722.6ZM388.1 708.7L400.5 708.7L400.5 722.6L388.1 722.6ZM415.4 708.7L424.5 708.7L424.5 722.6L415.4 722.6ZM467 708.7L480.6 708.7L480.6 722.6L467 722.6ZM519.5 708.7L529.4 708.7L529.4 722.6L519.5 722.6ZM537 708.7L551.3 708.7L551.3 722.6L537 722.6ZM570.8 708.7L577 708.7L577 722.6L570.8 722.6ZM340.8 722.6L355.4 722.6L355.4 736.3L340.8 736.3ZM355.4 722.6L370.7 722.6L370.7 736.3L355.4 736.3ZM384.5 722.6L394.4 722.6L394.4 736.3L384.5 736.3ZM420.2 722.6L433.2 722.6L433.2 736.3L420.2 736.3ZM448.1 722.6L464 722.6L464 736.3L448.1 736.3ZM464 722.6L474.6 722.6L474.6 736.3L464 736.3ZM474.6 722.6L490.2 722.6L490.2 736.3L474.6 736.3ZM568.4 722.6L575.8 722.6L575.8 736.3L568.4 736.3ZM422.3 736.3L438 736.3L438 747.6L422.3 747.6ZM438 736.3L449.9 736.3L449.9 747.6L438 747.6ZM507.9 736.3L523.8 736.3L523.8 747.6L507.9 747.6ZM383.4 747.6L395.3 747.6L395.3 760.4L383.4 760.4ZM414.7 747.6L425.1 747.6L425.1 760.4L414.7 760.4ZM449.8 747.6L459 747.6L459 760.4L449.8 760.4ZM525.7 747.6L542.4 747.6L542.4 760.4L525.7 760.4ZM552.3 747.6L565.9 747.6L565.9 760.4L552.3 760.4ZM395.8 760.4L409.7 760.4L409.7 772L395.8 772ZM446.7 760.4L454.2 760.4L454.2 772L446.7 772ZM465 760.4L477.3 760.4L477.3 772L465 772ZM510.7 760.4L522.9 760.4L522.9 772L510.7 772ZM560.6 760.4L574.3 760.4L574.3 772L560.6 772Z" stroke="#ffffff" stroke-width="3" fill="none"/>
<path  d="M424.5 708.7L435.8 708.7L435.8 722.6L424.5 722.6ZM459.9 708.7L467 708.7L467 722.6L459.9 722.6ZM503.2 708.7L519.5 708.7L519.5 722.6L503.2 722.6ZM409.7 722.6L420.2 722.6L420.2 736.3L409.7 736.3ZM355 736.3L367.9 736.3L367.9 747.6L355 747.6ZM487.4 736.3L499.5 736.3L499.5 747.6L487.4 747.6ZM523.8 736.3L532.8 736.3L532.8 747.6L523.8 747.6ZM354.6 747.6L363.3 747.6L363.3 760.4L354.6 760.4ZM363.3 747.6L370.6 747.6L370.6 760.4L363.3 760.4ZM370.6 747.6L383.4 747.6L383.4 760.4L370.6 760.4ZM395.3 747.6L403.8 747.6L403.8 760.4L395.3 760.4ZM440.3 747.6L449.8 747.6L449.8 760.4L440.3 760.4ZM475.4 747.6L488.6 747.6L488.6 760.4L475.4 760.4ZM488.6 747.6L496.8 747.6L496.8 760.4L488.6 760.4ZM504.7 747.6L514.1 747.6L514.1 760.4L504.7 760.4ZM514.1 747.6L525.7 747.6L525.7 760.4L514.1 760.4ZM358.8 760.4L373.6 760.4L373.6 772L358.8 772ZM409.7 760.4L420.5 760.4L420.5 772L409.7 772ZM454.2 760.4L465 760.4L465 772L454.2 772ZM477.3 760.4L489.2 760.4L489.2 772L477.3 772ZM489.2 760.4L502 760.4L502 772L489.2 772ZM522.9 760.4L536.2 760.4L536.2 772L522.9 772Z" stroke="#ffffff" stroke-width="3.4" fill="none"/>
<path  d="M435.8 708.7L444.6 708.7L444.6 722.6L435.8 722.6ZM480.6 708.7L487.6 708.7L487.6 722.6L480.6 722.6ZM487.6 708.7L503.2 708.7L503.2 722.6L487.6 722.6ZM551.3 708.7L562.7 708.7L562.7 722.6L551.3 722.6ZM370.7 722.6L384.5 722.6L384.5 736.3L370.7 736.3ZM433.2 722.6L448.1 722.6L448.1 736.3L433.2 736.3ZM490.2 722.6L500.6 722.6L500.6 736.3L490.2 736.3ZM510.3 722.6L519.8 722.6L519.8 736.3L510.3 736.3ZM519.8 722.6L530.6 722.6L530.6 736.3L519.8 736.3ZM530.6 722.6L546.2 722.6L546.2 736.3L530.6 736.3ZM379.3 736.3L394.3 736.3L394.3 747.6L379.3 747.6ZM394.3 736.3L410.5 736.3L410.5 747.6L394.3 747.6ZM410.5 736.3L422.3 736.3L422.3 747.6L410.5 747.6ZM479.4 736.3L487.4 736.3L487.4 747.6L479.4 747.6ZM499.5 736.3L507.9 736.3L507.9 747.6L499.5 747.6ZM548.2 736.3L556.6 736.3L556.6 747.6L548.2 747.6ZM340.3 747.6L354.6 747.6L354.6 760.4L340.3 760.4ZM459 747.6L475.4 747.6L475.4 760.4L459 760.4ZM496.8 747.6L504.7 747.6L504.7 760.4L496.8 760.4ZM565.9 747.6L577 747.6L577 760.4L565.9 760.4ZM502 760.4L510.7 760.4L510.7 772L502 772ZM546.7 760.4L560.6 760.4L560.6 772L546.7 772Z" stroke="#ffffff" stroke-width="2.6" fill="none"/>
<path  d="M546.2 729.4L559.6 729.4M340.4 742L355 742M403.8 754L414.7 754M342.6 766.2L358.8 766.2" stroke="#f0a020" stroke-width="2" fill="none"/>
<path d="M552.9 690.4h5.4v4h-5.4ZM548.4 718.4h4.6v1.6h-4.6ZM419.4 767.3h3.2v2.1h-3.2ZM369.2 764.2h3.7v2.8h-3.7ZM426.9 762.4h4.7v2.1h-4.7ZM415.5 760.8h4.2v2.2h-4.2ZM564.3 736.8h4.1v3.5h-4.1ZM462.1 738.3h4.1v2.3h-4.1ZM416.9 739.9h2.9v3.1h-2.9ZM455.7 761.3h2v3.8h-2Z" fill="#00f000"/>
<path d="M572.7 686.5h3.2v4.1h-3.2ZM547.3 704.1h2.8v3.2h-2.8ZM545.2 702.6h5v4.7h-5ZM561.2 709h2.9v4.2h-2.9ZM551.6 703.6h3.7v4.3h-3.7ZM565 716.9h4.6v3.1h-4.6ZM558.1 718.9h4.2v1.1h-4.2ZM555.6 706.7h3.1v2.7h-3.1ZM571.5 687.8h3v3.3h-3ZM540.1 707.8h3v2.9h-3ZM400.5 714.1h11.5v4.9h-11.5ZM444.6 712.5h12.5v4.2h-12.5ZM489.8 714.9h3v4h-3ZM492.7 729.6h3.6v3.7h-3.6ZM500.6 726.3h9.3v5.3h-9.3ZM559.6 725.8h4.8v5.2h-4.8ZM358.6 739.2h2.7v3.5h-2.7ZM367.9 742.1h10.7v4.4h-10.7ZM443.9 738.5h4.3v3.8h-4.3ZM490.9 738.4h3.3v3.1h-3.3ZM556.6 742.4h4.7v4.1h-4.7ZM567.1 738.3h8.2v4.1h-8.2ZM345.7 749.7h4.4v2.9h-4.4ZM385.9 753.8h3.6v3h-3.6ZM478.6 749.8h2.7v3.2h-2.7ZM536 751.2h3.2v3h-3.2ZM558.6 752.1h4.5v3.9h-4.5ZM474.4 767.2h3.5v2.3h-3.5ZM412 749h4.9v2.1h-4.9ZM537.9 716.7h3.4v3.6h-3.4ZM567.1 722.1h3.5v2.5h-3.5ZM546.8 716.3h2.3v3.7h-2.3ZM536.7 750.7h3.5v3.4h-3.5ZM565.7 764.1h2.8v3.1h-2.8ZM569.8 751.4h2.8v3.9h-2.8ZM372.4 756.1h2.7v2.5h-2.7ZM350.8 739.9h2.3v3.4h-2.3ZM415.9 733.1h4.8v3.7h-4.8Z" fill="#ffffff"/>
<path d="M545.7 682.9h3.3v3.6h-3.3ZM547.8 706.1h5.1v2.4h-5.1ZM553.2 678.5h3.6v2h-3.6ZM416.9 710.2h2.4v4h-2.4ZM504.7 710.2h9.6v4.1h-9.6ZM529.4 714.8h5.9v4.2h-5.9ZM538.5 710.2h5.2v4.7h-5.2ZM421.7 724.1h7.7v3.7h-7.7ZM521.3 724.1h5.7v3.4h-5.7ZM532.1 724.1h4.4v3h-4.4ZM395.8 737.8h7v2.4h-7ZM501 737.8h2.1v1.8h-2.1ZM364.8 749.1h1.9v4h-1.9ZM425.1 748h10.8v5.9h-10.8ZM567.4 749.1h4.9v4h-4.9ZM455.7 761.9h4.2v1.7h-4.2ZM450.8 737.3h4v3.4h-4ZM403.2 714.8h3v2.9h-3ZM479.1 719.8h4.7v3.6h-4.7ZM514.4 760h4v3.1h-4ZM413.7 734.5h4.1v3.6h-4.1ZM394.9 720.8h2.2v3.8h-2.2ZM379.8 731.6h2.6v2.6h-2.6ZM572.3 746.3h3.9v3.9h-3.9ZM400.1 711.9h3.7v3.3h-3.7ZM534.3 756h4.8v3h-4.8Z" fill="#ffe000"/>
<path d="M563.3 687h3.8v3.9h-3.8ZM574.8 698.8h2.2v3.6h-2.2ZM574.8 699.2h2.2v3.2h-2.2ZM345.3 711h3.1v3.2h-3.1ZM382 711.2h4.5v3.3h-4.5ZM390.3 715.5h3.5v4h-3.5ZM438.3 716.2h2.6v3.6h-2.6ZM469.5 713.5h4.3v3.8h-4.3ZM523.3 712.2h4.4v3.9h-4.4ZM349.2 728.6h4.2v3.2h-4.2ZM477.4 728.2h4.1v2.8h-4.1ZM570.5 724.7h4.3v3h-4.3ZM385.6 739.5h4v4.1h-4ZM415.3 738.9h3.4v4.3h-3.4ZM550.5 739.5h2.8v3.2h-2.8ZM374.3 750.1h2.9v3h-2.9ZM397.8 749.7h3.8v3.9h-3.8ZM442.4 750.5h3.1v2.9h-3.1ZM466.4 750.9h3.9v3h-3.9ZM519 749.8h3.2v2.9h-3.2ZM366.8 762.4h4v3.7h-4ZM400.1 764.4h3.3v3.1h-3.3ZM448.7 763.5h3.7v3.4h-3.7ZM469.8 765.7h2.8v2.9h-2.8ZM529.6 763.9h2.6v3.6h-2.6ZM552.8 762.4h3.1v4.2h-3.1ZM477.2 717.8h3.1v2.3h-3.1ZM444.2 750.2h2.7v2.3h-2.7ZM500.5 753.9h3.2v2.8h-3.2ZM508.7 709.5h2.3v2.3h-2.3ZM396.9 733h4.2v2.8h-4.2ZM530.8 759.6h2.2v2.6h-2.2ZM383.1 715.8h4.1v2.1h-4.1ZM349.5 719h4.3v2.3h-4.3ZM478.7 755.3h4v2.1h-4ZM504.6 734.8h2.8v2.2h-2.8ZM507.7 748h3v3.6h-3ZM408.6 732.5h2.1v3.8h-2.1Z" fill="#b0b0b0"/>
<path d="M429.3 711.5h3.1v3.9h-3.1ZM386.8 729.8h4v4.1h-4ZM412.6 729.1h3.9v4.5h-3.9ZM437.7 724.9h3.3v3.5h-3.3ZM451.7 725.8h2.7v4.1h-2.7ZM424.5 740.2h3.1v4.1h-3.1ZM481.5 739.3h4.5v2.5h-4.5ZM511 740.5h3.8v2.9h-3.8ZM526.7 741.4h3.5v3.2h-3.5ZM498.9 753.8h4.3v3.7h-4.3ZM507.3 752.9h2.9v3.3h-2.9ZM412.1 764.4h3.7v2.7h-3.7Z" fill="#c8c8c8"/>
<path d="M356.9 724.1h9.7v2.8h-9.7ZM394.4 730.1h11.4v3.8h-11.4ZM449.9 737.1h10.7v5.9h-10.7ZM532.8 739.4h6.3v5.7h-6.3ZM416.2 749.1h5.3v3.3h-5.3ZM542.4 748.9h4.4v5.6h-4.4ZM384.6 766.1h8.5v4.1h-8.5ZM420.5 765.9h10v3.6h-10ZM512.2 761.9h6.5v3.8h-6.5ZM387.1 748.9h2.5v3.5h-2.5ZM365.3 714.8h4.8v3h-4.8ZM420.9 718.6h2.3v2.5h-2.3ZM555.4 760.7h4.8v2.4h-4.8ZM515 745.6h3.7v2.5h-3.7ZM388.8 753.8h3.5v2.4h-3.5ZM469.9 759.7h4v2.3h-4ZM384 751.4h2.3v3.4h-2.3ZM373.6 723.5h3.3v3.9h-3.3Z" fill="#f0a020"/>
<path d="M431.4 711.7h3.7v3.9h-3.7ZM450.7 731.4h2.1v3.3h-2.1ZM574.6 744.4h2.4v2.4h-2.4ZM393.7 716.6h2.8v2.8h-2.8ZM506.8 739.5h3.1v3.3h-3.1ZM458 743.4h4v3.2h-4ZM572.1 765.1h4.5v2.2h-4.5ZM517.1 709.7h4.5v2.6h-4.5ZM413.6 749.9h2.6v3.7h-2.6Z" fill="#18d8f0"/>
<path d="M429.8 708.5h3.2v2.7h-3.2ZM447.3 716.9h3.8v2.9h-3.8ZM561.8 715.6h4.7v3.8h-4.7ZM412 715.5h3.3v2.2h-3.3ZM492.7 750.7h4v2.2h-4ZM458.4 718.7h3.8v3.3h-3.8Z" fill="#ff44ff"/>
<g transform="translate(500 870) rotate(-6.4)">
<path  d="M-105 -100L-105 88M-76 -100L-76 88M-47 -100L-47 88M-18 -100L-18 88M11 -100L11 88M40 -100L40 88M69 -100L69 88M98 -100L98 88M127 -100L127 88M-113 -92L139 -92M-113 -73L139 -73M-113 -54L139 -54M-113 -35L139 -35M-113 -16L139 -16M-113 3L139 3M-113 22L139 22M-113 41L139 41M-113 60L139 60M-113 79L139 79" stroke="#d9461a" stroke-width="2" fill="none"/>
</g>
<g transform="translate(409.6 783.7) rotate(-6.4)">
<path d="M-20 -11h40v22h-40Z" fill="#00f000"/>
<path d="M-18 -9h3v14h-3ZM-13.4 -9h3v14h-3ZM-8.8 -9h3v14h-3ZM-2 -9h3v14h-3ZM2.6 -9h3v14h-3ZM7.2 -9h3v14h-3ZM14 -9h3v14h-3Z" fill="#ffffff"/>
<path d="M-14.6 -6.9h1.4v1.6h-1.4ZM-14.6 1.5h1.4v1.6h-1.4ZM-10 -6.9h1.4v1.6h-1.4ZM-10 1.5h1.4v1.6h-1.4ZM-5.4 -6.9h1.4v1.6h-1.4ZM-5.4 1.5h1.4v1.6h-1.4ZM1.4 -6.9h1.4v1.6h-1.4ZM1.4 1.5h1.4v1.6h-1.4ZM6 -6.9h1.4v1.6h-1.4ZM6 1.5h1.4v1.6h-1.4ZM10.6 -6.9h1.4v1.6h-1.4ZM10.6 1.5h1.4v1.6h-1.4ZM17.4 -6.9h1.4v1.6h-1.4ZM17.4 1.5h1.4v1.6h-1.4Z" fill="#000"/>
</g>
<g transform="translate(439.5 831) rotate(-6.4)">
<path d="M-43.5 -20h87v40h-87Z" fill="#00f000"/>
<path d="M-41.5 -18h3v16h-3ZM-36.9 -18h3v16h-3ZM-32.3 -18h3v16h-3ZM-25.5 -18h3v16h-3ZM-20.9 -18h3v16h-3ZM-16.3 -18h3v16h-3ZM-9.5 -18h3v16h-3ZM-4.9 -18h3v16h-3ZM-0.3 -18h3v16h-3ZM6.5 -18h3v16h-3ZM11.1 -18h3v16h-3ZM15.7 -18h3v16h-3ZM22.5 -18h3v16h-3ZM27.1 -18h3v16h-3ZM31.7 -18h3v16h-3ZM38.5 -18h3v16h-3ZM-41.5 2h3v16h-3ZM-36.9 2h3v16h-3ZM-32.3 2h3v16h-3ZM-25.5 2h3v16h-3ZM-20.9 2h3v16h-3ZM-16.3 2h3v16h-3ZM-9.5 2h3v16h-3ZM-4.9 2h3v16h-3ZM-0.3 2h3v16h-3ZM6.5 2h3v16h-3ZM11.1 2h3v16h-3ZM15.7 2h3v16h-3ZM22.5 2h3v16h-3ZM27.1 2h3v16h-3ZM31.7 2h3v16h-3ZM38.5 2h3v16h-3Z" fill="#ffffff"/>
<path d="M-38.1 -15.6h1.4v1.6h-1.4ZM-38.1 -6h1.4v1.6h-1.4ZM-33.5 -15.6h1.4v1.6h-1.4ZM-33.5 -6h1.4v1.6h-1.4ZM-28.9 -15.6h1.4v1.6h-1.4ZM-28.9 -6h1.4v1.6h-1.4ZM-22.1 -15.6h1.4v1.6h-1.4ZM-22.1 -6h1.4v1.6h-1.4ZM-17.5 -15.6h1.4v1.6h-1.4ZM-17.5 -6h1.4v1.6h-1.4ZM-12.9 -15.6h1.4v1.6h-1.4ZM-12.9 -6h1.4v1.6h-1.4ZM-6.1 -15.6h1.4v1.6h-1.4ZM-6.1 -6h1.4v1.6h-1.4ZM-1.5 -15.6h1.4v1.6h-1.4ZM-1.5 -6h1.4v1.6h-1.4ZM3.1 -15.6h1.4v1.6h-1.4ZM3.1 -6h1.4v1.6h-1.4ZM9.9 -15.6h1.4v1.6h-1.4ZM9.9 -6h1.4v1.6h-1.4ZM14.5 -15.6h1.4v1.6h-1.4ZM14.5 -6h1.4v1.6h-1.4ZM19.1 -15.6h1.4v1.6h-1.4ZM19.1 -6h1.4v1.6h-1.4ZM25.9 -15.6h1.4v1.6h-1.4ZM25.9 -6h1.4v1.6h-1.4ZM30.5 -15.6h1.4v1.6h-1.4ZM30.5 -6h1.4v1.6h-1.4ZM35.1 -15.6h1.4v1.6h-1.4ZM35.1 -6h1.4v1.6h-1.4ZM41.9 -15.6h1.4v1.6h-1.4ZM41.9 -6h1.4v1.6h-1.4ZM-38.1 4.4h1.4v1.6h-1.4ZM-38.1 14h1.4v1.6h-1.4ZM-33.5 4.4h1.4v1.6h-1.4ZM-33.5 14h1.4v1.6h-1.4ZM-28.9 4.4h1.4v1.6h-1.4ZM-28.9 14h1.4v1.6h-1.4ZM-22.1 4.4h1.4v1.6h-1.4ZM-22.1 14h1.4v1.6h-1.4ZM-17.5 4.4h1.4v1.6h-1.4ZM-17.5 14h1.4v1.6h-1.4ZM-12.9 4.4h1.4v1.6h-1.4ZM-12.9 14h1.4v1.6h-1.4ZM-6.1 4.4h1.4v1.6h-1.4ZM-6.1 14h1.4v1.6h-1.4ZM-1.5 4.4h1.4v1.6h-1.4ZM-1.5 14h1.4v1.6h-1.4ZM3.1 4.4h1.4v1.6h-1.4ZM3.1 14h1.4v1.6h-1.4ZM9.9 4.4h1.4v1.6h-1.4ZM9.9 14h1.4v1.6h-1.4ZM14.5 4.4h1.4v1.6h-1.4ZM14.5 14h1.4v1.6h-1.4ZM19.1 4.4h1.4v1.6h-1.4ZM19.1 14h1.4v1.6h-1.4ZM25.9 4.4h1.4v1.6h-1.4ZM25.9 14h1.4v1.6h-1.4ZM30.5 4.4h1.4v1.6h-1.4ZM30.5 14h1.4v1.6h-1.4ZM35.1 4.4h1.4v1.6h-1.4ZM35.1 14h1.4v1.6h-1.4ZM41.9 4.4h1.4v1.6h-1.4ZM41.9 14h1.4v1.6h-1.4Z" fill="#000"/>
</g>
<path d="M497 804h14v39h-14Z" fill="#6b8e23"/>
<g transform="translate(540 819) rotate(-6.4)">
<path d="M-27.5 -19.5h55v39h-55Z" fill="#00f000"/>
<path d="M-25.5 -17.5h3v15.5h-3ZM-20.9 -17.5h3v15.5h-3ZM-16.3 -17.5h3v15.5h-3ZM-9.5 -17.5h3v15.5h-3ZM-4.9 -17.5h3v15.5h-3ZM-0.3 -17.5h3v15.5h-3ZM6.5 -17.5h3v15.5h-3ZM11.1 -17.5h3v15.5h-3ZM15.7 -17.5h3v15.5h-3ZM22.5 -17.5h3v15.5h-3ZM-25.5 2h3v15.5h-3ZM-20.9 2h3v15.5h-3ZM-16.3 2h3v15.5h-3ZM-9.5 2h3v15.5h-3ZM-4.9 2h3v15.5h-3ZM-0.3 2h3v15.5h-3ZM6.5 2h3v15.5h-3ZM11.1 2h3v15.5h-3ZM15.7 2h3v15.5h-3ZM22.5 2h3v15.5h-3Z" fill="#ffffff"/>
<path d="M-22.1 -15.2h1.4v1.6h-1.4ZM-22.1 -5.9h1.4v1.6h-1.4ZM-17.5 -15.2h1.4v1.6h-1.4ZM-17.5 -5.9h1.4v1.6h-1.4ZM-12.9 -15.2h1.4v1.6h-1.4ZM-12.9 -5.9h1.4v1.6h-1.4ZM-6.1 -15.2h1.4v1.6h-1.4ZM-6.1 -5.9h1.4v1.6h-1.4ZM-1.5 -15.2h1.4v1.6h-1.4ZM-1.5 -5.9h1.4v1.6h-1.4ZM3.1 -15.2h1.4v1.6h-1.4ZM3.1 -5.9h1.4v1.6h-1.4ZM9.9 -15.2h1.4v1.6h-1.4ZM9.9 -5.9h1.4v1.6h-1.4ZM14.5 -15.2h1.4v1.6h-1.4ZM14.5 -5.9h1.4v1.6h-1.4ZM19.1 -15.2h1.4v1.6h-1.4ZM19.1 -5.9h1.4v1.6h-1.4ZM25.9 -15.2h1.4v1.6h-1.4ZM25.9 -5.9h1.4v1.6h-1.4ZM-22.1 4.3h1.4v1.6h-1.4ZM-22.1 13.6h1.4v1.6h-1.4ZM-17.5 4.3h1.4v1.6h-1.4ZM-17.5 13.6h1.4v1.6h-1.4ZM-12.9 4.3h1.4v1.6h-1.4ZM-12.9 13.6h1.4v1.6h-1.4ZM-6.1 4.3h1.4v1.6h-1.4ZM-6.1 13.6h1.4v1.6h-1.4ZM-1.5 4.3h1.4v1.6h-1.4ZM-1.5 13.6h1.4v1.6h-1.4ZM3.1 4.3h1.4v1.6h-1.4ZM3.1 13.6h1.4v1.6h-1.4ZM9.9 4.3h1.4v1.6h-1.4ZM9.9 13.6h1.4v1.6h-1.4ZM14.5 4.3h1.4v1.6h-1.4ZM14.5 13.6h1.4v1.6h-1.4ZM19.1 4.3h1.4v1.6h-1.4ZM19.1 13.6h1.4v1.6h-1.4ZM25.9 4.3h1.4v1.6h-1.4ZM25.9 13.6h1.4v1.6h-1.4Z" fill="#000"/>
</g>
<g transform="translate(517 874.6) rotate(-6.4)">
<path d="M-57.5 -10.5h115v21h-115Z" fill="#00f000"/>
<path d="M-55.5 -8.5h3v14h-3ZM-50.9 -8.5h3v14h-3ZM-46.3 -8.5h3v14h-3ZM-39.5 -8.5h3v14h-3ZM-34.9 -8.5h3v14h-3ZM-30.3 -8.5h3v14h-3ZM-23.5 -8.5h3v14h-3ZM-18.9 -8.5h3v14h-3ZM-14.3 -8.5h3v14h-3ZM-7.5 -8.5h3v14h-3ZM-2.9 -8.5h3v14h-3ZM1.7 -8.5h3v14h-3ZM8.5 -8.5h3v14h-3ZM13.1 -8.5h3v14h-3ZM17.7 -8.5h3v14h-3ZM24.5 -8.5h3v14h-3ZM29.1 -8.5h3v14h-3ZM33.7 -8.5h3v14h-3ZM40.5 -8.5h3v14h-3ZM45.1 -8.5h3v14h-3ZM49.7 -8.5h3v14h-3Z" fill="#ffffff"/>
<path d="M-52.1 -6.4h1.4v1.6h-1.4ZM-52.1 2h1.4v1.6h-1.4ZM-47.5 -6.4h1.4v1.6h-1.4ZM-47.5 2h1.4v1.6h-1.4ZM-42.9 -6.4h1.4v1.6h-1.4ZM-42.9 2h1.4v1.6h-1.4ZM-36.1 -6.4h1.4v1.6h-1.4ZM-36.1 2h1.4v1.6h-1.4ZM-31.5 -6.4h1.4v1.6h-1.4ZM-31.5 2h1.4v1.6h-1.4ZM-26.9 -6.4h1.4v1.6h-1.4ZM-26.9 2h1.4v1.6h-1.4ZM-20.1 -6.4h1.4v1.6h-1.4ZM-20.1 2h1.4v1.6h-1.4ZM-15.5 -6.4h1.4v1.6h-1.4ZM-15.5 2h1.4v1.6h-1.4ZM-10.9 -6.4h1.4v1.6h-1.4ZM-10.9 2h1.4v1.6h-1.4ZM-4.1 -6.4h1.4v1.6h-1.4ZM-4.1 2h1.4v1.6h-1.4ZM0.5 -6.4h1.4v1.6h-1.4ZM0.5 2h1.4v1.6h-1.4ZM5.1 -6.4h1.4v1.6h-1.4ZM5.1 2h1.4v1.6h-1.4ZM11.9 -6.4h1.4v1.6h-1.4ZM11.9 2h1.4v1.6h-1.4ZM16.5 -6.4h1.4v1.6h-1.4ZM16.5 2h1.4v1.6h-1.4ZM21.1 -6.4h1.4v1.6h-1.4ZM21.1 2h1.4v1.6h-1.4ZM27.9 -6.4h1.4v1.6h-1.4ZM27.9 2h1.4v1.6h-1.4ZM32.5 -6.4h1.4v1.6h-1.4ZM32.5 2h1.4v1.6h-1.4ZM37.1 -6.4h1.4v1.6h-1.4ZM37.1 2h1.4v1.6h-1.4ZM43.9 -6.4h1.4v1.6h-1.4ZM43.9 2h1.4v1.6h-1.4ZM48.5 -6.4h1.4v1.6h-1.4ZM48.5 2h1.4v1.6h-1.4ZM53.1 -6.4h1.4v1.6h-1.4ZM53.1 2h1.4v1.6h-1.4Z" fill="#000"/>
</g>
<g transform="translate(592 864) rotate(-6.4)">
<path d="M-10.5 -10h21v20h-21Z" fill="#6b8e23"/>
</g>
<g transform="translate(581 825) rotate(-6.4)">
<path d="M-10 -11h20v22h-20Z" fill="#6b8e23"/>
</g>
<g transform="translate(425.5 882.5) rotate(-6.4)">
<path d="M-6.5 -9.5h13v19h-13Z" fill="#6b8e23"/>
</g>
<path  d="M393.9 805.4L571 785L581.7 779L579.5 760M401 864.5L600.6 841M500 797L500 846M581.7 785L618 840L630 869.7L645 950" stroke="#ff44ff" stroke-width="1.8" fill="none"/>
<path  d="M594 770.5L647 869.7L652 960M332.7 799L383 779" stroke="#f0a020" stroke-width="1.8" fill="none"/>
<path  d="M575 797L636.5 874M332 790L345 770L362 762L365 770L340 790" stroke="#ffffff" stroke-width="2.5" fill="none"/>
<g transform="translate(518 910) rotate(-6.4)">
<path  d="M-115.6 -24.2L-115.6 24.6M-107.9 -28.3L-107.9 22M-97.5 -29.1L-97.5 26.7M-88.8 -25.7L-88.8 26M-79.8 -26.5L-79.8 24M-71 -28L-71 27M-60.4 -25L-60.4 23.8M-51.6 -27.4L-51.6 24.1M-43.8 -24.5L-43.8 23.9M-35 -29.8L-35 27.5M-24.5 -29.8L-24.5 27.8M-15 -28.9L-15 22.4M-5.3 -27.7L-5.3 23.8M3.9 -29.7L3.9 24.9M13.5 -25.8L13.5 24.1M24.1 -24.2L24.1 23.1M33.8 -26.7L33.8 22.5M43.4 -26.2L43.4 25.5M52.1 -27.2L52.1 25.4M60.7 -24.7L60.7 23.1M71.2 -27.3L71.2 22.7M81.7 -25.5L81.7 22.6M90.8 -25.5L90.8 24.9M100 -25.4L100 25.4M107.5 -27.1L107.5 25.5M-57.4 19.7L-57.4 38M-48.6 18.5L-48.6 40.5M-40.9 15.3L-40.9 37.8M-33.6 16.6L-33.6 36.6M-24.4 15.3L-24.4 39.6M40.8 17.6L40.8 33.2M48.3 18.6L48.3 37.2M57.3 14.7L57.3 32.1M68.1 17.1L68.1 36.7M77.4 15.9L77.4 33.4M87.4 19.1L87.4 33.6" stroke="#d9461a" stroke-width="1.8" fill="none"/>
<path  d="M-116 -23.2L114 -23.2M-116 -11.7L114 -11.7M-116 1.4L114 1.4M-116 15.7L114 15.7M-60 20.1L-20 20.1M40 20.8L90 20.8" stroke="#d9461a" stroke-width="1.6" fill="none"/>
<path  d="M-114.7 -23.2L-99 -23.2L-99 -11.7L-114.7 -11.7ZM-99 -23.2L-82.6 -23.2L-82.6 -11.7L-99 -11.7ZM67.2 -23.2L77.3 -23.2L77.3 -11.7L67.2 -11.7ZM93.7 -23.2L109.5 -23.2L109.5 -11.7L93.7 -11.7ZM-114.3 -11.7L-101.4 -11.7L-101.4 1.4L-114.3 1.4ZM-74.4 -11.7L-64 -11.7L-64 1.4L-74.4 1.4ZM-64 -11.7L-48.2 -11.7L-48.2 1.4L-64 1.4ZM-32.3 -11.7L-18.1 -11.7L-18.1 1.4L-32.3 1.4ZM77.9 -11.7L85.4 -11.7L85.4 1.4L77.9 1.4ZM107.6 -11.7L114 -11.7L114 1.4L107.6 1.4ZM-83.7 1.4L-70.5 1.4L-70.5 15.7L-83.7 15.7ZM-15.4 1.4L-8.1 1.4L-8.1 15.7L-15.4 15.7ZM-8.1 1.4L7.7 1.4L7.7 15.7L-8.1 15.7ZM29.3 1.4L38.8 1.4L38.8 15.7L29.3 15.7ZM79.9 1.4L87.9 1.4L87.9 15.7L79.9 15.7ZM-37.4 15.7L-23.8 15.7L-23.8 22L-37.4 22ZM-23.8 15.7L-7.7 15.7L-7.7 22L-23.8 22ZM43.8 15.7L59.9 15.7L59.9 22L43.8 22ZM93.9 15.7L108.5 15.7L108.5 22L93.9 22ZM-59.7 20.1L-46.2 20.1L-46.2 34.1L-59.7 34.1ZM40.9 20.8L56.8 20.8L56.8 32L40.9 32Z" stroke="#ffffff" stroke-width="3.4" fill="none"/>
<path  d="M-82.6 -23.2L-69.9 -23.2L-69.9 -11.7L-82.6 -11.7ZM-69.9 -23.2L-58.3 -23.2L-58.3 -11.7L-69.9 -11.7ZM-20.1 -23.2L-9.6 -23.2L-9.6 -11.7L-20.1 -11.7ZM-9.6 -23.2L3.2 -23.2L3.2 -11.7L-9.6 -11.7ZM35.5 -23.2L50.5 -23.2L50.5 -11.7L35.5 -11.7ZM-101.4 -11.7L-90.8 -11.7L-90.8 1.4L-101.4 1.4ZM-18.1 -11.7L-5.2 -11.7L-5.2 1.4L-18.1 1.4ZM-5.2 -11.7L10.1 -11.7L10.1 1.4L-5.2 1.4ZM10.1 -11.7L19.3 -11.7L19.3 1.4L10.1 1.4ZM19.3 -11.7L29.1 -11.7L29.1 1.4L19.3 1.4ZM85.4 -11.7L94 -11.7L94 1.4L85.4 1.4ZM-100.6 1.4L-83.7 1.4L-83.7 15.7L-100.6 15.7ZM-39.7 1.4L-31.6 1.4L-31.6 15.7L-39.7 15.7ZM38.8 1.4L54.3 1.4L54.3 15.7L38.8 15.7ZM54.3 1.4L69.9 1.4L69.9 15.7L54.3 15.7ZM69.9 1.4L79.9 1.4L79.9 15.7L69.9 15.7ZM87.9 1.4L104.7 1.4L104.7 15.7L87.9 15.7ZM104.7 1.4L114 1.4L114 15.7L104.7 15.7ZM-113.4 15.7L-105.2 15.7L-105.2 22L-113.4 22ZM-92.9 15.7L-78.5 15.7L-78.5 22L-92.9 22ZM-78.5 15.7L-68.9 15.7L-68.9 22L-78.5 22ZM108.5 15.7L114 15.7L114 22L108.5 22ZM-27.9 20.1L-20 20.1L-20 34.1L-27.9 34.1ZM56.8 20.8L64.5 20.8L64.5 32L56.8 32ZM77.4 20.8L88.5 20.8L88.5 32L77.4 32Z" stroke="#ffffff" stroke-width="2.6" fill="none"/>
<path  d="M-58.3 -23.2L-49.7 -23.2L-49.7 -11.7L-58.3 -11.7ZM-49.7 -23.2L-35.3 -23.2L-35.3 -11.7L-49.7 -11.7ZM-35.3 -23.2L-20.1 -23.2L-20.1 -11.7L-35.3 -11.7ZM3.2 -23.2L18.6 -23.2L18.6 -11.7L3.2 -11.7ZM18.6 -23.2L35.5 -23.2L35.5 -11.7L18.6 -11.7ZM50.5 -23.2L67.2 -23.2L67.2 -11.7L50.5 -11.7ZM77.3 -23.2L93.7 -23.2L93.7 -11.7L77.3 -11.7ZM-90.8 -11.7L-74.4 -11.7L-74.4 1.4L-90.8 1.4ZM-48.2 -11.7L-32.3 -11.7L-32.3 1.4L-48.2 1.4ZM29.1 -11.7L43.3 -11.7L43.3 1.4L29.1 1.4ZM43.3 -11.7L59 -11.7L59 1.4L43.3 1.4ZM59 -11.7L66.9 -11.7L66.9 1.4L59 1.4ZM94 -11.7L107.6 -11.7L107.6 1.4L94 1.4ZM-54.4 1.4L-39.7 1.4L-39.7 15.7L-54.4 15.7ZM-31.6 1.4L-15.4 1.4L-15.4 15.7L-31.6 15.7ZM19.4 1.4L29.3 1.4L29.3 15.7L19.4 15.7ZM-57.8 15.7L-46.8 15.7L-46.8 22L-57.8 22ZM-46.8 15.7L-37.4 15.7L-37.4 22L-46.8 22ZM30.7 15.7L43.8 15.7L43.8 22L30.7 22ZM59.9 15.7L72.1 15.7L72.1 22L59.9 22ZM72.1 15.7L82.3 15.7L82.3 22L72.1 22ZM82.3 15.7L93.9 15.7L93.9 22L82.3 22ZM64.5 20.8L77.4 20.8L77.4 32L64.5 32Z" stroke="#ffffff" stroke-width="3" fill="none"/>
<path  d="M-115.7 8.6L-100.6 8.6M2.5 18.9L15.4 18.9M-46.2 27.1L-38.5 27.1" stroke="#ffe000" stroke-width="2" fill="none"/>
<path  d="M-68.9 18.9L-57.8 18.9" stroke="#f0a020" stroke-width="2" fill="none"/>
<path d="M-93.1 -18.8h3.6v4.4h-3.6ZM-77.7 -19.8h2.6v2.6h-2.6ZM60.1 -19.1h2.7v3.2h-2.7ZM87.9 -9.3h4.1v3.3h-4.1ZM-78.8 4.6h4.4v3.2h-4.4ZM-25 6h4.3v4.4h-4.3ZM-105.2 16.9h5.5v5.9h-5.5ZM85.9 17.8h3.8v4h-3.8ZM81.8 -20.3h3.1v3.1h-3.1ZM88.8 -3.8h2.4v3.5h-2.4ZM-38.8 15.7h4.1v2.8h-4.1ZM-69.5 -21.6h4v3.9h-4ZM-69.9 18.3h4v3.5h-4ZM-11.4 19h2.6v2.4h-2.6ZM-44.8 -12.1h4.5v2.3h-4.5ZM-80.1 -10.6h4.1v2.4h-4.1ZM-80 22h30v10h-30ZM-10 20h35v9h-35ZM-55.3 27.9h3.6v2.6h-3.6ZM44.8 25.3h3.5v4.1h-3.5Z" fill="#ffffff"/>
<path d="M-64.7 -19h4.2v3.6h-4.2ZM-27.5 -20.8h4.4v3.9h-4.4ZM10.3 -18.4h4.4v2.5h-4.4ZM100.9 -20.2h3v3.5h-3ZM-70.3 -6.1h3.2v3.9h-3.2ZM-41.7 -8.2h2.8v2.6h-2.8ZM22.7 -4.8h3.7v2.7h-3.7ZM36.6 -6.5h4.3v2.9h-4.3ZM99.5 -5.6h3.5v2.6h-3.5ZM-13.4 4.7h4v3.8h-4ZM73.7 4.2h3.1v3.5h-3.1ZM81.9 7.5h3.8v3.3h-3.8ZM-89.2 17.8h2.9v2.6h-2.9ZM36.8 17.8h4.3v4h-4.3ZM50.6 17.8h4.5v2.6h-4.5ZM74.5 17.8h2.7v3.2h-2.7Z" fill="#c8c8c8"/>
<path d="M-45.3 -18.6h4.4v3.9h-4.4ZM-7.2 -20.3h2.8v4.4h-2.8ZM69.6 -19.9h3.4v3.7h-3.4ZM-109.6 -5.8h4.2v4h-4.2ZM-60.1 -8.5h3.2v2.8h-3.2ZM-14.4 -7.3h4.4v3.9h-4.4ZM-1.3 -9.6h2.8v3h-2.8ZM50.5 -8h2.6v3.3h-2.6ZM109.6 -7.1h4.4v2.8h-4.4ZM-46.3 9.1h3.3v2.9h-3.3ZM95.4 3.5h2.8v3.7h-2.8ZM-111.4 17.8h3.6v3.8h-3.6ZM-55.3 17.8h4.3v4.1h-4.3ZM62.6 17.8h3.4v3.8h-3.4ZM99.1 17.8h3.7v3.5h-3.7ZM23.7 -12.2h3.2v3.2h-3.2ZM-113.8 -13.3h3.2v2.1h-3.2ZM-15 -14.8h4.4v3.2h-4.4ZM53.6 -16.5h4v3.3h-4ZM74.6 -18.4h5v3.9h-5ZM88.6 18h3.5v3.7h-3.5ZM60.6 11.2h3.7v2.6h-3.7ZM58.8 25h4.1v3.2h-4.1Z" fill="#b0b0b0"/>
<path d="M37 -21.7h7.5v3h-7.5ZM78.8 -21.7h6.2v1.7h-6.2ZM35 8.7h3.1v3.6h-3.1ZM-99.5 3.4h2v3.4h-2ZM-48.2 -14.3h2.4v3.8h-2.4ZM-18.3 15.9h2.1v3.7h-2.1ZM-38.5 20.9h4.3v4.9h-4.3ZM47.4 26.1h2.5v2.7h-2.5Z" fill="#f0a020"/>
<path d="M-30.8 -10.2h8.6v2.9h-8.6ZM66.9 -4.6h4.6v4h-4.6ZM-70.5 9.4h13.9v4.6h-13.9ZM7.7 8.6h11.5v3.4h-11.5ZM30.8 2.9h3.4v3.9h-3.4ZM-77 17.2h3.8v1.1h-3.8ZM-45.3 17.2h4.2v1.5h-4.2ZM-22.3 17.2h8.4v1h-8.4ZM-7.7 15.7h8.6v5.6h-8.6ZM15.4 16.8h9.4v3.2h-9.4ZM110 17.2h0.8v0.8h-0.8ZM-95 5.3h2.6v2.8h-2.6ZM-1.8 17.5h2.3v3.1h-2.3ZM-65.2 -20.5h2.3v2.2h-2.3ZM57.3 2h4.5v2.4h-4.5ZM18.3 21.9h4.6v0.1h-4.6ZM-39.1 -0.2h2.6v3.1h-2.6ZM-74.6 15.5h2.1v3.7h-2.1ZM-68.4 -19.4h2.6v2.2h-2.6ZM21.5 0.9h2.6v2.9h-2.6ZM17.4 -19.4h3v3.9h-3ZM-50.2 29.1h3.5v2.7h-3.5Z" fill="#ffe000"/>
<path d="M9.3 18.2h2.7v3.7h-2.7ZM-29.6 -22.1h4.9v2.9h-4.9ZM-104.4 -13.7h4.1v2.9h-4.1Z" fill="#ff44ff"/>
<path d="M66.2 4.4h4.8v3.4h-4.8ZM96.7 -15.2h2.2v2.4h-2.2ZM-114 -20.9h2.1v2.4h-2.1ZM-48.5 -13.3h4.1v3.4h-4.1ZM-81.7 -15.5h4v2.2h-4ZM5.1 -10.6h2.1v3.6h-2.1Z" fill="#00f000"/>
<path d="M99.1 8.2h3.2v2.9h-3.2ZM40.4 1.5h4.3v2.2h-4.3ZM3.6 -20h2.8v3.7h-2.8ZM11.8 -0.5h4v2.6h-4ZM-58.8 -6.5h4.6v2.5h-4.6ZM67.9 21.1h4.9v0.9h-4.9Z" fill="#18d8f0"/>
</g>
<g transform="translate(457 904) rotate(-6.4)">
<path d="M-17 -12h34v24h-34Z" fill="#d06a10"/>
</g>
<g transform="translate(567 891.5) rotate(-6.4)">
<path d="M-13 -11.5h26v23h-26Z" fill="#d06a10"/>
</g>
<g transform="translate(398 900) rotate(-6.4)">
<path d="M-6 -5h12v10h-12Z" fill="#1aa0e0"/>
</g>
<path  d="M409 943.3L417 991M413.5 991L420.5 991L420.5 997.5L413.5 997.5ZM437.5 940.5L445.5 989M442 989L449 989L449 995.5L442 995.5ZM466 937.6L474 986M470.5 986L477.5 986L477.5 992.5L470.5 992.5ZM494.5 934.8L502.5 980.7M499 980.7L506 980.7L506 987.2L499 987.2ZM523 931.9L531 978.6M527.5 978.6L534.5 978.6L534.5 985.1L527.5 985.1ZM552.6 928.9L560.6 974M557.1 974L564.1 974L564.1 980.5L557.1 980.5ZM582 926L590 972M586.5 972L593.5 972L593.5 978.5L586.5 978.5ZM610.6 923.1L618.6 968M615.1 968L622.1 968L622.1 974.5L615.1 974.5ZM628.5 921.4L636.5 967M633 967L640 967L640 973.5L633 973.5ZM650.7 919.1L658.7 962.7M655.2 962.7L662.2 962.7L662.2 969.2L655.2 969.2ZM351.4 827.5L377.4 824.5M343.9 824.5L350.9 824.5L350.9 831L343.9 831ZM368 821L394 818M360.5 818L367.5 818L367.5 824.5L360.5 824.5ZM371.5 840L397.5 837M364 837L371 837L371 843.5L364 843.5ZM373.6 859L399.6 856M366.1 856L373.1 856L373.1 862.5L366.1 862.5ZM377.8 880L403.8 877M370.3 877L377.3 877L377.3 883.5L370.3 883.5ZM379.3 900L405.3 897M371.8 897L378.8 897L378.8 903.5L371.8 903.5ZM621 769L642 766M642.5 763L649.5 763L649.5 769.5L642.5 769.5ZM624 790L645 787M645.5 784L652.5 784L652.5 790.5L645.5 790.5ZM626 809L647 806M647.5 803L654.5 803L654.5 809.5L647.5 809.5ZM628 828L649 825M649.5 822L656.5 822L656.5 828.5L649.5 828.5ZM632.6 849.5L653.6 846.5M654.1 843.5L661.1 843.5L661.1 850L654.1 850ZM634.7 870.6L655.7 867.6M656.2 864.6L663.2 864.6L663.2 871.1L656.2 871.1ZM638 903L659 900M659.5 897L666.5 897L666.5 903.5L659.5 903.5ZM641 929.7L662 926.7M662.5 923.7L669.5 923.7L669.5 930.2L662.5 930.2Z" stroke="#1f9a3a" stroke-width="1.5" fill="none"/>
<path  d="M329.5 494L329.5 1001" stroke="#00f000" stroke-width="2.2" fill="none"/>
<path  d="M480 1050.8L516 1050.8" stroke="#1f9a3a" stroke-width="2" fill="none"/>
<path  d="M-97.3 487L-97.3 521M-70 487L-70 521M-41.4 487L-41.4 521M-13 487L-13 521M17.7 487L17.7 521M46 487L46 521M75.7 487L75.7 521M104 487L104 521M133.8 487L133.8 521M163 487L163 521" stroke="#1f9a3a" stroke-width="1.6" fill="none"/>
<path  d="M-99.3 489L-95.3 489M-72 489L-68 489M-43.4 489L-39.4 489M-15 489L-11 489M15.7 489L19.7 489M44 489L48 489M73.7 489L77.7 489M102 489L106 489M131.8 489L135.8 489M161 489L165 489" stroke="#1f9a3a" stroke-width="1.2" fill="none"/>
<path  d="M-97.3 520L-97.3 778M-70 520L-70 778M-41.4 520L-41.4 778M-13 520L-13 778M17.7 520L17.7 778M46 520L46 778M75.7 520L75.7 778M104 520L104 778M133.8 520L133.8 778M163 520L163 778M-101.3 520.6L171 520.6M-101.3 554L171 554M-101.3 585L171 585M-101.3 608L171 608M-101.3 627L171 627M-101.3 647L171 647M-101.3 665L171 665M-101.3 687L171 687M-101.3 708L171 708" stroke="#d9461a" stroke-width="2" fill="none"/>
<path  d="M165 526L197 526M165 585L197 585M165 608L197 608M165 627L197 627M165 647L197 647M165 665L197 665M165 687L197 687M165 708L197 708" stroke="#1f9a3a" stroke-width="1.5" fill="none"/>
<path  d="M164.5 588L164.5 776" stroke="#f0a020" stroke-width="1.8" fill="none"/>
<path d="M69 525.9h8.3v3.8h-8.3ZM79.3 551.9h5.1v5h-5.1ZM76.1 567.9h6.2v4.8h-6.2ZM107.8 567.9h5.7v5.5h-5.7ZM98.5 582.5h2.9v3h-2.9ZM146.1 521.5h5.6v5.6h-5.6ZM157 519.8h3.6v3.2h-3.6ZM146.6 519.8h2.1v3h-2.1Z" fill="#f0a020"/>
<path d="M67.5 542.6h13.4v5.4h-13.4ZM82.5 544.3h9.7v3.2h-9.7ZM72.1 537.8h3.2v3.6h-3.2ZM69.4 539.3h3.1v3.7h-3.1ZM90.7 580h2.8v3.5h-2.8Z" fill="#ffe000"/>
<path d="M87.5 547.7h2.6v2.9h-2.6ZM68.5 556.9h3.8v4h-3.8ZM98.1 554.7h3.1v3.9h-3.1ZM69.3 570.4h2.9v4.3h-2.9ZM134.9 524.8h4.1v4.2h-4.1ZM142.7 536.6h4v4.1h-4Z" fill="#b0b0b0"/>
<path d="M88.8 543.1h4.5v2.8h-4.5ZM67.6 542.3h4v3.8h-4ZM149.8 532.6h3.6v2.5h-3.6Z" fill="#00f000"/>
<path d="M77.8 532.5h3.5v2h-3.5ZM109.3 583.6h4.9v3.4h-4.9ZM88.4 575.7h2.9v3.9h-2.9ZM108.6 577.8h3.2v3.4h-3.2ZM147.3 552.5h4.5v3.6h-4.5Z" fill="#ff44ff"/>
<path d="M68.3 546.7h3.2v2.6h-3.2ZM124.1 566.7h3.9v3.6h-3.9Z" fill="#18d8f0"/>
<path d="M126.7 557.8h3.6v3.4h-3.6ZM97.2 551.8h3v2.3h-3ZM77.8 561.9h3.2v3.4h-3.2ZM88.5 561.8h2.8v2.4h-2.8ZM85.5 555.6h3.4v3.1h-3.4ZM132.2 534.5h4.2v4.1h-4.2ZM130.2 548h10v4.8h-10ZM156.5 550h2.9v3.4h-2.9ZM143.4 539.4h3.8v3.2h-3.8ZM128.6 540.8h2.3v2.4h-2.3Z" fill="#ffffff"/>
<path  d="M65.6 522.8L65.6 553.3M73.9 518.1L73.9 558M84.1 521.1L84.1 555M94.2 518.6L94.2 556.5M67.5 548.2L67.5 587.5M75.6 545.8L75.6 589.7M85.2 545.2L85.2 587.7M94.9 549.8L94.9 591.9M102.7 548.4L102.7 592.7M111.1 548.7L111.1 592.3M120.6 544.6L120.6 589.4M129.6 544.3L129.6 590M127.7 513.5L127.7 563.4M136.1 512.9L136.1 561.6M144.1 518.1L144.1 563.3M154.1 514.4L154.1 562.5" stroke="#d9461a" stroke-width="1.8" fill="none"/>
<path  d="M65 524.4L95 524.4M65 539.1L95 539.1M65 550.4L130 550.4M65 566.4L130 566.4M127.5 518.7L163 518.7M127.5 531.6L163 531.6M127.5 543L163 543" stroke="#d9461a" stroke-width="1.6" fill="none"/>
<path  d="M67.5 524.4L82.4 524.4L82.4 539.1L67.5 539.1ZM82.4 524.4L94.4 524.4L94.4 539.1L82.4 539.1Z" stroke="#f0a020" stroke-width="3" fill="none"/>
<path  d="M65.5 550.4L77.8 550.4L77.8 566.4L65.5 566.4ZM108.3 550.4L124.6 550.4L124.6 566.4L108.3 566.4ZM124.6 550.4L130 550.4L130 566.4L124.6 566.4ZM67.2 566.4L74.6 566.4L74.6 581.7L67.2 581.7ZM119.8 566.4L130 566.4L130 581.7L119.8 581.7ZM140.2 531.6L148.8 531.6L148.8 543L140.2 543Z" stroke="#ffffff" stroke-width="2.6" fill="none"/>
<path  d="M77.8 550.4L94.6 550.4L94.6 566.4L77.8 566.4ZM94.6 550.4L108.3 550.4L108.3 566.4L94.6 566.4ZM74.6 566.4L91.6 566.4L91.6 581.7L74.6 581.7ZM91.6 566.4L106.3 566.4L106.3 581.7L91.6 581.7ZM106.3 566.4L119.8 566.4L119.8 581.7L106.3 581.7ZM129.4 518.7L146.1 518.7L146.1 531.6L129.4 531.6ZM148.8 531.6L163 531.6L163 543L148.8 543ZM144.3 543L154.4 543L154.4 556.3L144.3 556.3ZM154.4 543L163 543L163 556.3L154.4 556.3Z" stroke="#ffffff" stroke-width="3.4" fill="none"/>
<path  d="M127.5 531.6L140.2 531.6L140.2 543L127.5 543Z" stroke="#ffffff" stroke-width="3" fill="none"/>
<path d="M94.8 524h35v26h-35Z" fill="#d06a10"/>
<path d="M129 520h32v14h-32Z" fill="#ffffff"/>
<path d="M83 629h11v3.5h-11ZM83 659h11v3h-11ZM130.8 755.3h3.9v3.7h-3.9ZM89.1 711.7h4v2.4h-4ZM92.9 764.1h3.1v2.3h-3.1ZM88.5 719.3h3.1v2.9h-3.1ZM71.7 738.4h3.7v2.4h-3.7Z" fill="#ff44ff"/>
<path d="M161 659h8v6h-8ZM138.1 775.2h3.1v3.4h-3.1ZM90.7 733.3h2.7v2.1h-2.7ZM83.6 765.6h4.7v3.9h-4.7ZM78.3 757.2h2.4v2.4h-2.4Z" fill="#00f000"/>
<path d="M117.2 707.6h3.9v0.4h-3.9ZM124.8 682.9h4.5v4.7h-4.5ZM97.3 739h4.5v5.8h-4.5ZM111.2 742.6h7.2v3.8h-7.2ZM117.1 755.5h10.5v2.8h-10.5ZM133.5 755.5h3.2v2.9h-3.2ZM93.2 712.3h3.1v3.3h-3.1ZM117.5 721.7h2.9v2.5h-2.9ZM138.4 746.6h3.5v3h-3.5ZM98 753.3h2v3.6h-2ZM98.9 775.7h1.1v3.9h-1.1ZM88.2 766.8h3.3v3h-3.3ZM74 772h3.9v2.9h-3.9ZM88.5 771h3.3v2.7h-3.3ZM99 779h1v1h-1Z" fill="#ffe000"/>
<path d="M130.3 700.1h3.4v2.6h-3.4ZM131 686.3h4.2v4.1h-4.2ZM128.7 686.6h5.6v3.1h-5.6ZM126.9 684.4h3.8v3.8h-3.8ZM113.9 714.6h4.3v2.7h-4.3ZM103.2 755.7h8.9v4.9h-8.9ZM86.8 771.2h5.5v4h-5.5ZM95.5 773.1h6.1v5h-6.1ZM134.2 769.8h7v3.7h-7ZM133.6 723.1h2.8v2h-2.8ZM110 713.7h3.7v3h-3.7ZM90.8 740.8h4.8v2.9h-4.8ZM126.7 710.6h3.9v2.2h-3.9ZM93.2 756.1h3.9v3.6h-3.9ZM79.4 769.7h3v3.3h-3ZM95.5 753.9h3.1v2.6h-3.1Z" fill="#ffffff"/>
<path d="M123.8 686.7h2.1v4.7h-2.1ZM140 707.5h2v0.5h-2ZM136.1 684.6h2.9v3.8h-2.9ZM103.6 716h2.9v3.8h-2.9ZM125.6 716.2h3.3v4.3h-3.3ZM137.1 713.3h4.1v2.7h-4.1ZM138.8 729.9h2.9v3.3h-2.9ZM137.5 744.1h3.2v4.1h-3.2ZM89.6 762.5h3.4v3.2h-3.4ZM105.9 773.4h3.6v2.6h-3.6ZM128 772.1h4.5v4.3h-4.5ZM128.6 721.8h4.7v3.5h-4.7ZM86.2 739.8h4v3.7h-4ZM89.2 746.5h3.2v3.9h-3.2ZM79.3 778.3h3.1v1.7h-3.1Z" fill="#b0b0b0"/>
<path d="M88.3 724h2.7v4.9h-2.7ZM118.5 771.2h3v3.1h-3ZM122.8 770.4h2.9v2.8h-2.9ZM108.1 741.4h4.7v2.9h-4.7ZM114.9 723h3.5v2.6h-3.5ZM68.5 737.8h3.9v3.7h-3.9ZM92 736.4h7.7v3.7h-7.7ZM67.6 753.7h13.6v3.6h-13.6ZM96.1 764.8h3.9v2.5h-3.9ZM91.6 778h3.4v2h-3.4Z" fill="#f0a020"/>
<path d="M100.9 725.3h4.5v3.6h-4.5ZM125.6 726.6h3.5v3.7h-3.5ZM125.3 747.9h3.8v4.4h-3.8ZM92.3 767.5h4.1v4.1h-4.1Z" fill="#c8c8c8"/>
<path d="M97.3 750.8h2.3v3.9h-2.3Z" fill="#18d8f0"/>
<path  d="M140 548L162 548L162 585L140 585ZM150 548L150 585M132.7 706.6L141.3 706.6L141.3 708L132.7 708ZM134.4 693.9L140 693.9L140 698.3L134.4 698.3Z" stroke="#ffe000" stroke-width="2" fill="none"/>
<path  d="M79 611L126 611L126 622L79 622Z" stroke="#f0a020" stroke-width="1.8" fill="none"/>
<path  d="M163.4 587L163.4 780" stroke="#ffe000" stroke-width="1.8" fill="none"/>
<path  d="M160.5 634L170.5 634L170.5 649L160.5 649ZM158.5 657L172.5 657L172.5 667L158.5 667Z" stroke="#ffffff" stroke-width="2.2" fill="none"/>
<path  d="M107.3 698L115.3 698L115.3 703.6L107.3 703.6ZM115.5 686.2L123 686.2L123 692L115.5 692ZM112.6 681.4L121.2 681.4L121.2 687.9L112.6 687.9ZM118.1 685.4L128.1 685.4L128.1 690.6L118.1 690.6ZM111.5 690.6L120.5 690.6L120.5 696.4L111.5 696.4ZM108.9 685.2L116.3 685.2L116.3 693.1L108.9 693.1ZM105.3 703.4L112.7 703.4L112.7 707.6L105.3 707.6Z" stroke="#ffffff" stroke-width="2" fill="none"/>
<path  d="M126.8 687.1L136.8 687.1L136.8 694.3L126.8 694.3Z" stroke="#b0b0b0" stroke-width="2" fill="none"/>
<path  d="M87.5 700.8L87.5 782.6M94.8 700.7L94.8 780.3M103.7 702.6L103.7 784M113.6 703.6L113.6 783.9M123.3 702.2L123.3 780.9M134 701.4L134 780.4M141.9 699.1L141.9 781.4M66.1 730.3L66.1 780.4M75.9 732.2L75.9 781.5M85 731.2L85 784.9M95.6 731.1L95.6 784.1" stroke="#d9461a" stroke-width="1.8" fill="none"/>
<path  d="M85 706.6L142 706.6M85 722.5L142 722.5M85 737.5L142 737.5M85 754L142 754M85 769.7L142 769.7M65 736.3L100 736.3M65 751.9L100 751.9M65 765.2L100 765.2" stroke="#d9461a" stroke-width="1.6" fill="none"/>
<path  d="M86.9 706.6L101.3 706.6L101.3 722.5L86.9 722.5ZM110.3 706.6L119.9 706.6L119.9 722.5L110.3 722.5ZM135 706.6L142 706.6L142 722.5L135 722.5ZM107.5 722.5L121.3 722.5L121.3 737.5L107.5 737.5ZM136.8 722.5L142 722.5L142 737.5L136.8 737.5ZM86.7 737.5L95.8 737.5L95.8 754L86.7 754ZM95.8 737.5L111.2 737.5L111.2 754L95.8 754ZM132 754L141.2 754L141.2 769.7L132 769.7ZM89.1 765.2L100 765.2L100 777.6L89.1 777.6Z" stroke="#ffffff" stroke-width="2.6" fill="none"/>
<path  d="M101.3 706.6L110.3 706.6L110.3 722.5L101.3 722.5ZM121.3 722.5L136.8 722.5L136.8 737.5L121.3 737.5ZM120 737.5L135.5 737.5L135.5 754L120 754ZM135.5 737.5L142 737.5L142 754L135.5 754ZM117 769.7L125.4 769.7L125.4 780L117 780ZM125.4 769.7L134.2 769.7L134.2 780L125.4 780ZM84.2 736.3L92 736.3L92 751.9L84.2 751.9Z" stroke="#ffffff" stroke-width="3" fill="none"/>
<path  d="M119.9 706.6L135 706.6L135 722.5L119.9 722.5ZM86.8 722.5L98.4 722.5L98.4 737.5L86.8 737.5ZM98.4 722.5L107.5 722.5L107.5 737.5L98.4 737.5ZM87.3 754L103.2 754L103.2 769.7L87.3 769.7ZM115.6 754L132 754L132 769.7L115.6 769.7ZM103.4 769.7L117 769.7L117 780L103.4 780Z" stroke="#ffffff" stroke-width="3.4" fill="none"/>
<path  d="M67 736.3L75.4 736.3L75.4 751.9L67 751.9ZM75.4 736.3L84.2 736.3L84.2 751.9L75.4 751.9Z" stroke="#ffe000" stroke-width="3" fill="none"/>
<path  d="M91 751.9L100 751.9L100 765.2L91 765.2Z" stroke="#ff44ff" stroke-width="3" fill="none"/>
<path  d="M76.1 765.2L89.1 765.2L89.1 777.6L76.1 777.6Z" stroke="#ffe000" stroke-width="3.4" fill="none"/>
<path d="M65 708h35v26h-35Z" fill="#d06a10"/>
<path  d="M145.4 708L145.4 770" stroke="#1f9a3a" stroke-width="1.6" fill="none"/>
<path  d="M112 689L118 689L118 694L112 694Z" stroke="#ffffff" stroke-width="1.8" fill="none"/>
<path  d="M106 680L112 686M118 686L123 680" stroke="#00f000" stroke-width="1.6" fill="none"/>
<g transform="translate(69 870) rotate(-6.4)">
<path  d="M-105 -100L-105 88M-76 -100L-76 88M-47 -100L-47 88M-18 -100L-18 88M11 -100L11 88M40 -100L40 88M69 -100L69 88M98 -100L98 88M127 -100L127 88M-113 -92L139 -92M-113 -73L139 -73M-113 -54L139 -54M-113 -35L139 -35M-113 -16L139 -16M-113 3L139 3M-113 22L139 22M-113 41L139 41M-113 60L139 60M-113 79L139 79" stroke="#d9461a" stroke-width="2" fill="none"/>
</g>
<g transform="translate(145 905) rotate(-6.4)">
<path  d="M-84.1 -37.6L-84.1 36.2M-76.6 -38.4L-76.6 38.5M-69.3 -39.5L-69.3 41.7M-60 -38.1L-60 40.2M-51.2 -37.1L-51.2 38.9M-44.2 -40.1L-44.2 37M-35.7 -41.8L-35.7 40.6M-25.3 -39.9L-25.3 39.8M-15.5 -41.8L-15.5 37.2M-5.5 -37.8L-5.5 37.5M4.8 -39.6L4.8 41.1M15.3 -39.5L15.3 37.2M22.4 -39.2L22.4 40.4M30.5 -36.4L30.5 36M38.2 -40.2L38.2 36M46.1 -37.6L46.1 40.3M57 -36.1L57 36.7M67.8 -41.8L67.8 36.9M76.1 -39.1L76.1 37.9" stroke="#d9461a" stroke-width="1.8" fill="none"/>
<path  d="M-85 -35L80 -35M-85 -22.5L80 -22.5M-85 -6.9L80 -6.9M-85 8.5L80 8.5M-85 25.4L80 25.4" stroke="#d9461a" stroke-width="1.6" fill="none"/>
<path  d="M-84.8 -35L-77 -35L-77 -22.5L-84.8 -22.5ZM-77 -35L-66.6 -35L-66.6 -22.5L-77 -22.5ZM-51.2 -35L-43.2 -35L-43.2 -22.5L-51.2 -22.5ZM-43.2 -35L-31.7 -35L-31.7 -22.5L-43.2 -22.5ZM6.9 -35L22.9 -35L22.9 -22.5L6.9 -22.5ZM33.9 -35L42.6 -35L42.6 -22.5L33.9 -22.5ZM-6.9 -22.5L4 -22.5L4 -6.9L-6.9 -6.9ZM23.2 -22.5L38.8 -22.5L38.8 -6.9L23.2 -6.9ZM38.8 -22.5L48.3 -22.5L48.3 -6.9L38.8 -6.9ZM71.8 -22.5L80 -22.5L80 -6.9L71.8 -6.9ZM58.2 -6.9L73.1 -6.9L73.1 8.5L58.2 8.5ZM-46.6 8.5L-30.9 8.5L-30.9 25.4L-46.6 25.4ZM-7.6 8.5L4.1 8.5L4.1 25.4L-7.6 25.4ZM4.1 8.5L20.1 8.5L20.1 25.4L4.1 25.4ZM20.1 8.5L36.9 8.5L36.9 25.4L20.1 25.4ZM-83.6 25.4L-71.5 25.4L-71.5 36L-83.6 36ZM-54.1 25.4L-37.6 25.4L-37.6 36L-54.1 36ZM30.6 25.4L37.8 25.4L37.8 36L30.6 36ZM45.4 25.4L61.5 25.4L61.5 36L45.4 36Z" stroke="#ffffff" stroke-width="2.6" fill="none"/>
<path  d="M-66.6 -35L-51.2 -35L-51.2 -22.5L-66.6 -22.5ZM-9.1 -35L6.9 -35L6.9 -22.5L-9.1 -22.5ZM22.9 -35L33.9 -35L33.9 -22.5L22.9 -22.5ZM42.6 -35L56.5 -35L56.5 -22.5L42.6 -22.5ZM56.5 -35L64.5 -35L64.5 -22.5L56.5 -22.5ZM-68.5 -22.5L-57.1 -22.5L-57.1 -6.9L-68.5 -6.9ZM-47.3 -22.5L-32.1 -22.5L-32.1 -6.9L-47.3 -6.9ZM-16.2 -22.5L-6.9 -22.5L-6.9 -6.9L-16.2 -6.9ZM4 -22.5L14.4 -22.5L14.4 -6.9L4 -6.9ZM14.4 -22.5L23.2 -22.5L23.2 -6.9L14.4 -6.9ZM58.6 -22.5L71.8 -22.5L71.8 -6.9L58.6 -6.9ZM-19.2 -6.9L-7.2 -6.9L-7.2 8.5L-19.2 8.5ZM27.7 -6.9L41.3 -6.9L41.3 8.5L27.7 8.5ZM41.3 -6.9L58.2 -6.9L58.2 8.5L41.3 8.5ZM73.1 -6.9L80 -6.9L80 8.5L73.1 8.5ZM-83.7 8.5L-72.9 8.5L-72.9 25.4L-83.7 25.4ZM-72.9 8.5L-59.2 8.5L-59.2 25.4L-72.9 25.4ZM-18.8 8.5L-7.6 8.5L-7.6 25.4L-18.8 25.4ZM69.3 8.5L77.5 8.5L77.5 25.4L69.3 25.4ZM-71.5 25.4L-61.1 25.4L-61.1 36L-71.5 36ZM-37.6 25.4L-29.1 25.4L-29.1 36L-37.6 36ZM-29.1 25.4L-16.2 25.4L-16.2 36L-29.1 36ZM-7.6 25.4L7.4 25.4L7.4 36L-7.6 36Z" stroke="#ffffff" stroke-width="3" fill="none"/>
<path  d="M-31.7 -35L-23.3 -35L-23.3 -22.5L-31.7 -22.5ZM-23.3 -35L-9.1 -35L-9.1 -22.5L-23.3 -22.5ZM64.5 -35L80 -35L80 -22.5L64.5 -22.5ZM-84.7 -22.5L-68.5 -22.5L-68.5 -6.9L-84.7 -6.9ZM-32.1 -22.5L-16.2 -22.5L-16.2 -6.9L-32.1 -6.9ZM-82.7 -6.9L-67.6 -6.9L-67.6 8.5L-82.7 8.5ZM-7.2 -6.9L2.9 -6.9L2.9 8.5L-7.2 8.5ZM15.9 -6.9L27.7 -6.9L27.7 8.5L15.9 8.5ZM36.9 8.5L52.3 8.5L52.3 25.4L36.9 25.4ZM52.3 8.5L60.7 8.5L60.7 25.4L52.3 25.4ZM60.7 8.5L69.3 8.5L69.3 25.4L60.7 25.4ZM-16.2 25.4L-7.6 25.4L-7.6 36L-16.2 36ZM7.4 25.4L15.6 25.4L15.6 36L7.4 36ZM15.6 25.4L30.6 25.4L30.6 36L15.6 36ZM37.8 25.4L45.4 25.4L45.4 36L37.8 36ZM61.5 25.4L72.8 25.4L72.8 36L61.5 36Z" stroke="#ffffff" stroke-width="3.4" fill="none"/>
<path  d="M2.9 0.8L15.9 0.8M72.8 30.7L80 30.7" stroke="#ffe000" stroke-width="2" fill="none"/>
<path d="M-82.8 -28.6h2.8v4.2h-2.8ZM-29.4 -31h4v3.5h-4ZM15.1 -29.3h3.9v4.4h-3.9ZM36 -32.5h3.5v3.5h-3.5ZM-78.9 -15.8h3.1v2.6h-3.1ZM8 -15.2h4.5v3.7h-4.5ZM62.9 16.2h3.4v2.8h-3.4ZM-14.1 29.7h4.1v2.6h-4.1Z" fill="#c8c8c8"/>
<path d="M-75.5 -33.5h5.9v3.8h-5.9ZM-67 -21h5.5v4.8h-5.5ZM-5.4 -21h6v4.1h-6ZM15.9 -21h3.6v2.7h-3.6ZM48.3 -13.8h5.7v4.1h-5.7ZM-17.3 10h3.4v3.5h-3.4ZM-70 26.9h3.9v3.1h-3.9ZM-52.6 26.9h8.5v2.9h-8.5ZM32.1 26.9h1.6v2.1h-1.6ZM46.9 26.9h9.9v1.7h-9.9ZM-71.1 -24.4h2.1v3.4h-2.1ZM46 9.1h3.3v3.2h-3.3ZM28.6 -24.7h3.5v3.8h-3.5ZM-40.6 29.1h5v3.4h-5ZM-3.8 23.7h2.4v3.5h-2.4ZM-70.6 19.9h3.1v3.8h-3.1ZM-70.7 25.3h2.6v3.2h-2.6ZM-54.4 -26.2h3.9v3.7h-3.9ZM-35.2 35.5h3.9v0.5h-3.9ZM56 -4.1h3.2v2.9h-3.2ZM-15.6 -20.9h2.6v3h-2.6ZM-65.5 24.3h4.1v3.9h-4.1ZM78.7 12.8h1.3v3.9h-1.3Z" fill="#ffe000"/>
<path d="M-65.1 -33.5h5.1v3.8h-5.1ZM-41.7 -33.5h6.1v3h-6.1ZM-57.2 3.3h14.5v4.4h-14.5ZM-17.7 -5.4h4.1v3.9h-4.1ZM29.2 -5.4h5.4v4.7h-5.4ZM21.6 10h9v5.3h-9ZM-61.1 29.5h4.3v4.9h-4.3ZM8.9 26.9h3.6v2h-3.6ZM19 -27.9h2.3v2.4h-2.3ZM-81 12.5h2.5v3.8h-2.5ZM10.7 34.5h2.9v1.5h-2.9ZM4.3 17.3h3.1v3.7h-3.1ZM6.4 -6.8h4.7v3.8h-4.7ZM73.4 34.7h3.5v1.3h-3.5ZM-30.5 5.6h2.9v2.1h-2.9ZM-52.4 33h3.1v3h-3.1Z" fill="#f0a020"/>
<path d="M-18.1 -32.1h3.9v3.4h-3.9ZM26.7 -32.6h2.6v3.5h-2.6ZM-57.1 -21.1h4.6v3.2h-4.6ZM61.8 -13.6h3.3v3.8h-3.3ZM-67.6 1.9h9.7v3.4h-9.7ZM-42.2 -4.7h9v3.7h-9ZM-27.4 2.5h3.4v4.1h-3.4ZM-59.2 10.7h11.9v4.7h-11.9ZM-44.4 15h4.3v4.3h-4.3ZM-30.9 15.2h5.9v4.9h-5.9ZM8 17.9h3v2.8h-3ZM54.5 14.1h3.9v4.5h-3.9ZM65.9 28.5h3.8v3.9h-3.8ZM64.4 20.4h4.4v3.2h-4.4ZM-60.7 -32.5h3.5v3h-3.5ZM9.6 29.3h3.3v3.9h-3.3ZM-39.1 -9.3h4.8v4h-4.8ZM-18.8 32.4h4.9v2.1h-4.9ZM56.6 -17.3h2.1v3h-2.1Z" fill="#ffffff"/>
<path d="M58.5 -29.4h3.5v3.4h-3.5ZM69.9 -28.8h4.4v3.7h-4.4ZM-44 -14.7h3.4v3.2h-3.4ZM-28 -14.9h4.3v4.3h-4.3ZM-77.6 -2.6h3v3.9h-3ZM-3.3 0.5h3.1v4.2h-3.1ZM18.7 -0.9h4.4v3.8h-4.4ZM-80.9 13.4h4v2.9h-4ZM45.9 14.5h2.7v2.6h-2.7ZM71.4 19.2h3.5v4.4h-3.5ZM-78.7 29.9h3.3v3.2h-3.3ZM0.7 28.3h3.6v4.4h-3.6ZM19.5 28.3h4.1v2.8h-4.1ZM-25.9 31.8h3.1v4h-3.1ZM-42.1 -24.2h3.4v3.6h-3.4ZM-43.7 29.7h2.5v4h-2.5ZM-35.5 33.8h4.1v2.2h-4.1Z" fill="#b0b0b0"/>
<path d="M-13.3 -7.9h3.3v3h-3.3ZM-32.5 18.5h4.4v2.7h-4.4ZM9.6 3.3h4.6v4h-4.6ZM15 -4.7h2.2v2.9h-2.2ZM-24.2 -33.4h2.6v3.3h-2.6ZM-14.6 5.2h3.4v3.7h-3.4ZM53 22.4h2.2v4h-2.2ZM59.6 -30.2h3v3.9h-3ZM50.8 33.3h2.5v2.7h-2.5ZM-51.2 -27.1h3.4v2.7h-3.4Z" fill="#ff44ff"/>
<path d="M-10.5 27.5h4v3h-4ZM30.8 31.6h3.2v3.3h-3.2ZM-7.5 31.2h2.3v3h-2.3ZM75.7 -12.3h4.3v2.7h-4.3ZM43.4 31.5h3.4v3.9h-3.4Z" fill="#00f000"/>
<path d="M9 16.4h3v3h-3ZM-33.4 -31.6h2.7v2.9h-2.7Z" fill="#18d8f0"/>
</g>
<g transform="translate(134 892) rotate(-6.4)">
<path d="M-15 -12h30v24h-30Z" fill="#d06a10"/>
</g>
<path  d="M150 780L200 840L225 870L228 940" stroke="#ffffff" stroke-width="2.5" fill="none"/>
<path  d="M160 785L210 845L232 872L236 945" stroke="#ffffff" stroke-width="1.5" fill="none"/>
<path  d="M164 770L219 872L224 950" stroke="#f0a020" stroke-width="1.8" fill="none"/>
<path  d="M200 935L216 935L216 945L200 945Z" stroke="#ffffff" stroke-width="2.2" fill="none"/>
<path  d="M156.8 798.9L164.4 798.9L164.4 802L156.8 802ZM152.6 775.6L161.3 775.6L161.3 783.5L152.6 783.5ZM189.8 798.8L196.9 798.8L196.9 802L189.8 802ZM161.9 776L168.8 776L168.8 782.2L161.9 782.2ZM149.1 775.3L154.7 775.3L154.7 780.5L149.1 780.5ZM185.3 774.2L192.5 774.2L192.5 781L185.3 781ZM168 793L173.5 793L173.5 798.7L168 798.7ZM199.1 793.6L200 793.6L200 797.9L199.1 797.9ZM162.5 786.3L171.9 786.3L171.9 792.5L162.5 792.5Z" stroke="#ffffff" stroke-width="2" fill="none"/>
<path  d="M172 777.4L181.9 777.4L181.9 785L172 785ZM169.9 801.7L178.6 801.7L178.6 802L169.9 802ZM196.1 785.3L200 785.3L200 792.6L196.1 792.6ZM158.7 778.1L164.3 778.1L164.3 783.5L158.7 783.5ZM199.4 790.6L200 790.6L200 794.7L199.4 794.7Z" stroke="#b0b0b0" stroke-width="2" fill="none"/>
<path  d="M199.6 773.5L200 773.5L200 777.6L199.6 777.6ZM151.9 779.8L160.7 779.8L160.7 785.1L151.9 785.1ZM145.1 781.2L154.3 781.2L154.3 788.2L145.1 788.2Z" stroke="#ffe000" stroke-width="2" fill="none"/>
<path  d="M154.4 778.6L160.7 778.6L160.7 783.3L154.4 783.3Z" stroke="#ff44ff" stroke-width="2" fill="none"/>
<path  d="M105 818L113 818L113 823L105 823Z" stroke="#ff44ff" stroke-width="1.5" fill="none"/>
<path  d="M100 862L120 862L120 870L100 870Z" stroke="#f0a020" stroke-width="1.5" fill="none"/>
<path  d="M64 950L70 987M66.5 987L73.5 987L73.5 993.5L66.5 993.5ZM94 950L100 985M96.5 985L103.5 985L103.5 991.5L96.5 991.5ZM124 950L130 983M126.5 983L133.5 983L133.5 989.5L126.5 989.5ZM149 950L155 981M151.5 981L158.5 981L158.5 987.5L151.5 987.5ZM179 950L185 978M181.5 978L188.5 978L188.5 984.5L181.5 984.5ZM204 950L210 975M206.5 975L213.5 975L213.5 981.5L206.5 981.5ZM222 950L228 971M224.5 971L231.5 971L231.5 977.5L224.5 977.5ZM200 769L221 766M221.5 763L228.5 763L228.5 769.5L221.5 769.5ZM203 790L224 787M224.5 784L231.5 784L231.5 790.5L224.5 790.5ZM205 809L226 806M226.5 803L233.5 803L233.5 809.5L226.5 809.5ZM207 828L228 825M228.5 822L235.5 822L235.5 828.5L228.5 828.5ZM210 849L231 846M231.5 843L238.5 843L238.5 849.5L231.5 849.5ZM212 871L233 868M233.5 865L240.5 865L240.5 871.5L233.5 871.5Z" stroke="#1f9a3a" stroke-width="1.5" fill="none"/>
<path d="M163 801.8h4.4v0.2h-4.4ZM145.8 786.9h5v4.2h-5ZM157.3 782.9h4.6v3h-4.6ZM157.6 796.9h3v3h-3Z" fill="#b0b0b0"/>
<path d="M141.6 773.6h4.1v3.2h-4.1ZM148.4 799.8h5.6v2.2h-5.6ZM165.9 799.9h4.1v2.1h-4.1ZM164.3 778.9h3v3.4h-3ZM165 797.3h2.3v2.2h-2.3ZM155.8 790.9h4.7v2.8h-4.7ZM195.5 788.9h2.3v3.8h-2.3ZM172.6 784.9h5.6v4h-5.6ZM147 796.2h2.9v2.5h-2.9ZM175.9 773.3h2.5v3.9h-2.5Z" fill="#ffffff"/>
<path d="M190.1 789.7h3.9v2.1h-3.9ZM157.1 773.2h4.1v4.2h-4.1ZM164.4 796.8h3.8v2.5h-3.8Z" fill="#ff44ff"/>
<path d="M147.6 774h4.6v2.1h-4.6Z" fill="#ffe000"/>
<path  d="M817 489.6L817 1001" stroke="#30d030" stroke-width="2.2" fill="none"/>
<path  d="M849 485L849 496M876 485L876 496M904.5 485L904.5 496M933 485L933 496M964 485L964 496M993 485L993 496M1022 485L1022 496M1050 485L1050 496M1079 485L1079 496" stroke="#1f9a3a" stroke-width="1.6" fill="none"/>
<path  d="M846 492L846 521M854.5 492L854.5 521M863.2 492L863.2 521M872.3 492L872.3 521M880.9 492L880.9 521M888.8 492L888.8 521M895.6 492L895.6 521M903.2 492L903.2 521M911.6 492L911.6 521M920.6 492L920.6 521M930 492L930 521M937.8 492L937.8 521M946.5 492L946.5 521M953.8 492L953.8 521M961.4 492L961.4 521M968 492L968 521M976.1 492L976.1 521M983.6 492L983.6 521M991.4 492L991.4 521M999.2 492L999.2 521M1007.5 492L1007.5 521M1016.7 492L1016.7 521M1025.8 492L1025.8 521M1033.2 492L1033.2 521M1042.1 492L1042.1 521M1049.6 492L1049.6 521M1057.5 492L1057.5 521M1066.2 492L1066.2 521M1074.9 492L1074.9 521M1081.9 492L1081.9 521M1088.7 492L1088.7 521M1095.8 492L1095.8 521M1105 492L1105 521M1111.7 492L1111.7 521M1118.6 492L1118.6 521M1126.1 492L1126.1 521" stroke="#d9461a" stroke-width="1.8" fill="none"/>
<path  d="M820 585L820 970M848 585L848 970M876 585L876 970M906 585L906 970M936 585L936 970M965 585L965 970M994 585L994 970M1023 585L1023 970M1052 585L1052 970M1080 585L1080 970M1108 585L1108 970M820 608.7L1130 608.7M820 628.3L1130 628.3M820 645.3L1130 645.3M820 664L1130 664M820 682.8L1130 682.8M820 700L1130 700M820 720L1130 720M820 740L1130 740M820 760L1130 760M820 778L1130 778M820 800L1130 800M820 820L1130 820M820 840L1130 840M820 860L1130 860M820 880L1130 880M1085.7 520L1085.7 640M1110 520L1110 640" stroke="#d9461a" stroke-width="2" fill="none"/>
<path  d="M843.8 517.3L843.8 592.9M851.4 515.2L851.4 596.3M859.9 518.6L859.9 596M867.8 518.8L867.8 593M875.1 516.5L875.1 592.9M885.2 515.9L885.2 592.7M893.3 515.9L893.3 598M904.2 513.1L904.2 594.4M912 514.3L912 596.4M919.4 517.1L919.4 592.8M926.6 514.7L926.6 593.2M935.9 515.6L935.9 593.4M943.3 514.8L943.3 597.1M951.2 516.2L951.2 596.6M961.8 518.3L961.8 595.4M970.8 513.9L970.8 592.5M979.7 517.6L979.7 594.6M990.6 513.5L990.6 592.1M998.6 517L998.6 594.4M1008.2 516.5L1008.2 594M1016.1 515.2L1016.1 595.1M1025.3 517.2L1025.3 594.8M1035.2 516.2L1035.2 592.1M1044.9 516.2L1044.9 595.6M1052.7 506.4L1052.7 606.5M1063.5 510.4L1063.5 604.3M1073.5 510.4L1073.5 604.7M1081.9 508.1L1081.9 609.5M1090.7 508.1L1090.7 604.3M1098.9 507.7L1098.9 604.6M1107.2 511.7L1107.2 608.3" stroke="#d9461a" stroke-width="1.8" fill="none"/>
<path  d="M840 520.2L1052 520.2M840 534L1052 534M840 545.5L1052 545.5M840 559.8L1052 559.8M840 572.3L1052 572.3M1052 513.4L1116 513.4M1052 526.5L1116 526.5M1052 539.8L1116 539.8M1052 556.3L1116 556.3M1052 569.4L1116 569.4M1052 582.5L1116 582.5M1052 595L1116 595" stroke="#d9461a" stroke-width="1.6" fill="none"/>
<path  d="M842.9 527.1L851.5 527.1M1001 539.8L1009.7 539.8M1009.7 539.8L1019 539.8M933.2 566.1L944.4 566.1M956.4 580.4L970 580.4M1063.1 533.1L1078.7 533.1M1068.5 588.7L1084.6 588.7" stroke="#f0a020" stroke-width="2" fill="none"/>
<path  d="M866.1 520.2L880 520.2L880 534L866.1 534ZM912.3 520.2L925.8 520.2L925.8 534L912.3 534ZM1026.1 520.2L1041.4 520.2L1041.4 534L1026.1 534ZM842.5 534L854 534L854 545.5L842.5 545.5ZM903.6 534L918.5 534L918.5 545.5L903.6 545.5ZM855.5 545.5L872.3 545.5L872.3 559.8L855.5 559.8ZM851.3 559.8L859.5 559.8L859.5 572.3L851.3 572.3ZM925.3 559.8L933.2 559.8L933.2 572.3L925.3 572.3ZM889.5 572.3L906.2 572.3L906.2 588.4L889.5 588.4ZM981.5 572.3L995.4 572.3L995.4 588.4L981.5 588.4ZM995.4 572.3L1003.8 572.3L1003.8 588.4L995.4 588.4ZM1020.7 572.3L1032.2 572.3L1032.2 588.4L1020.7 588.4ZM1053.7 513.4L1066.6 513.4L1066.6 526.5L1053.7 526.5ZM1076 539.8L1083.4 539.8L1083.4 556.3L1076 556.3ZM1086.5 569.4L1102.9 569.4L1102.9 582.5L1086.5 582.5ZM1105.4 582.5L1116 582.5L1116 595L1105.4 595ZM1054.4 595L1069.8 595L1069.8 604L1054.4 604Z" stroke="#ffffff" stroke-width="2.6" fill="none"/>
<path  d="M880 520.2L896.8 520.2L896.8 534L880 534ZM896.8 520.2L912.3 520.2L912.3 534L896.8 534ZM964.5 520.2L977 520.2L977 534L964.5 534ZM925.9 534L936.9 534L936.9 545.5L925.9 545.5ZM842 572.3L850.7 572.3L850.7 588.4L842 588.4ZM906.2 572.3L919.1 572.3L919.1 588.4L906.2 588.4ZM1096.3 513.4L1112.8 513.4L1112.8 526.5L1096.3 526.5ZM1102.4 526.5L1111.8 526.5L1111.8 539.8L1102.4 539.8ZM1083.4 539.8L1096.9 539.8L1096.9 556.3L1083.4 556.3ZM1052.1 582.5L1068.5 582.5L1068.5 595L1052.1 595Z" stroke="#ffe000" stroke-width="3.4" fill="none"/>
<path  d="M925.8 520.2L935.1 520.2L935.1 534L925.8 534ZM973.6 534L986.2 534L986.2 545.5L973.6 545.5Z" stroke="#f0a020" stroke-width="2.6" fill="none"/>
<path  d="M943.8 520.2L951.1 520.2L951.1 534L943.8 534ZM951.1 520.2L964.5 520.2L964.5 534L951.1 534ZM962.5 545.5L973.8 545.5L973.8 559.8L962.5 559.8ZM987.9 545.5L995.1 545.5L995.1 559.8L987.9 559.8ZM1002.9 545.5L1016.8 545.5L1016.8 559.8L1002.9 559.8ZM899.1 559.8L911.5 559.8L911.5 572.3L899.1 572.3ZM1066.6 513.4L1076.6 513.4L1076.6 526.5L1066.6 526.5ZM1109.7 539.8L1116 539.8L1116 556.3L1109.7 556.3ZM1098.1 556.3L1113.8 556.3L1113.8 569.4L1098.1 569.4Z" stroke="#ffffff" stroke-width="3.4" fill="none"/>
<path  d="M986.1 527.1L1000.9 527.1M861.2 539.8L877.4 539.8M1037.3 539.8L1048.8 539.8" stroke="#ffe000" stroke-width="2" fill="none"/>
<path  d="M1041.4 520.2L1052 520.2L1052 534L1041.4 534ZM936.9 534L953.3 534L953.3 545.5L936.9 545.5ZM963.8 534L973.6 534L973.6 545.5L963.8 545.5ZM1016.2 559.8L1033.1 559.8L1033.1 572.3L1016.2 572.3ZM1003.8 572.3L1020.7 572.3L1020.7 588.4L1003.8 588.4Z" stroke="#ff44ff" stroke-width="2.6" fill="none"/>
<path  d="M877.4 534L894.3 534L894.3 545.5L877.4 545.5ZM986.2 534L1001 534L1001 545.5L986.2 545.5ZM914.9 545.5L924 545.5L924 559.8L914.9 559.8ZM870.9 559.8L886 559.8L886 572.3L870.9 572.3ZM1053 569.4L1066 569.4L1066 582.5L1053 582.5Z" stroke="#ff44ff" stroke-width="3" fill="none"/>
<path  d="M894.3 534L903.6 534L903.6 545.5L894.3 545.5ZM1019 534L1028.7 534L1028.7 545.5L1019 545.5ZM840.7 545.5L855.5 545.5L855.5 559.8L840.7 559.8ZM919.1 572.3L930.1 572.3L930.1 588.4L919.1 588.4Z" stroke="#f0a020" stroke-width="3.4" fill="none"/>
<path  d="M918.5 534L925.9 534L925.9 545.5L918.5 545.5ZM924 545.5L937.8 545.5L937.8 559.8L924 559.8ZM1032.9 545.5L1041.1 545.5L1041.1 559.8L1032.9 559.8ZM842.8 559.8L851.3 559.8L851.3 572.3L842.8 572.3ZM911.5 559.8L925.3 559.8L925.3 572.3L911.5 572.3ZM943.7 572.3L956.4 572.3L956.4 588.4L943.7 588.4ZM970 572.3L981.5 572.3L981.5 588.4L970 588.4ZM1052.1 539.8L1063.5 539.8L1063.5 556.3L1052.1 556.3ZM1096.9 539.8L1109.7 539.8L1109.7 556.3L1096.9 556.3ZM1053.2 556.3L1063.1 556.3L1063.1 569.4L1053.2 569.4ZM1090.7 556.3L1098.1 556.3L1098.1 569.4L1090.7 569.4ZM1069.8 595L1082.2 595L1082.2 604L1069.8 604Z" stroke="#ffe000" stroke-width="3" fill="none"/>
<path  d="M1028.7 534L1037.3 534L1037.3 545.5L1028.7 545.5ZM872.3 545.5L881.2 545.5L881.2 559.8L872.3 559.8ZM881.2 545.5L890.9 545.5L890.9 559.8L881.2 559.8ZM995.1 545.5L1002.9 545.5L1002.9 559.8L995.1 559.8ZM886 559.8L899.1 559.8L899.1 572.3L886 572.3ZM944.4 559.8L957.3 559.8L957.3 572.3L944.4 572.3ZM966.9 559.8L982 559.8L982 572.3L966.9 572.3ZM1033.1 559.8L1049 559.8L1049 572.3L1033.1 572.3ZM1032.2 572.3L1046.6 572.3L1046.6 588.4L1032.2 588.4ZM1063.5 539.8L1076 539.8L1076 556.3L1063.5 556.3Z" stroke="#ffffff" stroke-width="3" fill="none"/>
<path  d="M890.9 545.5L900.1 545.5L900.1 559.8L890.9 559.8ZM950.4 545.5L962.5 545.5L962.5 559.8L950.4 559.8ZM990.7 559.8L1002.5 559.8L1002.5 572.3L990.7 572.3ZM1002.5 559.8L1016.2 559.8L1016.2 572.3L1002.5 572.3ZM1063.1 556.3L1077.9 556.3L1077.9 569.4L1063.1 569.4ZM1078.9 569.4L1086.5 569.4L1086.5 582.5L1078.9 582.5Z" stroke="#f0a020" stroke-width="3" fill="none"/>
<path  d="M937.8 545.5L950.4 545.5L950.4 559.8L937.8 559.8ZM982 559.8L990.7 559.8L990.7 572.3L982 572.3ZM867.5 572.3L878.5 572.3L878.5 588.4L867.5 588.4ZM878.5 572.3L889.5 572.3L889.5 588.4L878.5 588.4ZM930.1 572.3L943.7 572.3L943.7 588.4L930.1 588.4ZM1046.6 572.3L1052 572.3L1052 588.4L1046.6 588.4ZM1084 513.4L1096.3 513.4L1096.3 526.5L1084 526.5ZM1095.8 582.5L1105.4 582.5L1105.4 595L1095.8 595Z" stroke="#ffe000" stroke-width="2.6" fill="none"/>
<path d="M851.5 528.5h13.5v3.9h-13.5ZM935.1 521.6h8.3v5.4h-8.3ZM940.5 539.4h2.9v4.4h-2.9ZM967.3 539.1h3.1v4.1h-3.1ZM1016.8 551.2h12.6v5.2h-12.6ZM845.1 562.5h2.8v3h-2.8ZM859.5 560.5h10v4.2h-10ZM873.1 564.1h3.8v4.1h-3.8ZM927.3 565.6h3.1v3.1h-3.1ZM957.3 564.4h5v6h-5ZM984.1 564.7h3.1v4.1h-3.1ZM844.2 575.2h2.8v3.9h-2.8ZM850.7 583.1h9.6v3.2h-9.6ZM869.5 581.3h3.3v2.5h-3.3ZM881.7 579.7h2.7v3.4h-2.7ZM861.7 572.4h3.8v2.2h-3.8ZM888 570.4h4.9v3.5h-4.9ZM921.8 544.3h2.5v3.1h-2.5ZM860.8 539.6h4.4v3.1h-4.4ZM932.4 544.3h3.6v3.4h-3.6ZM864.9 550.9h2.8v3.7h-2.8ZM865.2 523.6h4.6v2.5h-4.6ZM894.8 526.5h4.1v3.3h-4.1ZM949.2 540h4.5v2.6h-4.5ZM1024.7 575.6h3.8v3.2h-3.8ZM876.7 537.5h4.6v2.8h-4.6ZM1050.1 520.8h1.9v2.7h-1.9ZM854.6 556.9h4.3v3.9h-4.3ZM944.6 551.6h3.7v2.4h-3.7ZM859.6 530.2h4.5v2.6h-4.5ZM991.5 578.3h2.2v2.6h-2.2ZM962 573.9h4.1v3.3h-4.1ZM1001.1 549.2h4.8v2.6h-4.8ZM999 569.8h3v3.3h-3ZM975.2 544h2.5v2.5h-2.5ZM972.8 550h2.6v3.4h-2.6ZM943.5 533.5h4.8v2.2h-4.8ZM1043.2 526.5h4.2v2.6h-4.2ZM985.1 549h2.1v3.9h-2.1ZM921.5 577.6h2.8v2.7h-2.8ZM853.5 567.9h4.1v3.5h-4.1ZM968.5 520.2h3.3v3.2h-3.3ZM952 538.8h5v3.5h-5ZM1003.5 531.8h3.2v3.8h-3.2ZM994.6 534h4v2.9h-4ZM939.7 522.1h4.5v3.6h-4.5ZM998.5 543.4h4.3v3h-4.3ZM929.3 550.6h3.6v3h-3.6ZM889.9 567.9h2.8v3.4h-2.8ZM1048.9 571.2h3.1v3.9h-3.1ZM930 534.7h4v2.9h-4ZM1013.5 541.3h4.9v2.3h-4.9ZM1033.7 591.9h3.5v0.1h-3.5ZM869.1 566h2.8v3.3h-2.8ZM955.4 577.9h2.1v4h-2.1ZM874.9 564.9h3.5v2.4h-3.5ZM1029.1 566.4h4v2.6h-4ZM858.6 543.1h4.6v3.8h-4.6ZM1088.4 515.8h4.3v2.7h-4.3ZM1100.3 516.5h3.9v4h-3.9ZM1111.8 548.9h4.4v2.9h-4.4ZM1082.2 598.4h9.2v4.7h-9.2ZM1055.7 585.4h3v2.8h-3ZM1072.8 541.1h4.8v3.6h-4.8ZM1058.5 569.7h3.7v3h-3.7ZM1095.3 549.9h3.1v2.3h-3.1ZM1107.4 557.6h2.9v2.2h-2.9ZM1106.9 558.3h3.3v3.3h-3.3ZM1085.4 529.3h4.8v2.3h-4.8ZM1112.3 599.9h2.2v3.3h-2.2ZM1114.3 588.9h1.7v3.7h-1.7ZM1053.1 570.4h2.4v2.1h-2.4ZM1105.2 573.9h2.9v2.5h-2.9ZM1108.2 560.9h4.9v2.8h-4.9ZM1079.8 523.8h2.6v2.6h-2.6ZM1061.5 591.6h4.8v2.3h-4.8ZM1066.6 539.7h3.1v2h-3.1ZM1052.2 533.5h3.4v2.4h-3.4Z" fill="#ffffff"/>
<path d="M870.6 525.2h3.1v3.9h-3.1ZM885.3 527.2h2.9v4.3h-2.9ZM904.5 525.8h3.9v4.2h-3.9ZM919 524.2h3.3v4.4h-3.3ZM956.9 526.7h3.8v4.2h-3.8ZM920.5 537.7h3.7v4h-3.7ZM901.6 563.7h3.6v2.9h-3.6ZM993.4 566.2h3.3v3.3h-3.3ZM1007.7 564.1h2.9v4.4h-2.9ZM1024.8 565h4.4v4.2h-4.4ZM908.9 577.6h4.3v3.4h-4.3ZM945.9 576.4h4v4.4h-4ZM1059 588.7h4.4v4.3h-4.4Z" fill="#c8c8c8"/>
<path d="M927.3 521.7h3.3v3.3h-3.3ZM854 534.3h5.9v5h-5.9ZM975.1 535.5h3.7v3.1h-3.7ZM1030.2 535.5h3v1.9h-3ZM973.8 547.4h11.1v5h-11.1ZM1034.6 561.3h10.2v4h-10.2ZM983 573.8h7v4.9h-7ZM1005.3 573.8h5.4v5.8h-5.4ZM944.5 546.3h3.8v3.2h-3.8ZM945.9 557.5h3.5v2.8h-3.5ZM981 539.2h4.5v3.8h-4.5ZM960.1 585.7h3.3v3.8h-3.3ZM907.9 583h4.3v2.5h-4.3ZM970.3 529.4h2.7v3h-2.7ZM1004.1 587.3h3.6v3.6h-3.6ZM851.1 527.9h3.2v3.1h-3.2ZM1037.3 558.6h3.7v2.2h-3.7ZM855.6 574h4.7v2.8h-4.7ZM866.6 552.1h4.6v2.8h-4.6ZM948.4 532.9h3.4v2.8h-3.4ZM1015.7 534.6h3.4v2.8h-3.4ZM881.7 577.4h2.3v4h-2.3ZM953 522.1h2.5v2.4h-2.5ZM1000.2 554.7h3.4v3.8h-3.4ZM848.7 539h3.5v3h-3.5ZM1028.2 588.6h3.6v2.3h-3.6ZM1012.7 539.1h3.2v3.1h-3.2ZM1049.1 555.4h2.9v2.3h-2.9ZM937.5 566.3h4.7v3h-4.7ZM889 535.7h3.3v2.1h-3.3ZM959.2 586.2h4v3.2h-4ZM944.7 574.3h2.4v2.9h-2.4ZM865.4 521.7h2.5v2.1h-2.5ZM929.2 537.2h3.8v2.9h-3.8ZM886.1 584.2h3.3v3.6h-3.3ZM853.8 582.7h2.3v2.8h-2.3ZM1006.9 568.4h4.1v3.8h-4.1ZM978.6 527.3h2.1v3.1h-2.1ZM894.3 580.9h3.2v3.6h-3.2ZM1005.9 559.4h4.2v3.9h-4.2ZM858.4 590.9h2.3v1.1h-2.3ZM848.9 579.7h4v3.7h-4ZM1020.4 569.3h3.5v2.3h-3.5ZM1002.2 558.1h3.7v3.2h-3.7ZM1095.5 577.9h5v2.1h-5ZM1106.2 541.4h3.3v2.5h-3.3ZM1066.7 533.2h3.3v4h-3.3ZM1111.5 573.6h3.2v3.2h-3.2ZM1052.9 577.1h2.1v3.9h-2.1ZM1110.9 560.9h2.9v3.8h-2.9ZM1053.2 582.9h4.7v3.6h-4.7ZM1052.3 550.4h4.4v3h-4.4ZM1105.6 520.4h2.8v2.8h-2.8ZM1066.2 575.1h4.1v3h-4.1ZM1111.3 600.6h2.5v2.5h-2.5ZM1111.9 533.4h4.1v3.5h-4.1ZM1071.9 523.3h4.6v2.2h-4.6ZM1096.4 514.9h4.2v3.7h-4.2ZM1068.9 558.9h4.6v2.4h-4.6ZM1099 570.9h2.5v2.3h-2.5ZM1104.5 594h4.8v2.9h-4.8Z" fill="#ffe000"/>
<path d="M945.8 525.4h4.1v3.6h-4.1ZM1045.5 525.2h2.5v4.3h-2.5ZM846.7 538.1h2.8v3.2h-2.8ZM897.1 539.1h3.3v3.6h-3.3ZM910.7 538.9h3v3.9h-3ZM992.8 539.4h2.9v2.7h-2.9ZM846.6 551.6h3.2v3.5h-3.2ZM864.6 552.5h2.6v3.6h-2.6ZM893.2 547.6h3.2v2.7h-3.2ZM917.9 550h3.1v2.6h-3.1ZM930.8 553.2h4.1v2.9h-4.1ZM965 548.7h4.1v4.2h-4.1ZM1035 549h4.4v3.1h-4.4ZM891 563.2h4.4v3.6h-4.4ZM916.2 563.3h3.6v3.8h-3.6ZM1035.1 574.7h3.3v3.2h-3.3ZM1048.7 582.4h2.9v3.2h-2.9ZM916.9 539h3.9v2.2h-3.9ZM869 574.3h2.9v3h-2.9ZM902.9 585.8h3.7v2.3h-3.7ZM1045.9 572.2h3v2.6h-3ZM894.7 569.4h4.8v3.8h-4.8ZM847.1 570.1h2.4v3.4h-2.4ZM1019.9 575.5h3.8v2.2h-3.8ZM1012.8 579.6h3.5v2.2h-3.5ZM948.7 591.2h2.4v0.8h-2.4ZM1035.2 554.4h4.3v2.6h-4.3ZM1047.3 527.6h3.3v2.2h-3.3ZM902.2 570.2h4.7v2.3h-4.7ZM880.8 528.6h4.2v2.3h-4.2ZM902.9 555.5h5v3.6h-5ZM868.7 542.7h3.2v3.6h-3.2ZM1056.1 547.4h3.2v3.8h-3.2ZM1069.2 545.2h3.6v2.6h-3.6ZM1103 550.2h2.9v3.4h-2.9ZM1092.8 562.8h4.2v4.1h-4.2ZM1058.6 575.5h2.8v4.1h-2.8ZM1098.9 587.4h2.7v4.3h-2.7ZM1106.2 539.2h2v2.2h-2ZM1089.6 602.2h4.8v1.8h-4.8ZM1092.3 579.9h3.3v3.6h-3.3ZM1086.7 545.6h3.5v3.6h-3.5Z" fill="#b0b0b0"/>
<path d="M966 521.7h3.5v3h-3.5ZM1000.9 523h6.5v5.6h-6.5ZM953.3 534.6h6v4.9h-6ZM989.4 547h2v2.6h-2ZM1004.4 547h8.7v3.1h-8.7ZM1041.1 548.1h5.1v3.1h-5.1ZM974.5 561.4h3.9v3h-3.9ZM1009.9 556h3.5v3.7h-3.5ZM865.6 583.8h4.4v2.5h-4.4ZM970.3 546.2h2.7v3.4h-2.7ZM980.2 560.6h2.7v3.3h-2.7ZM934.5 536h3.4v2.3h-3.4ZM995.1 527.5h4.9v2.6h-4.9ZM1029 587.1h2.3v3.2h-2.3ZM1025.3 527.1h2.1v2.7h-2.1ZM845.4 523.4h2.4v2.6h-2.4ZM1077.9 557.7h8.6v5.6h-8.6ZM1090.4 594.6h3v2.4h-3ZM1056.5 522.8h4.2v3.3h-4.2ZM1096.4 601h5v3h-5ZM1114.8 584.9h1.2v4h-1.2ZM1095.9 590.8h3.2v2.7h-3.2Z" fill="#f0a020"/>
<path d="M1027.6 521.7h3.9v4.7h-3.9ZM852.8 561.3h3.3v3.8h-3.3ZM1036.7 523.7h2.2v2.8h-2.2ZM1003.9 565.3h4.9v2.3h-4.9ZM935.3 521.3h2.6v3.2h-2.6ZM947.5 591.3h2.8v0.7h-2.8ZM851.4 530.6h2.9v2.2h-2.9ZM1001.7 588h4.3v2.3h-4.3ZM910.9 535.8h2v2.9h-2ZM1024.1 576.1h2.9v2.5h-2.9ZM989.3 540.8h3.7v3h-3.7ZM882.1 550.4h2.1v3.7h-2.1ZM959.1 553.7h4.7v2.5h-4.7ZM944.8 581.8h4v2.4h-4ZM919.7 541.1h3.4v3.9h-3.4ZM911.6 548.1h2.1v3h-2.1ZM990.5 582.5h4.7v3.8h-4.7ZM1011.3 576.6h2.3v3.2h-2.3ZM878.5 571.6h4.9v3.5h-4.9ZM972.1 565.6h4.5v2.9h-4.5ZM1020.7 563.2h2.8v2.5h-2.8ZM961.8 566.8h4.8v2.5h-4.8ZM1099.6 557.8h7.6v2.8h-7.6ZM1056.7 534.1h4.6v2.2h-4.6ZM1107.5 530.7h4.5v2.7h-4.5ZM1100.4 543.7h4.9v2.7h-4.9Z" fill="#00f000"/>
<path d="M878.9 535.5h4.2v1.8h-4.2ZM842.7 547h3.2v3.9h-3.2ZM967 582.6h2.1v3.8h-2.1ZM967.9 522.8h3.6v3.9h-3.6ZM974.5 557.9h4.8v2h-4.8ZM1033 531h2.7v2.8h-2.7ZM840.2 582.3h2.3v3.5h-2.3ZM960.2 539.1h3.8v2.4h-3.8ZM982.7 527.9h4.3v2.6h-4.3ZM867 547.1h3.3v2.6h-3.3ZM885.7 555.4h3.3v3.1h-3.3ZM909.2 575.8h2.9v3.4h-2.9ZM879 585.3h3.2v2h-3.2ZM905.5 520h2.4v2.7h-2.4ZM962.6 551.6h3.1v3h-3.1ZM884.5 529.7h2.4v2.8h-2.4ZM946.8 587h2.8v2.5h-2.8ZM871.3 538.1h4.9v2.2h-4.9ZM908.3 534h3.6v2.3h-3.6ZM1047.8 538.5h3.3v3.5h-3.3ZM917.4 522.5h2.5v3.8h-2.5ZM910.7 534.1h4.5v2.3h-4.5ZM998.5 532.6h2.3v2.2h-2.3ZM1097.6 524.1h3.3v3.2h-3.3ZM1091.7 561.9h2.6v3.8h-2.6ZM1072.7 513.8h4.2v3h-4.2Z" fill="#ff44ff"/>
<path d="M845.7 580.5h4.6v3h-4.6ZM892.5 561.1h2.3v3.3h-2.3ZM879.2 570.6h4.1v3.7h-4.1ZM933.9 525.8h4.6v2.3h-4.6ZM975.4 554.1h3.9v2.2h-3.9ZM1018 584.1h3.9v3.1h-3.9ZM993.4 525.2h4v2.6h-4ZM886.9 546.4h3.1v3.3h-3.1ZM985.4 552.2h3.1v2.2h-3.1ZM854.2 559.4h2.7v2.1h-2.7ZM943.3 521.5h3.9v2.6h-3.9ZM915.5 569.9h2.2v3.7h-2.2ZM977.3 555.3h4.4v3.1h-4.4ZM1014.1 522.1h4.8v3.6h-4.8ZM1022.2 568.4h2.6v3.5h-2.6ZM1040.7 519.2h4.1v3h-4.1ZM843.6 571.7h3.5v2.3h-3.5ZM1008.9 553.3h2.4v2.4h-2.4ZM1023.5 524.7h2.6v3h-2.6ZM949 528.9h4.7v2.9h-4.7ZM868.4 531h2.5v2.6h-2.5ZM872.2 543h2.1v2.2h-2.1ZM1077.5 541.3h2.1v3.6h-2.1ZM1082.1 526.5h4.4v2.4h-4.4ZM1063.2 603.8h5v0.2h-5ZM1052.5 530.6h2.6v2.9h-2.6ZM1088.7 549.5h2.2v2.2h-2.2ZM1091.6 532.9h3.2v2.5h-3.2Z" fill="#18d8f0"/>
<path d="M862 506h18v10h-18ZM1012 506h16v10h-16Z" fill="#18d8f0"/>
<path d="M890 508h10v6h-10ZM1040 507h12v6h-12ZM914 498h8v5h-8ZM1031 500h8v5h-8Z" fill="#00f000"/>
<path d="M965 510h16v12h-16Z" fill="#ff44ff"/>
<path d="M1072 513h14v9h-14ZM1062 588h16v14h-16Z" fill="#ffe000"/>
<path  d="M1052 581L1080 581L1080 604L1052 604ZM846 524.5L822.3 524.5L822.3 581.5L846.6 581.5M846.6 581.5L846.6 698M1080.6 604L1080.6 664M842 643L864.5 643L864.5 669L842 669Z" stroke="#ffffff" stroke-width="2.4" fill="none"/>
<path  d="M822.3 581.5L1080.6 664M846.6 647L1051.7 592.5M965 575.5L965 662" stroke="#ffffff" stroke-width="2" fill="none"/>
<path  d="M846 647L856 647L856 664L846 664Z" stroke="#f0a020" stroke-width="1.5" fill="none"/>
<path  d="M1085.7 485L1152 519L1097.6 720M1060 504L1070.5 499L1126.6 529.6L1130 602.8L1102.8 665.7M1160 830L1150 840L1152 860L1160 870M1138 870L1148 880L1152 930L1160 950M1060 604.5L1060 611L1100 613L1106 620L1102.8 655.5L1082 664M859 662.3L1080.6 662.3M859 656L830 658L827 665.7L827 679L859 681L862 693M899 693L899 681L905 678L972 678L979 684L979 693M1018.5 693L1018.5 681L1025 678L1077 678L1083 684L1083 693" stroke="#18d8f0" stroke-width="2" fill="none"/>
<path d="M846 647h8v16h-8Z" fill="#ffe000"/>
<path  d="M829.7 708L829.7 759.7M838.8 706.9L838.8 762.2M849.1 704.8L849.1 762.5M856.8 704.6L856.8 763.7M865 702.7L865 759.3M873.8 707.3L873.8 762M884.7 702.4L884.7 764.5M892.8 706.8L892.8 761M900.3 705.5L900.3 760.1M908.9 705.5L908.9 761.8M916.6 702.8L916.6 759.5M926.2 707.1L926.2 763.3M936 702L936 761.6M946.8 706.8L946.8 759.7M955.4 705.2L955.4 762.8M963.6 704L963.6 764.5M970.9 702.4L970.9 758.7M980.6 704.6L980.6 764.4M990.6 707.4L990.6 760.8M1001.3 705.5L1001.3 764.4M1009.8 703.6L1009.8 762M1019.1 702L1019.1 762.8M1026.7 703.9L1026.7 764.1M1036.9 702.4L1036.9 758.9M1045.1 706.8L1045.1 759.6M1053.7 702.5L1053.7 761.2M855.4 748.3L855.4 782.3M864.8 749L864.8 782.2M873.6 748.9L873.6 776.8M883.7 750.1L883.7 781.3M891.3 753.5L891.3 779.7M900.8 749.9L900.8 777.7M910 748.2L910 778.1M965.5 752.3L965.5 777M976.2 749.5L976.2 779.4M987.1 748.1L987.1 777.8M995.1 752.9L995.1 780.4M1004.5 750.9L1004.5 781.2M1013.6 752.1L1013.6 780.6M1024.4 753.7L1024.4 779.5" stroke="#d9461a" stroke-width="1.8" fill="none"/>
<path  d="M825.7 709.5L1061.5 709.5M825.7 720.9L1061.5 720.9M825.7 733.2L1061.5 733.2M825.7 748.8L1061.5 748.8M855 755.9L915.5 755.9M965 755.5L1025.6 755.5M965 769.1L1025.6 769.1" stroke="#d9461a" stroke-width="1.6" fill="none"/>
<path  d="M828.1 709.5L839.2 709.5L839.2 720.9L828.1 720.9ZM860.3 709.5L876.1 709.5L876.1 720.9L860.3 720.9ZM876.1 709.5L892.8 709.5L892.8 720.9L876.1 720.9ZM892.8 709.5L908.9 709.5L908.9 720.9L892.8 720.9ZM1046.7 709.5L1056 709.5L1056 720.9L1046.7 720.9ZM898.8 720.9L915.4 720.9L915.4 733.2L898.8 733.2ZM878.2 733.2L894.6 733.2L894.6 748.8L878.2 748.8ZM908.9 733.2L923 733.2L923 748.8L908.9 748.8ZM1007.1 733.2L1023.7 733.2L1023.7 748.8L1007.1 748.8ZM896.2 748.8L905.3 748.8L905.3 758.6L896.2 758.6ZM892.1 755.9L899.5 755.9L899.5 771L892.1 771ZM899.5 755.9L911.7 755.9L911.7 771L899.5 771Z" stroke="#ffffff" stroke-width="3" fill="none"/>
<path  d="M839.2 709.5L848.8 709.5L848.8 720.9L839.2 720.9ZM948 709.5L957.3 709.5L957.3 720.9L948 720.9ZM859.7 720.9L872 720.9L872 733.2L859.7 733.2ZM872 720.9L882.4 720.9L882.4 733.2L872 733.2ZM855.2 733.2L862.2 733.2L862.2 748.8L855.2 748.8ZM938.8 733.2L950.6 733.2L950.6 748.8L938.8 748.8ZM950.6 733.2L962.5 733.2L962.5 748.8L950.6 748.8Z" stroke="#ffe000" stroke-width="3.4" fill="none"/>
<path  d="M848.8 709.5L860.3 709.5L860.3 720.9L848.8 720.9ZM908.9 709.5L919.2 709.5L919.2 720.9L908.9 720.9ZM931.9 709.5L948 709.5L948 720.9L931.9 720.9ZM1011.9 709.5L1021.4 709.5L1021.4 720.9L1011.9 720.9ZM1056 709.5L1061.5 709.5L1061.5 720.9L1056 720.9ZM828.3 720.9L837 720.9L837 733.2L828.3 733.2ZM991.5 720.9L999.4 720.9L999.4 733.2L991.5 733.2ZM1009 720.9L1021.8 720.9L1021.8 733.2L1009 733.2ZM981.1 733.2L992.2 733.2L992.2 748.8L981.1 748.8ZM945.9 748.8L956.1 748.8L956.1 758.6L945.9 758.6ZM1013.8 748.8L1029.5 748.8L1029.5 758.6L1013.8 758.6ZM1053.3 748.8L1061.5 748.8L1061.5 758.6L1053.3 758.6Z" stroke="#ffffff" stroke-width="3.4" fill="none"/>
<path  d="M957.3 709.5L965.4 709.5L965.4 720.9L957.3 720.9Z" stroke="#ff44ff" stroke-width="2.6" fill="none"/>
<path  d="M965.4 709.5L977.5 709.5L977.5 720.9L965.4 720.9ZM890.7 720.9L898.8 720.9L898.8 733.2L890.7 733.2ZM1052.9 720.9L1060 720.9L1060 733.2L1052.9 733.2ZM833.3 733.2L845.5 733.2L845.5 748.8L833.3 748.8ZM923 733.2L938.8 733.2L938.8 748.8L923 748.8ZM827.9 748.8L836.5 748.8L836.5 758.6L827.9 758.6ZM929.7 748.8L945.9 748.8L945.9 758.6L929.7 758.6ZM856.3 755.9L867.5 755.9L867.5 771L856.3 771ZM880.1 755.9L892.1 755.9L892.1 771L880.1 771ZM1010.3 755.5L1024.8 755.5L1024.8 769.1L1010.3 769.1Z" stroke="#ffffff" stroke-width="2.6" fill="none"/>
<path  d="M1000.9 709.5L1011.9 709.5L1011.9 720.9L1000.9 720.9ZM862.2 733.2L878.2 733.2L878.2 748.8L862.2 748.8ZM1019.5 769.1L1025.6 769.1L1025.6 776.6L1019.5 776.6Z" stroke="#f0a020" stroke-width="3.4" fill="none"/>
<path  d="M1030.5 715.2L1046.7 715.2M863.2 753.7L873.1 753.7" stroke="#ffe000" stroke-width="2" fill="none"/>
<path  d="M837 720.9L844.9 720.9L844.9 733.2L837 733.2ZM930.4 720.9L943.5 720.9L943.5 733.2L930.4 733.2ZM1021.8 720.9L1036.7 720.9L1036.7 733.2L1021.8 733.2ZM826 733.2L833.3 733.2L833.3 748.8L826 748.8ZM1023.7 733.2L1039.3 733.2L1039.3 748.8L1023.7 748.8Z" stroke="#ffe000" stroke-width="2.6" fill="none"/>
<path  d="M943.5 720.9L957.8 720.9L957.8 733.2L943.5 733.2ZM957.8 720.9L968.5 720.9L968.5 733.2L957.8 733.2ZM968.5 720.9L981.9 720.9L981.9 733.2L968.5 733.2ZM981.9 720.9L991.5 720.9L991.5 733.2L981.9 733.2ZM1036.7 720.9L1052.9 720.9L1052.9 733.2L1036.7 733.2ZM894.6 733.2L908.9 733.2L908.9 748.8L894.6 748.8ZM956.1 748.8L970.2 748.8L970.2 758.6L956.1 758.6ZM979.6 748.8L987.4 748.8L987.4 758.6L979.6 758.6Z" stroke="#ffe000" stroke-width="3" fill="none"/>
<path  d="M992.2 733.2L999.9 733.2L999.9 748.8L992.2 748.8ZM873.1 748.8L880.7 748.8L880.7 758.6L873.1 758.6ZM922 748.8L929.7 748.8L929.7 758.6L922 758.6ZM987.4 748.8L1002.1 748.8L1002.1 758.6L987.4 758.6Z" stroke="#f0a020" stroke-width="2.6" fill="none"/>
<path  d="M999.9 733.2L1007.1 733.2L1007.1 748.8L999.9 748.8ZM1051.6 733.2L1061.5 733.2L1061.5 748.8L1051.6 748.8ZM880.7 748.8L896.2 748.8L896.2 758.6L880.7 758.6Z" stroke="#f0a020" stroke-width="3" fill="none"/>
<path  d="M836.5 748.8L850.7 748.8L850.7 758.6L836.5 758.6ZM966 769.1L976.6 769.1L976.6 776.6L966 776.6ZM996.9 769.1L1011.1 769.1L1011.1 776.6L996.9 776.6Z" stroke="#ff44ff" stroke-width="3.4" fill="none"/>
<path  d="M905.3 748.8L922 748.8L922 758.6L905.3 758.6Z" stroke="#ff44ff" stroke-width="3" fill="none"/>
<path  d="M867.5 763.4L880.1 763.4M967.5 762.3L981.2 762.3M1011.1 772.8L1019.5 772.8" stroke="#f0a020" stroke-width="2" fill="none"/>
<path d="M852.7 712.5h2.7v3.5h-2.7ZM866.4 712.8h2.8v2.5h-2.8ZM971 712.7h4.1v3.4h-4.1ZM1005.4 712.4h2.7v3.1h-2.7ZM830.4 723.6h4.4v3.3h-4.4ZM839.1 723.9h2.6v2.7h-2.6ZM863.1 726.5h3.9v2.7h-3.9ZM945.7 726.8h2.6v3.4h-2.6ZM1027.4 726.6h3.1v3.8h-3.1ZM1041.6 723h2.6v4.4h-2.6ZM838.1 735.9h4.1v2.9h-4.1ZM865.4 736h4.1v3.7h-4.1ZM926.2 742.8h3.1v4.5h-3.1ZM943.4 736.2h3.1v4.2h-3.1ZM1001.9 736h3.2v2.6h-3.2ZM898.3 752.5h2.8v4.3h-2.8ZM1055.4 751h3.7v3.8h-3.7ZM1045.9 746.4h3.1v3h-3.1ZM871.4 710.5h3.9v2.1h-3.9ZM843.4 737.4h2.1v2.9h-2.1ZM964 736.1h2.8v3.8h-2.8ZM927.6 750.4h2.1v2h-2.1ZM945.4 740h4.8v3.9h-4.8ZM833.1 735.3h3.4v3.8h-3.4ZM930.3 757.1h3.1v1.5h-3.1ZM884.6 756.5h4.3v2.1h-4.3ZM897.3 711.4h2.7v4h-2.7ZM888.2 719h3.4v2.8h-3.4ZM1052.1 731.5h4.2v2.7h-4.2ZM872.6 722.1h4.4v3.4h-4.4ZM948.3 717.7h3.2v2.2h-3.2ZM993.5 718.1h2v2.4h-2ZM859.2 759.1h4.3v3.2h-4.3ZM870.6 767.4h3.9v3.9h-3.9ZM969.2 771.1h3.2v4.1h-3.2ZM1021.5 771.1h4v3.6h-4ZM992.8 754.7h4.1v3.9h-4.1Z" fill="#b0b0b0"/>
<path d="M881.7 713.5h4.1v2.8h-4.1ZM899.4 713.5h3.5v2.6h-3.5ZM977.5 715.3h5.1v5.5h-5.1ZM988.2 710.4h8.8v4.4h-8.8ZM1014.6 713.5h3.4v3.4h-3.4ZM1021.4 711.7h5.2v5.8h-5.2ZM844.9 724.7h6.8v5.1h-6.8ZM915.4 725h11.4v3h-11.4ZM999.4 727.5h9.2v3.7h-9.2ZM1014 724h3.1v3.3h-3.1ZM857.3 739.8h3.2v4h-3.2ZM971.1 742h9v3.7h-9ZM1039.3 742.7h7.3v3h-7.3ZM850.7 749.1h8.7v5.2h-8.7ZM888.9 751.8h3.8v3.9h-3.8ZM938.5 751.1h4.4v4.3h-4.4ZM1002.1 749.3h5.2v4.2h-5.2ZM1036.7 753.3h15v3.1h-15ZM845.1 743.8h3.1v3h-3.1ZM901.2 757.6h2.1v1h-2.1ZM1053.6 713.7h4v3h-4ZM828.8 756.5h4.6v2.1h-4.6ZM940.2 739.5h4.8v2.6h-4.8ZM973.6 712.7h3.1v2.2h-3.1ZM873.3 715.3h2.6v2.7h-2.6ZM946.9 744.8h3.2v3.7h-3.2ZM992.2 726.3h4.3v2.4h-4.3ZM859.6 741.7h3v3.3h-3ZM870.1 758.5h2.7v0.1h-2.7ZM892.4 731.7h3.7v3.5h-3.7ZM992.7 715.7h4.5v2.3h-4.5ZM1036.7 736.6h2.5v2.4h-2.5ZM1003 708.8h2.8v2.2h-2.8ZM827.2 734h4.2v2.1h-4.2ZM936.5 746.5h4.7v3.2h-4.7ZM983.8 728.3h3.6v3.1h-3.6ZM950.7 741.6h3v2h-3ZM829.1 710.3h4v2.5h-4ZM838 735.1h4.9v2.5h-4.9ZM910.7 753.8h4.9v4h-4.9ZM966.1 738.2h4.5v3.3h-4.5ZM1009.5 734.1h4.2v3.1h-4.2ZM963.3 737.3h4.7v3.9h-4.7ZM1041.3 741.7h2.4v3.3h-2.4ZM978.9 734.1h4.9v2.4h-4.9ZM1013.8 718.9h2.7v3h-2.7ZM865.3 756.6h4v2h-4ZM1007.3 738.3h5v2.6h-5ZM845.2 749.4h3.8v3.8h-3.8ZM975.6 746.2h3v2.4h-3ZM869.7 758.2h3v0.4h-3ZM886.2 730.1h3.7v2.1h-3.7ZM894.1 764.8h4.5v3.2h-4.5ZM904.7 760.8h3.2v2.6h-3.2ZM855.7 761.9h3.5v2.4h-3.5ZM981.2 758.4h7.7v5.8h-7.7ZM998 756h10.2v4.5h-10.2ZM976.6 769.6h4v5.1h-4ZM965.9 757.7h3.1v3.5h-3.1ZM1010.6 762.9h2.5v4h-2.5Z" fill="#ffffff"/>
<path d="M919.2 711.5h8.2v4.5h-8.2ZM882.4 726.5h5.6v6h-5.6ZM983 735.3h4.2v2.3h-4.2ZM935.3 712.9h2.3v3.8h-2.3ZM847.5 735.3h3.1v2.9h-3.1ZM840.8 718.4h4.8v2.2h-4.8ZM955.4 753.1h4.7v3.2h-4.7ZM868.9 717.4h2.2v2.8h-2.2ZM899.7 733.6h3v3.5h-3ZM842.8 749.4h2.9v3.4h-2.9ZM1050.3 733.1h4.5v3.4h-4.5ZM988.1 733.8h4v2h-4ZM893 731h2.1v3.6h-2.1ZM988.6 725.2h4.6v3.6h-4.6ZM967.3 750.5h4.5v3h-4.5ZM938.1 718.7h2.2v3.8h-2.2ZM982.2 749.5h2.6v3h-2.6ZM990.8 754.8h4.3v2.6h-4.3ZM892.5 729.4h3.9v3.3h-3.9ZM1007.4 719.5h2.5v2.5h-2.5ZM835.6 713h3.5v3.5h-3.5ZM959 752.5h4v3.9h-4ZM860.1 736h4.4v2.3h-4.4ZM918.6 749.8h5v2.8h-5ZM908.2 769.6h4.4v3.6h-4.4ZM897.2 762.1h3.8v3.9h-3.8ZM980.1 760.1h2.7v3.1h-2.7ZM985.2 759.2h4v3.8h-4ZM974 759.1h2.8v3.1h-2.8Z" fill="#f0a020"/>
<path d="M873.5 722.4h2.4v2.6h-2.4ZM874.6 750.3h1.8v3.1h-1.8ZM895 737.2h2.1v2.1h-2.1ZM907.9 747.8h4.9v2.4h-4.9ZM965.4 756.4h2.4v2.2h-2.4ZM946 721.1h3.5v2.3h-3.5ZM1013.9 751.9h3.5v2.9h-3.5ZM964.4 753.1h2.8v3.8h-2.8ZM1012.9 746h4v2.5h-4ZM1023.4 746.2h4.7v2.5h-4.7ZM1025.1 708.1h4.4v2.7h-4.4ZM920.2 756.8h4.3v1.8h-4.3ZM952.9 726.1h4.1v3.2h-4.1ZM1003.6 772.5h4.9v3.2h-4.9Z" fill="#ff44ff"/>
<path d="M892.2 722.4h3.2v3.9h-3.2ZM900.3 722.4h5.5v4h-5.5ZM1054.4 722.4h2.2v3h-2.2ZM845.5 737.6h7.8v3.5h-7.8ZM962.5 736.2h7.6v5h-7.6ZM970.2 752.6h8.4v4.4h-8.4ZM1029.5 749.1h6.7v3.7h-6.7ZM958.9 708.9h4.5v2.4h-4.5ZM876.2 755.9h2.7v2.7h-2.7ZM917.7 732.4h4.1v3.9h-4.1ZM910.6 745.1h3.6v2.9h-3.6ZM922.8 742.9h4.3v2.9h-4.3ZM852.3 734.3h4.4v2.9h-4.4ZM1015.7 714.5h2.1v3.5h-2.1ZM863.8 746.1h4.1v2.4h-4.1ZM941.9 756.8h2.5v1.8h-2.5ZM935.6 739.3h4.2v2.5h-4.2ZM956.3 708.4h4.1v3.9h-4.1ZM1028.5 752.6h4.4v2.5h-4.4ZM1022.5 753.7h4.4v3.2h-4.4ZM929.1 717h2.7v3h-2.7ZM1035.8 746.4h2.5v4h-2.5ZM996.1 733.6h2.9v2.7h-2.9ZM996.7 726h2.3v3.8h-2.3ZM975.8 735.3h4.8v2.3h-4.8ZM1043.4 714.9h4.6v3.8h-4.6ZM896.4 749.5h3.4v2.2h-3.4ZM911.6 714.4h3.8v2.8h-3.8ZM933.5 708.4h4.4v3.4h-4.4ZM1021.8 734.4h4.4v2.6h-4.4ZM867.2 726.7h2.2v2.6h-2.2ZM922.6 720.5h3v2h-3ZM921.2 708.1h3.6v2.1h-3.6ZM835 735.9h2.6v3.7h-2.6ZM834.7 758.2h2.9v0.4h-2.9ZM852.7 714.4h3.8v3.5h-3.8ZM863.1 735.2h2.6v2.1h-2.6ZM976.6 743.1h2.5v3.6h-2.5ZM845.9 719h4.3v2.8h-4.3ZM960.6 714.7h2.8v3.6h-2.8ZM973.1 735h2.8v3.4h-2.8ZM825.7 729.2h2.3v3.9h-2.3ZM938.5 726.8h3.8v2.2h-3.8ZM964.7 735.9h4.3v2.2h-4.3ZM867 725.8h2.1v3.8h-2.1ZM862.9 764.4h2.3v3.9h-2.3ZM855.8 770.2h3.5v2.8h-3.5ZM884.8 765.3h3.3v3.6h-3.3ZM908.6 776h4.3v0.6h-4.3ZM989 773.4h2.4v3.2h-2.4ZM965.2 754.8h3.2v3.1h-3.2ZM1003.4 761.3h4.2v2.7h-4.2Z" fill="#ffe000"/>
<path d="M933.5 725.7h2.7v2.7h-2.7ZM993.6 724.6h4.1v3h-4.1ZM898.5 736.9h3.6v4.3h-3.6ZM914.9 735.7h3v4.4h-3ZM954 735.5h4.5v4.3h-4.5ZM994.2 737.2h2.9v3.8h-2.9ZM1033 740.1h3.3v3.4h-3.3ZM1055.5 735.3h3.7v2.9h-3.7ZM908.2 751.6h3.9v3.2h-3.9ZM949.3 751.4h2.9v3.7h-2.9ZM958.8 751h2.9v2.9h-2.9ZM1017.1 760h2.7v3.6h-2.7Z" fill="#c8c8c8"/>
<path d="M970 722.4h3.2v2.2h-3.2ZM879.7 734.7h5.2v5.6h-5.2ZM1022.2 715.9h2.2v2.3h-2.2ZM955.7 727.5h2.1v3.9h-2.1ZM1054.1 756.1h3.6v2h-3.6ZM899.5 751h4.7v3.1h-4.7ZM854.8 744.5h3.8v2.6h-3.8ZM1006.7 737h2.3v3.7h-2.3ZM1015.1 758.3h3.7v0.3h-3.7ZM1002.5 725.4h4.3v3.2h-4.3ZM960.7 756.5h3.4v2.1h-3.4ZM853.9 721.1h2.9v2.4h-2.9ZM881.4 760.2h5v2.3h-5ZM871.1 771.9h3.8v2.7h-3.8ZM914.6 756h0.9v3.3h-0.9ZM972.1 772.6h2.8v2.8h-2.8Z" fill="#00f000"/>
<path d="M827.5 734.7h2.4v2.6h-2.4ZM982.6 734.7h4.4v4.2h-4.4ZM890.5 714.2h3.7v3.8h-3.7ZM1007.9 741.3h4.8v2.1h-4.8ZM895.3 742.6h3.1v3h-3.1ZM878.8 714.8h4.4v2.1h-4.4ZM943.1 708.7h2.7v3h-2.7ZM1006.1 722.1h2.8v2.2h-2.8ZM846.3 744.7h2.3v3.6h-2.3ZM1051 723.7h4.6v3.9h-4.6ZM859.7 748.8h3.3v2.7h-3.3ZM1005.1 729h4.7v3.5h-4.7ZM863.3 715.1h3.9v2.6h-3.9ZM942.7 718.5h2.1v3.7h-2.1ZM852.4 736.9h4.5v2.6h-4.5ZM860 719.1h2.4v2.7h-2.4ZM1056.2 717.2h3.3v3.3h-3.3ZM945 746.1h4.2v2.8h-4.2ZM911.3 770.2h3.1v3.6h-3.1ZM896.1 756.6h3.7v2.1h-3.7ZM866 764h4.2v3.2h-4.2ZM1024.7 769.8h0.9v2.4h-0.9ZM1001.7 770.6h2.9v3.4h-2.9ZM995.5 770.5h4.8v2.5h-4.8Z" fill="#18d8f0"/>
<path d="M830 705h8v6h-8ZM870 730h8v6h-8ZM900 705h8v6h-8ZM940 720h8v6h-8ZM980 735h8v6h-8ZM1010 705h8v6h-8ZM1040 725h8v6h-8Z" fill="#ffe000"/>
<path d="M840 713h5v5h-5ZM880 738h5v5h-5ZM910 713h5v5h-5ZM950 728h5v5h-5ZM990 743h5v5h-5ZM1020 713h5v5h-5ZM1050 733h5v5h-5Z" fill="#ff44ff"/>
<path d="M1065.7 711L1088 711L1090 740L1100.5 745L1100.5 770L1092 780L1092 797.6L1065 797.6L1063 780L1075 770L1075 745L1065.7 740ZM862 800h20v20h-20ZM954 801L988.7 797.6L988.7 803L954 806Z" fill="#1e78ff"/>
<path  d="M837 693.5L882 693.5L882 707.5L837 707.5ZM995 693.5L1066 693.5L1066 707.5L995 707.5Z" stroke="#ffffff" stroke-width="2.4" fill="none"/>
<path  d="M893 826L1071.6 806.8L1088.5 837L896.5 859.6ZM877.4 774L880 820L885 877.6" stroke="#ffffff" stroke-width="2" fill="none"/>
<path  d="M896.5 859.6L1071.6 806.8M893 826L1088.5 837M1000 812L1002 852M1072 806L1106.5 859.6" stroke="#ffffff" stroke-width="1.8" fill="none"/>
<path  d="M885 809L1090.7 790M887 816L1100 800L1110 812L1105 826L1102 832.7M895 850.7L1102 832.7M956 871L960 865L1108.7 859.6M1097.5 680L1133 805.8L1153.6 810L1160 949.5L1108.7 969.7" stroke="#18d8f0" stroke-width="2" fill="none"/>
<g transform="rotate(-4 997 915)">
<path  d="M877.8 868.9L877.8 922.5M887.2 871.5L887.2 921.9M896.2 867.4L896.2 923.6M904.6 866.9L904.6 919.4M914.2 872L914.2 922.9M923 869.3L923 921M931.5 870.6L931.5 922.2M941 871.7L941 919.6M951.7 870.3L951.7 919.8M961 869.8L961 923.7M971.9 871.2L971.9 919.3M979.6 869.3L979.6 919.7M989.3 866.7L989.3 918.4M996.4 871.3L996.4 919.9M1004 869.4L1004 920.2M1013.9 866.2L1013.9 923.9M1022.6 868.1L1022.6 918.8M1032 866.7L1032 923.3M1039.6 871L1039.6 923.4M1049.3 867.4L1049.3 918.4M1058.8 871.9L1058.8 922.4M1069 870.1L1069 918M1078.9 866L1078.9 921.7M1087.4 870L1087.4 922.9M1098.3 869.8L1098.3 919.3M1109.3 869.4L1109.3 920.7M1117.5 867.7L1117.5 923.9M889.6 912.2L889.6 953.9M898.2 914.5L898.2 953.7M907.9 909.2L907.9 955.7M915 910.9L915 950.6M924.9 909.1L924.9 952.3M935.3 910.7L935.3 953M945.9 913.3L945.9 951.9M956.1 912.5L956.1 950.7M965.4 911.4L965.4 952.4M973.5 913.2L973.5 954.7M982.9 914.3L982.9 955.6M991.6 911.5L991.6 955.8M1000 910.9L1000 953.4M1009.4 912.5L1009.4 954.9M1018.5 912.4L1018.5 953.7M1028.2 913.9L1028.2 952M1036.5 911.8L1036.5 956M1047 912.5L1047 952.5M1055 910.5L1055 952.3M1062.7 910.3L1062.7 954.3M1071.1 910.3L1071.1 953.9M1080.4 909.4L1080.4 952.1M926.6 942.9L926.6 963.8M937.4 943.8L937.4 961.3M945.1 939.5L945.1 961.5M952.4 944.4L952.4 962.1M962.3 944.5L962.3 964M972.9 943.1L972.9 964.5M982 941.1L982 964.9" stroke="#d9461a" stroke-width="1.8" fill="none"/>
<path  d="M875 873.7L1120 873.7M875 887.1L1120 887.1M875 899.3L1120 899.3M888 916.2L1086 916.2M888 929.3L1086 929.3M888 942.1L1086 942.1M925 945.1L985 945.1" stroke="#d9461a" stroke-width="1.6" fill="none"/>
<path  d="M891.3 873.7L900.1 873.7L900.1 887.1L891.3 887.1ZM969.8 873.7L982.8 873.7L982.8 887.1L969.8 887.1ZM890.3 887.1L904.1 887.1L904.1 899.3L890.3 899.3ZM916.9 887.1L928 887.1L928 899.3L916.9 899.3ZM1011.3 887.1L1025.7 887.1L1025.7 899.3L1011.3 899.3ZM981.4 899.3L990.4 899.3L990.4 916.3L981.4 916.3ZM1028.4 899.3L1040.3 899.3L1040.3 916.3L1028.4 916.3ZM1058.2 916.2L1066 916.2L1066 929.3L1058.2 929.3ZM1055.3 929.3L1069.3 929.3L1069.3 942.1L1055.3 942.1ZM1069.3 929.3L1078.6 929.3L1078.6 942.1L1069.3 942.1ZM921.4 942.1L932.3 942.1L932.3 950L921.4 950ZM1051.9 942.1L1067.9 942.1L1067.9 950L1051.9 950Z" stroke="#ffffff" stroke-width="3" fill="none"/>
<path  d="M900.1 873.7L908.6 873.7L908.6 887.1L900.1 887.1ZM1097.1 887.1L1105.5 887.1L1105.5 899.3L1097.1 899.3ZM949 916.2L965.2 916.2L965.2 929.3L949 929.3ZM904.6 929.3L919.3 929.3L919.3 942.1L904.6 942.1ZM943.6 929.3L952.9 929.3L952.9 942.1L943.6 942.1ZM1078.6 929.3L1086 929.3L1086 942.1L1078.6 942.1Z" stroke="#ffe000" stroke-width="3" fill="none"/>
<path  d="M908.6 873.7L923.7 873.7L923.7 887.1L908.6 887.1ZM994.1 873.7L1002.9 873.7L1002.9 887.1L994.1 887.1ZM1022.9 873.7L1034.8 873.7L1034.8 887.1L1022.9 887.1ZM1055 887.1L1070.7 887.1L1070.7 899.3L1055 899.3ZM1063.2 899.3L1071.8 899.3L1071.8 916.3L1063.2 916.3ZM976.8 929.3L986.6 929.3L986.6 942.1L976.8 942.1ZM942.4 945.1L951.2 945.1L951.2 960L942.4 960Z" stroke="#ffe000" stroke-width="3.4" fill="none"/>
<path  d="M937.5 873.7L944.5 873.7L944.5 887.1L937.5 887.1ZM1071.8 899.3L1084.5 899.3L1084.5 916.3L1071.8 916.3ZM902.7 916.2L917 916.2L917 929.3L902.7 929.3ZM1039.7 929.3L1047.7 929.3L1047.7 942.1L1039.7 942.1ZM914.3 942.1L921.4 942.1L921.4 950L914.3 950ZM1035.5 942.1L1051.9 942.1L1051.9 950L1035.5 950Z" stroke="#f0a020" stroke-width="2.6" fill="none"/>
<path  d="M944.5 873.7L960.8 873.7L960.8 887.1L944.5 887.1ZM965.5 942.1L974.9 942.1L974.9 950L965.5 950ZM1067.9 942.1L1082.3 942.1L1082.3 950L1067.9 950Z" stroke="#ff44ff" stroke-width="3.4" fill="none"/>
<path  d="M960.8 873.7L969.8 873.7L969.8 887.1L960.8 887.1ZM982.8 873.7L994.1 873.7L994.1 887.1L982.8 887.1ZM1044.2 873.7L1059.7 873.7L1059.7 887.1L1044.2 887.1ZM1059.7 873.7L1074.6 873.7L1074.6 887.1L1059.7 887.1ZM875.3 887.1L890.3 887.1L890.3 899.3L875.3 899.3ZM962.7 887.1L975.5 887.1L975.5 899.3L962.7 899.3ZM988.1 887.1L999.1 887.1L999.1 899.3L988.1 899.3ZM999.1 887.1L1011.3 887.1L1011.3 899.3L999.1 899.3ZM877.4 899.3L885.6 899.3L885.6 916.3L877.4 916.3ZM925.7 899.3L939.6 899.3L939.6 916.3L925.7 916.3ZM952.5 899.3L967.9 899.3L967.9 916.3L952.5 916.3ZM1055.9 899.3L1063.2 899.3L1063.2 916.3L1055.9 916.3ZM965.2 916.2L977.9 916.2L977.9 929.3L965.2 929.3ZM977.9 916.2L990.1 916.2L990.1 929.3L977.9 929.3ZM1043.2 916.2L1058.2 916.2L1058.2 929.3L1043.2 929.3ZM1027.1 929.3L1039.7 929.3L1039.7 942.1L1027.1 942.1ZM1047.7 929.3L1055.3 929.3L1055.3 942.1L1047.7 942.1ZM925.8 945.1L942.4 945.1L942.4 960L925.8 960ZM967.5 945.1L980.7 945.1L980.7 960L967.5 960Z" stroke="#ffffff" stroke-width="3.4" fill="none"/>
<path  d="M1002.9 873.7L1015.9 873.7L1015.9 887.1L1002.9 887.1ZM1105.5 887.1L1120 887.1L1120 899.3L1105.5 899.3ZM917 916.2L928.7 916.2L928.7 929.3L917 929.3ZM990.1 916.2L1000.2 916.2L1000.2 929.3L990.1 929.3ZM1028.5 916.2L1043.2 916.2L1043.2 929.3L1028.5 929.3ZM930 929.3L943.6 929.3L943.6 942.1L930 942.1ZM932.3 942.1L944.3 942.1L944.3 950L932.3 950Z" stroke="#ff44ff" stroke-width="3" fill="none"/>
<path  d="M1074.6 873.7L1091.4 873.7L1091.4 887.1L1074.6 887.1ZM1084.5 899.3L1098.4 899.3L1098.4 916.3L1084.5 916.3ZM1066 916.2L1073.1 916.2L1073.1 929.3L1066 929.3Z" stroke="#f0a020" stroke-width="3.4" fill="none"/>
<path  d="M1091.4 873.7L1107.8 873.7L1107.8 887.1L1091.4 887.1ZM1035.2 887.1L1043.4 887.1L1043.4 899.3L1035.2 899.3ZM967.9 899.3L981.4 899.3L981.4 916.3L967.9 916.3ZM953.5 942.1L965.5 942.1L965.5 950L953.5 950Z" stroke="#f0a020" stroke-width="3" fill="none"/>
<path  d="M1114.9 873.7L1120 873.7L1120 887.1L1114.9 887.1ZM952.3 887.1L962.7 887.1L962.7 899.3L952.3 899.3ZM1070.7 887.1L1082.7 887.1L1082.7 899.3L1070.7 899.3ZM1082.7 887.1L1097.1 887.1L1097.1 899.3L1082.7 899.3ZM1113.6 899.3L1120 899.3L1120 916.3L1113.6 916.3ZM1000.2 916.2L1007.5 916.2L1007.5 929.3L1000.2 929.3ZM1007.5 916.2L1018.2 916.2L1018.2 929.3L1007.5 929.3ZM888.1 929.3L904.6 929.3L904.6 942.1L888.1 942.1ZM919.3 929.3L930 929.3L930 942.1L919.3 942.1ZM905 942.1L914.3 942.1L914.3 950L905 950ZM991.3 942.1L1000.6 942.1L1000.6 950L991.3 950ZM951.2 945.1L967.5 945.1L967.5 960L951.2 960Z" stroke="#ffe000" stroke-width="2.6" fill="none"/>
<path  d="M904.1 887.1L916.9 887.1L916.9 899.3L904.1 899.3ZM918.1 899.3L925.7 899.3L925.7 916.3L918.1 916.3ZM939.6 899.3L952.5 899.3L952.5 916.3L939.6 916.3ZM1040.3 899.3L1055.9 899.3L1055.9 916.3L1040.3 916.3ZM890.7 916.2L902.7 916.2L902.7 929.3L890.7 929.3ZM1073.1 916.2L1082.2 916.2L1082.2 929.3L1073.1 929.3ZM1000.6 942.1L1012.8 942.1L1012.8 950L1000.6 950Z" stroke="#ffffff" stroke-width="2.6" fill="none"/>
<path  d="M1043.4 893.2L1055 893.2M885.6 907.8L902.2 907.8M928.7 922.8L939.2 922.8M1018.2 922.8L1028.5 922.8M1015.2 935.7L1027.1 935.7" stroke="#ffe000" stroke-width="2" fill="none"/>
<path  d="M1012.8 942.1L1028.1 942.1L1028.1 950L1012.8 950Z" stroke="#ff44ff" stroke-width="2.6" fill="none"/>
<path  d="M1028.1 946L1035.5 946" stroke="#f0a020" stroke-width="2" fill="none"/>
<path d="M876.3 880.1h12.4v5.5h-12.4ZM923.7 877.7h10.4v3.6h-10.4ZM1015.9 878.1h5.6v5.5h-5.6ZM1107.8 878.9h4.6v5.7h-4.6ZM928 894.1h4.9v3.9h-4.9ZM1012.8 888.6h3.7v4h-3.7ZM902.2 904.5h11.3v5.5h-11.3ZM1018.3 900.4h9.5v4.9h-9.5ZM1086 900.8h7.9v3.8h-7.9ZM1009.6 900.3h3.9v2.8h-3.9ZM1050 891.1h4.3v3.8h-4.3ZM939.1 913.9h4.7v2.4h-4.7ZM1002.6 878.7h2.5v2h-2.5ZM904.3 904.4h2.2v3.8h-2.2ZM976.4 875h2.8v3.4h-2.8ZM1076.9 898.1h2.4v3.7h-2.4ZM974.2 907.2h4.5v2.9h-4.5ZM1075.4 891.7h2.1v3.4h-2.1ZM1053.1 888.9h2.4v3.2h-2.4ZM1065 880.5h4.3v2.9h-4.3ZM986.1 881.4h3v2.9h-3ZM943 874.8h4.6v2.4h-4.6ZM1067.5 917.7h2.5v2.3h-2.5ZM986.6 933.4h8.7v5h-8.7ZM966.8 922.9h3.4v2.4h-3.4ZM909.4 939.1h3.2v2.6h-3.2ZM1048.6 938.7h4.9v3h-4.9ZM1010.9 930.5h3.9v2.1h-3.9ZM934.3 948.4h2.9v1.6h-2.9ZM1005.8 925.3h5v4h-5ZM889.7 937.5h4.6v3.2h-4.6ZM1002.1 935.1h4.9v2.7h-4.9ZM1013 917.9h4.8v2.6h-4.8ZM979.5 957.9h3.7v2.1h-3.7ZM968 954h4.2v2.4h-4.2Z" fill="#f0a020"/>
<path d="M902.3 879.9h3.8v3.8h-3.8ZM914.6 880.1h3.5v3.5h-3.5ZM949.5 877.9h2.6v3.4h-2.6ZM1050.4 880.8h2.8v4.1h-2.8ZM1098.3 876.1h3.9v3.3h-3.9ZM894.1 892.4h3.6v3.1h-3.6ZM907.7 890.3h2.8v2.7h-2.8ZM956.5 892.1h3.8v2.9h-3.8ZM1063.7 893h2.7v3.8h-2.7ZM1073.5 892.5h2.7v2.7h-2.7ZM1090.6 892h3.3v4h-3.3ZM1099.3 889.2h3.6v3h-3.6ZM879.6 902h3.8v4h-3.8ZM955.3 909.9h3.6v2.7h-3.6ZM983.5 908.9h3.3v4.5h-3.3ZM1065.5 902.3h3.9v4.5h-3.9ZM1115.6 904.3h2.6v3.4h-2.6ZM911.2 896.3h2.6v3.3h-2.6ZM1054.3 888.6h2.4v2.2h-2.4ZM945.3 892h2.6v2.8h-2.6ZM1040.7 912.6h2.8v3.4h-2.8ZM1033.6 882.9h2.4v3.9h-2.4ZM979.8 890.4h2.4v2.8h-2.4ZM906.8 919.6h3.5v3.9h-3.5ZM953.2 922.7h3v4.3h-3ZM971.1 923.1h4.4v3.1h-4.4ZM982.8 919.9h2.7v3.9h-2.7ZM993.8 921.3h4.3v2.9h-4.3ZM1002.2 922.5h4.4v4.1h-4.4ZM1046.6 918.5h3.3v3.2h-3.3ZM1060.2 920.9h4v3.5h-4ZM1075.5 921.1h2.7v4h-2.7ZM933.8 934.6h3v3.5h-3ZM1031.1 933.4h3v3.5h-3ZM926.1 944.2h4.5v4.3h-4.5ZM1057.4 944.2h3.9v3.2h-3.9ZM966.2 939.7h4.8v3.5h-4.8ZM964.1 922.4h2.9v2.4h-2.9ZM1020.6 929.8h2.7v3.4h-2.7ZM1080.5 942.4h2.4v2.2h-2.4ZM905.7 933.2h3.1v2.7h-3.1ZM888 947.3h3.2v2.5h-3.2ZM990.4 915.2h4.3v3.7h-4.3ZM1030.5 931.4h2.7v3.6h-2.7ZM1011 936.7h3.3v3.4h-3.3ZM948.3 931.6h4.2v3.2h-4.2ZM1052.6 933.9h3.5v2h-3.5ZM1039.2 929.5h3.2v2.4h-3.2ZM971.1 953.6h4.4v2.6h-4.4Z" fill="#b0b0b0"/>
<path d="M939.5 878.1h3.7v2.6h-3.7ZM1077 876h3.9v3.7h-3.9ZM1116.9 880.2h2.8v4.2h-2.8ZM992.9 889.5h3.3v2.9h-3.3ZM929.4 909.8h3.3v4.4h-3.3ZM896.3 918.3h3.8v2.7h-3.8ZM922.4 918.5h3.7v4.4h-3.7ZM1010.1 920.5h3.6v4.5h-3.6ZM1034.6 923.1h4.4v3.6h-4.4ZM980.2 933.6h2.9v2.7h-2.9ZM1049.7 931.7h4.4v2.8h-4.4ZM1061.2 935h3.3v2.7h-3.3ZM957.6 944.1h4.4v2.8h-4.4ZM944.6 952h3.7v4.2h-3.7Z" fill="#c8c8c8"/>
<path d="M995.6 875.2h3.4v4h-3.4ZM941.1 900.8h3.7v3h-3.7ZM1026.8 907.9h3.2v3h-3.2ZM888.3 874.5h3.2v3.1h-3.2ZM927.4 913.4h3.4v2.3h-3.4ZM1044.1 898.1h2.5v2.7h-2.5ZM911.7 898.7h3.6v3.5h-3.6ZM1054.9 876.6h2.2v2.7h-2.2ZM1031.9 901.8h3.3v2.5h-3.3ZM889.5 895.7h3.9v4h-3.9ZM1078.9 903.1h2.8v3.5h-2.8ZM1017.8 875.7h3.6v3.9h-3.6ZM1112.4 874.1h5v2.9h-5ZM1028.4 886.2h3.5v2.7h-3.5ZM882.2 874h3.2v2.2h-3.2ZM982 876.3h3.9v2.4h-3.9ZM1009.8 881.7h4.4v2.5h-4.4ZM1025.6 931.2h2.4v3.5h-2.4ZM990.4 918.1h4.1v3h-4.1ZM988.3 918.4h3.5v2.9h-3.5ZM1072.3 925.6h3.1v3.1h-3.1ZM1058.7 934.9h4v2.6h-4ZM1076.6 936.7h4.6v2.1h-4.6ZM1069.1 943.7h2.4v2.9h-2.4ZM938.3 959.8h3.3v0.2h-3.3Z" fill="#ff44ff"/>
<path d="M1004.4 875.2h6.7v2.4h-6.7ZM1061.2 875.2h6.2v3.7h-6.2ZM935.4 892.8h15.8v4.7h-15.8ZM975.5 894h11.4v5.8h-11.4ZM990.4 910.4h5.3v4h-5.3ZM1041.8 900.8h7.2v3h-7.2ZM957.9 887.3h2.5v2.9h-2.5ZM1042 879.3h2.7v3.4h-2.7ZM1008.7 903.4h3.4v3.9h-3.4ZM967.5 902.9h4.9v3.9h-4.9ZM1003.3 910.9h2.8v3.2h-2.8ZM983.9 876.5h4.9v2.7h-4.9ZM949.1 878.6h3.2v2.4h-3.2ZM878 891.7h2.5v3.1h-2.5ZM924.4 906.3h2.9v2.1h-2.9ZM994.8 892.4h4.8v2h-4.8ZM894.8 916.8h4.8v1.2h-4.8ZM1077.8 877.9h2.6v3.3h-2.6ZM967.5 881.2h4.8v3.4h-4.8ZM1050.6 894.1h3.5v3.4h-3.5ZM897.9 885.6h3.3v2.5h-3.3ZM1074.4 908.6h4v2.1h-4ZM1051.5 889.4h4.1v2.8h-4.1ZM1045.3 907h2.4v2.1h-2.4ZM989.7 916.1h3.8v1.9h-3.8ZM947.7 892.6h2.9v3.1h-2.9ZM992.6 904.4h3.7v3.1h-3.7ZM944.1 899.4h2.1v2.5h-2.1ZM910.4 882.9h3.3v2.4h-3.3ZM977.4 901.7h4.6v2.3h-4.6ZM1014.8 885.6h2.3v3.3h-2.3ZM939.2 923.7h5.1v4.2h-5.1ZM945.1 930.8h2.3v2.3h-2.3ZM998.2 935.5h9.2v5.7h-9.2ZM890.8 944.6h11.3v3.2h-11.3ZM944.3 942.3h7.2v3.9h-7.2ZM1002.1 943.6h6.4v1.5h-6.4ZM964 924.7h4.7v2.7h-4.7ZM910.4 918.1h3.9v2.3h-3.9ZM989.1 949.7h2.5v0.3h-2.5ZM936.1 942.7h2.8v3.1h-2.8ZM888.5 943h2.4v4h-2.4ZM1057 921.5h2.5v2.5h-2.5ZM1063 929.5h3.5v2.8h-3.5ZM912.8 930.7h3.5v2.6h-3.5ZM976.7 915.2h2.3v2.5h-2.3ZM1062 947.5h2.1v2.5h-2.1ZM899.1 918h2.8v2.3h-2.8ZM1065.9 939.1h4.9v2.2h-4.9ZM919.9 929.8h5v3.2h-5ZM973.2 921.1h3.9v2.3h-3.9ZM960.5 953.3h3.1v2.1h-3.1Z" fill="#ffe000"/>
<path d="M1034.8 876.1h9v3.5h-9ZM965.6 891.8h3.9v2.9h-3.9ZM1025.7 893.7h9.2v5.6h-9.2ZM920.2 902.8h2.9v3.8h-2.9ZM997.6 902.9h3.2v5h-3.2ZM1005 900.8h12.8v5h-12.8ZM1098.4 907.6h6.9v4.1h-6.9ZM885.6 878.2h2.4v3.8h-2.4ZM1048.1 888.9h2.4v3.8h-2.4ZM1071.9 910.5h3.2v3.6h-3.2ZM1061.3 884.1h2.5v2.4h-2.5ZM898.3 897.5h2.6v3.6h-2.6ZM1044.4 913.7h3.5v2.9h-3.5ZM1077.3 905.8h4.1v2.6h-4.1ZM974.2 886.2h3.5v3.1h-3.5ZM950.1 898.1h2.2v3.7h-2.2ZM1082.6 892.3h4v3.3h-4ZM970.8 887.8h3v2.9h-3ZM1048.5 889h4.3v3.4h-4.3ZM974.5 903.2h2.9v2.7h-2.9ZM925.5 887.9h3.3v2.3h-3.3ZM984.1 893.9h2.9v3.9h-2.9ZM988.6 915.1h3.3v2.9h-3.3ZM1005.7 888.2h4.3v3.2h-4.3ZM1096.7 875.8h4v2h-4ZM915.8 899.7h2.9v3.3h-2.9ZM1107.1 892.2h2.3v3.6h-2.3ZM1019.7 883.1h2.3v3.4h-2.3ZM1075.4 902.1h2.7v3.1h-2.7ZM986.1 906.8h2.3v2.7h-2.3ZM913.1 894.7h4.4v3.9h-4.4ZM881.3 892.2h4.4v3.1h-4.4ZM935.2 913.5h3.2v2.1h-3.2ZM913 895.2h3.3v3.8h-3.3ZM984.5 904.5h4.3v3h-4.3ZM1006 905.7h3.5v3.9h-3.5ZM928.1 900.8h5v3.5h-5ZM1000.8 906.1h4.8v2.5h-4.8ZM986.6 915.8h3.6v2.2h-3.6ZM1021.8 886.3h2.6v3h-2.6ZM1009.2 914.4h2.6v3.5h-2.6ZM1025.6 889.4h4v2.4h-4ZM1003.1 894.6h2.7v3h-2.7ZM887.9 878h3.6v2.5h-3.6ZM881.6 896.7h3.3v2.3h-3.3ZM931.2 879.2h3.4v2.3h-3.4ZM920.6 904.9h4.5v2.8h-4.5ZM1060.8 884.3h2.1v3.1h-2.1ZM952.9 933.9h6.2v3.2h-6.2ZM962.6 933.9h12.6v4.8h-12.6ZM1071.7 932.1h2.7v3.3h-2.7ZM1080.6 932.1h3.3v2.9h-3.3ZM907.2 944.1h3.8v3h-3.8ZM935.4 944.2h3.5v4.4h-3.5ZM974.9 942.6h11.3v5.5h-11.3ZM993.8 944.1h3.6v3.1h-3.6ZM892.6 920.4h3.5v3.8h-3.5ZM1021.5 935.5h3.4v2.4h-3.4ZM925.4 945.9h4v4h-4ZM933.8 936.2h2.8v2.8h-2.8ZM995.6 938.4h3.5v2.9h-3.5ZM999.4 919.1h3.2v3.1h-3.2ZM903.6 938.4h3.6v3h-3.6ZM979 919.6h2.8v2.6h-2.8ZM962.7 939.4h4v3.6h-4ZM1019.4 949.6h4.4v0.4h-4.4ZM936.6 942h3.2v3.4h-3.2ZM1080.9 930.9h3.3v3h-3.3ZM962.9 922.7h3.2v3.8h-3.2ZM961.5 924h4.2v2.5h-4.2ZM1043.9 946h4.1v3.9h-4.1ZM945.9 933.9h4.7v3h-4.7ZM1062.8 926.8h3.4v3.3h-3.4ZM959.9 930.3h2.2v3.7h-2.2ZM957.4 952.4h4v4.5h-4ZM927.4 945.4h4.5v2.8h-4.5ZM937.1 948.1h2.8v3.8h-2.8Z" fill="#ffffff"/>
<path d="M1000.6 888.6h4.6v4.1h-4.6ZM1073.3 900.8h4.6v5.4h-4.6ZM1019.4 896.2h5v3.9h-5ZM978.6 913h4.3v2.4h-4.3ZM1116.2 912.1h3v3.5h-3ZM972.6 917.5h2.8v0.5h-2.8ZM901.6 872.5h3.9v3.9h-3.9ZM1099.1 874.2h3.4v2.1h-3.4ZM920.8 884.4h4.1v3.8h-4.1ZM1075.1 892h4.2v2.2h-4.2ZM1080.8 904h3v2h-3ZM991 916.9h3.8v1.1h-3.8ZM1023.7 913.3h2v2.3h-2ZM1011.4 905.4h2.6v2.6h-2.6ZM1111.5 913.8h2.3v2.5h-2.3ZM1116.7 890.6h3.3v2.4h-3.3ZM1089.5 909.9h4.7v2.5h-4.7ZM1069.4 943.6h7.8v1.7h-7.8ZM942.9 941h3.8v2.5h-3.8ZM1013.5 945.6h3.8v2.8h-3.8ZM1007.9 938.1h4.2v2.9h-4.2ZM956.2 938.3h3v3.2h-3ZM1063.5 943.3h2.9v3.1h-2.9ZM1019 945.1h2.4v2.1h-2.4ZM990 926.6h2.3v3.2h-2.3ZM928.9 948.7h3.8v1.3h-3.8ZM1022.7 919.5h2.7v3.6h-2.7ZM934.2 924.4h4.3v2.1h-4.3ZM936.7 923h2.7v2.9h-2.7ZM891.1 923.6h4.9v3.3h-4.9ZM904.7 932.6h3.8v2.3h-3.8ZM949.7 947.9h3.3v2.8h-3.3Z" fill="#18d8f0"/>
<path d="M1087.8 903.3h3.2v3.7h-3.2ZM952.8 875.5h3v4h-3ZM1003.4 881h5v3.1h-5ZM1021.1 877.4h2.2v2.8h-2.2ZM1099.4 880h4.9v3.8h-4.9ZM1072.7 884.2h4v3.7h-4ZM896.1 905.9h2.8v2.7h-2.8ZM1064.7 897.5h2.4v3.2h-2.4ZM1019.3 880.3h3.3v3.4h-3.3ZM1118.6 902.2h1.4v2.6h-1.4ZM876 906.2h2.3v3.1h-2.3ZM1027.9 883.8h2.2v2.8h-2.2ZM954.8 873.9h3v3.1h-3ZM964.6 911.9h4v3.3h-4ZM980.2 892.5h3.5v2.3h-3.5ZM998.5 873.6h4.6v2.4h-4.6ZM1113 886.8h4.8v2.3h-4.8ZM971.5 906.6h4.8v4h-4.8ZM1033.9 887.4h3.3v3.7h-3.3ZM1085.5 890.8h3.6v2.7h-3.6ZM975.7 880.1h3.2v3.5h-3.2ZM878.9 911.8h4.3v3.9h-4.3ZM888.6 893.6h3.3v2.3h-3.3ZM976.8 947.4h4.4v2.3h-4.4ZM1081.3 947h3.3v3h-3.3ZM1078.8 933.9h3.2v2.7h-3.2ZM962.8 947.6h2.3v2.4h-2.3ZM900 917.3h3v3.8h-3ZM921.9 946.6h4.4v3.4h-4.4ZM902.6 947h2.1v2.3h-2.1ZM980.1 925.8h3.1v3h-3.1ZM937.6 951.6h4.3v2.3h-4.3Z" fill="#00f000"/>
<path d="M880 890h10v12h-10ZM968 868h12v16h-12Z" fill="#1aa0e0"/>
</g>
<path  d="M850 799L874 798M842.5 796L849.5 796L849.5 802.5L842.5 802.5ZM853 821.5L877 820.5M845.5 818.5L852.5 818.5L852.5 825L845.5 825ZM856.7 840.6L880.7 839.6M849.2 837.6L856.2 837.6L856.2 844.1L849.2 844.1ZM859 858.5L883 857.5M851.5 855.5L858.5 855.5L858.5 862L851.5 862ZM861 880L885 879M853.5 877L860.5 877L860.5 883.5L853.5 883.5ZM1106 768.5L1127 766.5M1127.5 763.5L1134.5 763.5L1134.5 770L1127.5 770ZM1109.5 789.8L1130.5 787.8M1131 784.8L1138 784.8L1138 791.3L1131 791.3ZM1113 806.6L1134 804.6M1134.5 801.6L1141.5 801.6L1141.5 808.1L1134.5 808.1ZM1115 828L1136 826M1136.5 823L1143.5 823L1143.5 829.5L1136.5 829.5ZM1117 849L1138 847M1138.5 844L1145.5 844L1145.5 850.5L1138.5 850.5ZM1122 869.5L1143 867.5M1143.5 864.5L1150.5 864.5L1150.5 871L1143.5 871ZM896 950L901 991M897.5 991L904.5 991L904.5 997.5L897.5 997.5ZM926 950L931 988M927.5 988L934.5 988L934.5 994.5L927.5 994.5ZM955.5 950L960.5 984.7M957 984.7L964 984.7L964 991.2L957 991.2ZM983.5 950L988.5 980M985 980L992 980L992 986.5L985 986.5ZM1011.6 950L1016.6 978M1013.1 978L1020.1 978L1020.1 984.5L1013.1 984.5ZM1040.8 950L1045.8 974.6M1042.3 974.6L1049.3 974.6L1049.3 981.1L1042.3 981.1ZM1069 950L1074 971M1070.5 971L1077.5 971L1077.5 977.5L1070.5 977.5ZM1098 950L1103 969M1099.5 969L1106.5 969L1106.5 975.5L1099.5 975.5ZM1117 950L1122 966.7M1118.5 966.7L1125.5 966.7L1125.5 973.2L1118.5 973.2ZM1139.6 950L1144.6 964.4M1141.1 964.4L1148.1 964.4L1148.1 970.9L1141.1 970.9Z" stroke="#1f9a3a" stroke-width="1.5" fill="none"/>
<path  d="M973 1050L994 1050" stroke="#1f9a3a" stroke-width="2.2" fill="none"/>
<path d="M1008 1050h12.5v5.5h-12.5Z" fill="#ffffff"/>
<path d="M1901.3 691.3h52.7v293.3h-52.7Z" fill="#ffffff"/>
<path d="M1904 694.7h48v12.3h-48ZM1904 713.8h48v15.7h-48ZM1904 734h48v10h-48ZM1904 748.5h48v38.2h-48ZM1904 792h48v16h-48ZM1904 814.7h48v28.1h-48ZM1904 849.5h48v28.1h-48ZM1904 936h48v12h-48ZM1904 955h48v11h-48ZM1904 970.7h48v12.3h-48ZM1904 709.5h40v2h-40ZM1904 810h40v2h-40ZM1904 845.5h40v2h-40ZM1904 881h40v2h-40ZM1904 932h40v2h-40ZM1904 950.5h40v2h-40ZM1904 967h40v2h-40Z" fill="#000"/>
<path d="M1913 720h30v5h-30ZM1920 716h15v4h-15ZM1918 736h18v6h-18Z" fill="#ffffff"/>
<path d="M1912 885h8v2.2h-8ZM1944 885h8v2.2h-8ZM1912 889h8v2.2h-8ZM1944 889h8v2.2h-8ZM1912 893h8v2.2h-8ZM1944 893h8v2.2h-8ZM1912 897h8v2.2h-8ZM1944 897h8v2.2h-8ZM1912 901h8v2.2h-8ZM1944 901h8v2.2h-8ZM1912 905h8v2.2h-8ZM1944 905h8v2.2h-8ZM1944 909h8v2.2h-8Z" fill="#00f000"/>
<path d="M1923 885h8v2.2h-8ZM1923 889h8v2.2h-8ZM1923 893h8v2.2h-8ZM1923 897h8v2.2h-8ZM1923 901h8v2.2h-8ZM1923 905h8v2.2h-8ZM1912 909h8v2.2h-8ZM1923 909h8v2.2h-8ZM1912 919h15v2h-15ZM1940 919h12v2h-12ZM1912 923h15v2h-15ZM1940 923h12v2h-12ZM1912 927h15v2h-15ZM1940 927h12v2h-12Z" fill="#000"/>
<path  d="M1385.7 685.7L1957.4 685.7L1957.4 991.3L1385.7 991.3Z" stroke="#ffffff" stroke-width="2.4" fill="none"/>
<path  d="M1398.8 691.3L1954 691.3L1954 984.6L1398.8 984.6Z" stroke="#ffffff" stroke-width="2.6" fill="none"/>
<path  d="M1912.5 699L1943 699L1943 705L1912.5 705Z" stroke="#00f000" stroke-width="2" fill="none"/>
<path  d="M1920 942L1936 942" stroke="#00f000" stroke-width="3.5" fill="none"/>
<path  d="M1920 957.5L1936 957.5L1936 963.5L1920 963.5Z" stroke="#00f000" stroke-width="1.8" fill="none"/>
<path  d="M1912 975.5L1943 975.5" stroke="#00f000" stroke-width="4" fill="none"/>
<path d="M1481 733h42.6v15h-42.6ZM1631 733h21.5v15h-21.5ZM1677 733h43v15h-43Z" fill="#5f9ea0"/>
<path d="M1488 757h6v4h-6ZM1509 757h6v4h-6ZM1531 757h6v4h-6ZM1591 757h6v4h-6ZM1622 757h6v4h-6ZM1638 757h6v4h-6ZM1662 757h6v4h-6ZM1683 757h6v4h-6ZM1703 757h6v4h-6ZM1724 757h6v4h-6ZM1744 757h6v4h-6ZM1792 757h6v4h-6Z" fill="#ffffff"/>
<path  d="M1582.5 718L1821.4 718M1478 722L1478 750" stroke="#00f000" stroke-width="2" fill="none"/>
<path  d="M1476.7 724.7L1825.7 724.7" stroke="#ffffff" stroke-width="2.6" fill="none"/>
<path  d="M1476.7 731.6L1825.7 731.6M1584 720L1620 720L1620 750L1584 750ZM1785 720L1823 720L1823 750L1785 750Z" stroke="#f0a020" stroke-width="2.2" fill="none"/>
<path  d="M1476.7 748.6L1825.7 748.6" stroke="#f0a020" stroke-width="2.6" fill="none"/>
<path  d="M1580 738L1580 751.2L1626 751.2L1626 740M1780 740L1780 751.2L1826 751.2" stroke="#f0a020" stroke-width="2" fill="none"/>
<path  d="M1481 720L1481 751M1501 720L1501 751M1522 720L1522 751M1546 720L1546 751M1565 720L1565 751M1652.5 720L1652.5 751M1676 720L1676 751M1697 720L1697 751M1716 720L1716 751M1738 720L1738 751M1762 720L1762 751M1826.5 720L1826.5 751" stroke="#d9461a" stroke-width="1.8" fill="none"/>
<path  d="M1524 726L1524 748M1563 726L1563 748M1606 726L1606 748M1640 726L1640 748M1700 726L1700 748M1750 726L1750 748M1790 726L1790 748" stroke="#ffffff" stroke-width="1.8" fill="none"/>
<path  d="M1474 722L1462 722L1458 727L1470 729L1460 736L1470 742L1458 748L1474 748M1827 722L1846 722L1840 730L1846 738L1838 744L1846 748L1827 748" stroke="#00f000" stroke-width="2.2" fill="none"/>
<path  d="M1481 759.7L1546 759.7M1565 759.7L1826.5 759.7M1565 764L1826.5 764" stroke="#1f9a3a" stroke-width="1.8" fill="none"/>
<path  d="M1481 751L1481 766.5M1501 751L1501 766.5M1522 751L1522 766.5M1546 751L1546 766.5M1565 751L1565 766.5M1652.5 751L1652.5 766.5M1676 751L1676 766.5M1697 751L1697 766.5M1716 751L1716 766.5M1738 751L1738 766.5M1762 751L1762 766.5M1826.5 751L1826.5 766.5" stroke="#1f9a3a" stroke-width="1.6" fill="none"/>
<path  d="M1643 784.5L1667 784.5" stroke="#1f9a3a" stroke-width="2" fill="none"/>
<path d="M1585 818h6v3h-6ZM1605 818h6v3h-6ZM1620 830h6v3h-6ZM1645 830h6v3h-6Z" fill="#ffffff"/>
<path d="M1612 828h8v6h-8Z" fill="#ffe000"/>
<path  d="M1537 811.5L1712 811.5M1555 808L1674 808M1558 812L1558 840M1692 812L1692 840" stroke="#00f000" stroke-width="2" fill="none"/>
<path  d="M1558 812L1692 812M1548 822L1692 822" stroke="#1e78ff" stroke-width="2.4" fill="none"/>
<path  d="M1558 814L1692 814L1692 836L1558 836Z" stroke="#f0a020" stroke-width="2.2" fill="none"/>
<path  d="M1558 826L1692 826" stroke="#ffffff" stroke-width="2" fill="none"/>
<path  d="M1575 812L1575 838M1645 812L1645 838M1679 812L1679 838" stroke="#d9461a" stroke-width="1.8" fill="none"/>
<path  d="M1590 812L1590 838M1605 812L1605 838M1618 812L1618 838M1665 812L1665 838" stroke="#ffffff" stroke-width="1.8" fill="none"/>
<path  d="M1571 838L1571 850M1592 838L1592 850M1606 838L1606 850M1610 838L1610 850M1619 838L1619 850M1636 838L1636 850M1658 838L1658 850M1681 838L1681 850" stroke="#1f9a3a" stroke-width="1.5" fill="none"/>
<path  d="M1611 869L1632 869" stroke="#1f9a3a" stroke-width="2" fill="none"/>
<path d="M1630 905L1706 897L1706 910L1630 912Z" fill="#ffffff"/>
<path d="M1547 920L1550 940L1556 935L1552 920Z" fill="#ffe000"/>
<path  d="M1542 909L1628 909" stroke="#00f000" stroke-width="2.4" fill="none"/>
<path  d="M1544 917L1570 917L1600 915L1628 912" stroke="#f0a020" stroke-width="1.8" fill="none"/>
<path  d="M1560 935L1610 926L1660 915L1690 907" stroke="#ffffff" stroke-width="2.4" fill="none"/>
<path  d="M1542 929L1542 941L1718 941M1718 911L1735 908" stroke="#00f000" stroke-width="2" fill="none"/>
<path  d="M1562 941L1717 941M1628 898L1628 943" stroke="#d9461a" stroke-width="2" fill="none"/>
<path  d="M1686 910L1686 945M1702 905L1702 940" stroke="#d9461a" stroke-width="1.8" fill="none"/>
<path  d="M1712 905L1712 940" stroke="#ffffff" stroke-width="2" fill="none"/>
<path  d="M1685 938L1691 938L1691 946L1685 946Z" stroke="#1f9a3a" stroke-width="1.5" fill="none"/>
<path  d="M1611 961.5L1632 961.5" stroke="#1f9a3a" stroke-width="2" fill="none"/>
<path  d="M1726 578.4L1831.5 578.4M1780 528L1780 627" stroke="#ffffff" stroke-width="2.4" fill="none"/>
<path  d="M1769 568L1791 568L1791 589L1769 589Z" stroke="#3cd060" stroke-width="2" fill="none"/>
<path  d="M2255.5 404L2255.5 1494" stroke="#ffffff" stroke-width="2.6" fill="none"/>
</g></svg>
<!-- layout tabs row -->
<svg style="left:70px;top:1500px" width="160" height="24" viewBox="0 0 160 24">
 <path d="M4 3v18" stroke="#555" stroke-width="2.5"/><path d="M19 3L8 12L19 21Z" fill="#555"/>
 <path d="M59 4L49 12L59 20Z" fill="#555"/>
 <path d="M93 4L103 12L93 20Z" fill="#555"/>
 <path d="M128 3L139 12L128 21Z" fill="#555"/><path d="M144 3v18" stroke="#555" stroke-width="2.5"/>
</svg>
<svg style="left:230px;top:1493px" width="200" height="36" viewBox="0 0 200 36">
 <path d="M2 0 L20 33 L84 33 L101 0" fill="#fff" stroke="#888" stroke-width="1.3"/>
 <path d="M94 3 L104 33 L181 33 L197 0" fill="none" stroke="#888" stroke-width="1.3"/>
</svg>
<div class="t" style="left:253px;top:1497px;font-size:26px;color:#222;-webkit-text-stroke-width:0.7px">模型</div>
<div class="t" style="left:335px;top:1497px;font-size:26px;color:#444">布局1</div>
<!-- command handle -->
<div class="a" style="left:0;top:1528px;width:80px;height:54px;background:#f6f6f6"></div>
<div class="a" style="left:9px;top:1539px;width:4px;height:4px;background:#888;border-radius:2px;box-shadow:0 9px 0 #888,0 18px 0 #888,0 27px 0 #888"></div>
<!-- status bar -->
<div class="a" style="left:0;top:1582px;width:2804px;height:2px;background:#dadada"></div>
<div class="a" style="left:0;top:1584px;width:2804px;height:50px;background:#f7f7f7"></div>
<div class="a" style="left:0;top:1631px;width:2804px;height:3px;background:#dfe6ee"></div>
<div class="t" style="left:20px;top:1593px;font-size:26px;color:#333">命令:</div>
<div class="t" style="left:1447px;top:1593px;font-size:26px;color:#333">空命令</div>
<div class="t" style="left:1681px;top:1592px;font-size:27.5px;color:#333">X:5376982, Y:69255</div>
<div class="t" style="left:2149px;top:1593px;font-size:26px;color:#333">拾取添加</div>
<div class="t" style="left:2383px;top:1593px;font-size:26px;color:#333">正交</div>
<div class="a" style="left:2456px;top:1587px;width:92px;height:39px;background:#b4b4b4"></div>
<div class="t" style="left:2476px;top:1593px;font-size:26px;color:#555">线宽</div>
<div class="t" style="left:2567px;top:1593px;font-size:26px;color:#333">动态输入</div>
<div class="t" style="left:2712px;top:1593px;font-size:26px;color:#333">智能</div>
<svg style="left:2784px;top:1603px" width="16" height="10"><path d="M1 1L8 8L15 1" stroke="#555" stroke-width="2" fill="none"/></svg>

</body></html>
